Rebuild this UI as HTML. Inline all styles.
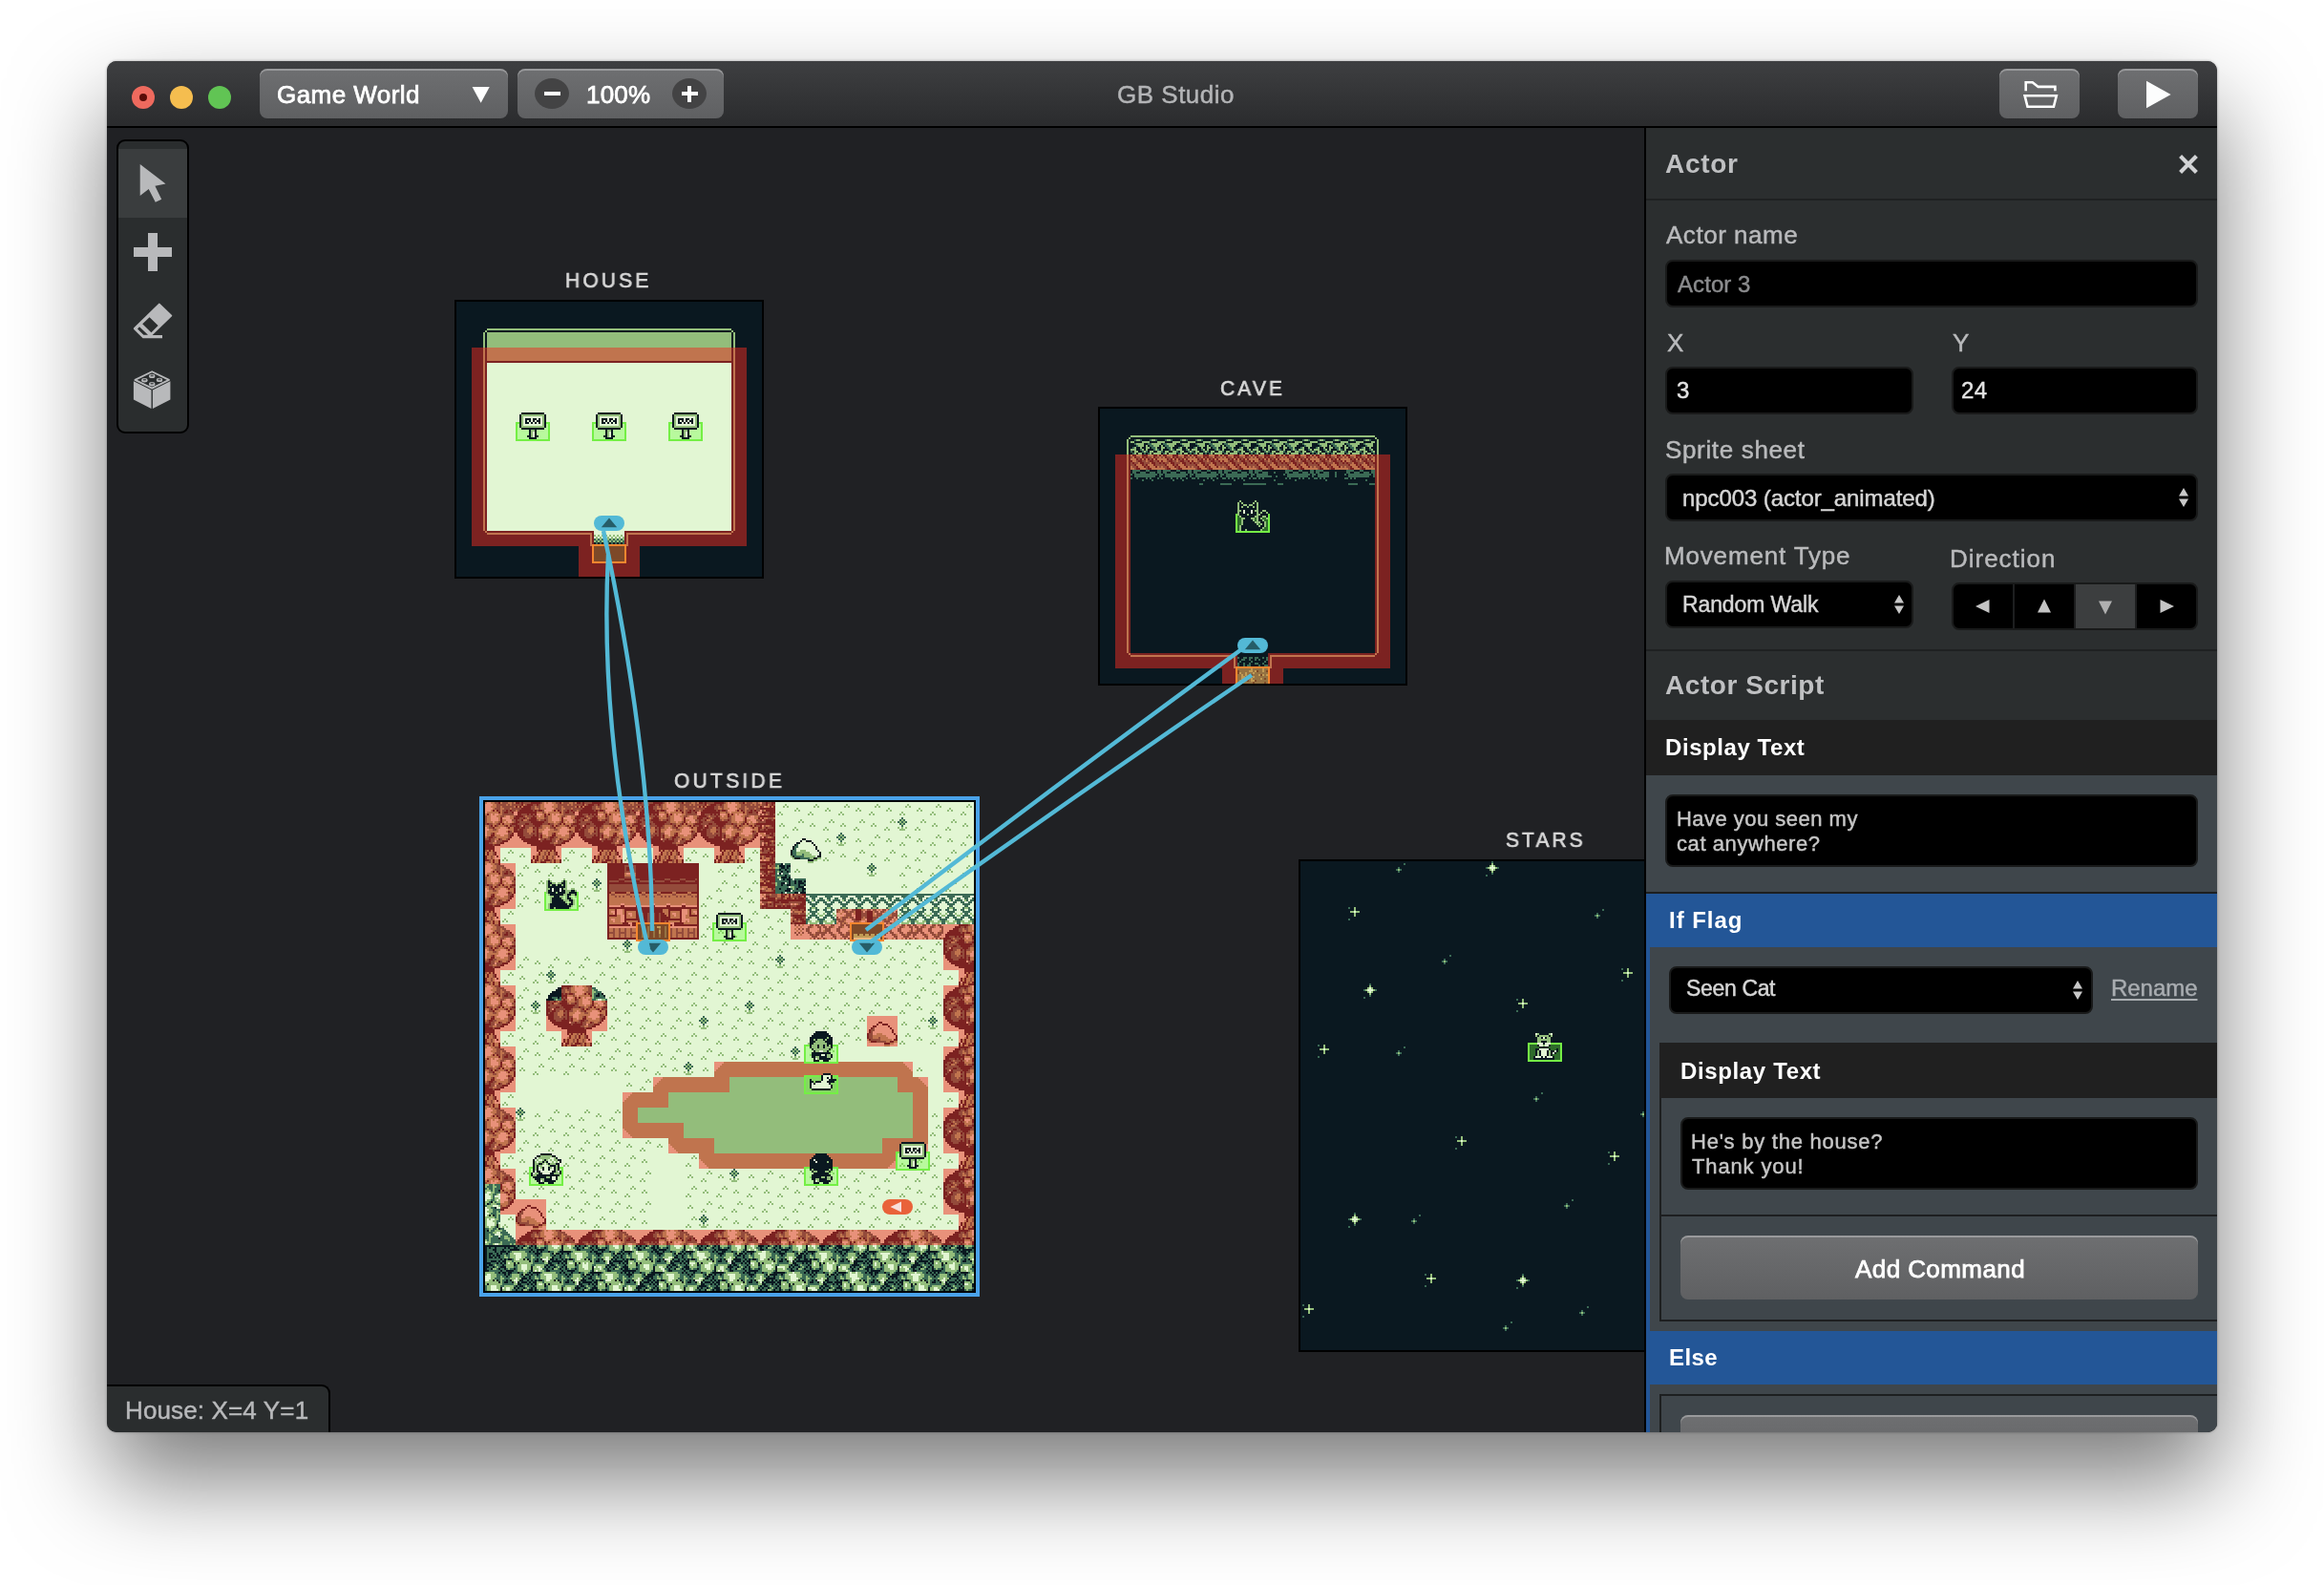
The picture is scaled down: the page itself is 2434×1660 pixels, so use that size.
<!DOCTYPE html>
<html lang="en"><head><meta charset="utf-8"><title>GB Studio</title>
<style>
html,body{margin:0;padding:0}
body{width:2434px;height:1660px;background:#fff;overflow:hidden;position:relative;font-family:"Liberation Sans",sans-serif}
.b{position:absolute;box-sizing:border-box}
.t{position:absolute;white-space:pre;display:block;will-change:transform}
#shadow{position:absolute;left:112px;top:64px;width:2210px;height:1436px;border-radius:10px;
 box-shadow:0 50px 100px rgba(0,0,0,.52),0 0 3px rgba(0,0,0,.35)}
#win{position:absolute;left:112px;top:64px;width:2210px;height:1436px;border-radius:10px;overflow:hidden;background:#202124}
#in{position:absolute;left:-112px;top:-64px;width:2434px;height:1660px}
.tb{background:linear-gradient(#6e6f71,#5f6062);border-radius:8px;box-shadow:inset 0 2px 0 rgba(255,255,255,.3)}
.inp{background:#000;border-radius:8px;border:2px solid #191a1a}
</style></head>
<body>
<div id="shadow"></div>
<div id="win"><div id="in">
<svg class="b" style="left:0;top:0" width="2434" height="1660" viewBox="0 0 2434 1660" shape-rendering="crispEdges" fill="none"><rect x="476" y="314" width="324" height="292" fill="#000"/><svg x="478" y="316" width="320" height="288" viewBox="0 0 160 144"><rect width="160" height="144" fill="#0a1820"/><path stroke="#e2f6d3" d="M16 32.5h128M16 33.5h128M16 34.5h128M16 35.5h128M16 36.5h128M16 37.5h128M16 38.5h128M16 39.5h128M16 40.5h128M16 41.5h128M16 42.5h128M16 43.5h128M16 44.5h128M16 45.5h128M16 46.5h128M16 47.5h128M16 48.5h128M16 49.5h128M16 50.5h128M16 51.5h128M16 52.5h128M16 53.5h128M16 54.5h128M16 55.5h128M16 56.5h128M16 57.5h128M16 58.5h18M46 58.5h28M86 58.5h28M126 58.5h18M16 59.5h17M47 59.5h26M87 59.5h26M127 59.5h17M16 60.5h17M35 60.5h10M47 60.5h26M75 60.5h10M87 60.5h26M115 60.5h10M127 60.5h17M16 61.5h17M35 61.5h1M39 61.5h1M42 61.5h1M44 61.5h1M47 61.5h26M75 61.5h1M79 61.5h1M82 61.5h1M84 61.5h1M87 61.5h26M115 61.5h1M119 61.5h1M122 61.5h1M124 61.5h1M127 61.5h17M16 62.5h17M35 62.5h1M37 62.5h1M39 62.5h1M41 62.5h1M44 62.5h1M47 62.5h26M75 62.5h1M77 62.5h1M79 62.5h1M81 62.5h1M84 62.5h1M87 62.5h26M115 62.5h1M117 62.5h1M119 62.5h1M121 62.5h1M124 62.5h1M127 62.5h17M16 63.5h17M35 63.5h1M38 63.5h1M40 63.5h1M42 63.5h1M44 63.5h1M47 63.5h26M75 63.5h1M78 63.5h1M80 63.5h1M82 63.5h1M84 63.5h1M87 63.5h26M115 63.5h1M118 63.5h1M120 63.5h1M122 63.5h1M124 63.5h1M127 63.5h17M16 64.5h17M35 64.5h10M47 64.5h26M75 64.5h10M87 64.5h26M115 64.5h10M127 64.5h17M16 65.5h17M47 65.5h26M87 65.5h26M127 65.5h17M16 66.5h18M46 66.5h28M86 66.5h28M126 66.5h18M16 67.5h22M42 67.5h36M82 67.5h36M122 67.5h22M16 68.5h22M40 68.5h1M42 68.5h36M80 68.5h1M82 68.5h36M120 68.5h1M122 68.5h22M16 69.5h22M40 69.5h1M42 69.5h36M80 69.5h1M82 69.5h36M120 69.5h1M122 69.5h22M16 70.5h21M40 70.5h1M43 70.5h34M80 70.5h1M83 70.5h34M120 70.5h1M123 70.5h21M16 71.5h22M42 71.5h36M82 71.5h36M122 71.5h22M16 72.5h128M16 73.5h128M16 74.5h128M16 75.5h128M16 76.5h128M16 77.5h128M16 78.5h128M16 79.5h128M16 80.5h128M16 81.5h128M16 82.5h128M16 83.5h128M16 84.5h128M16 85.5h128M16 86.5h128M16 87.5h128M16 88.5h128M16 89.5h128M16 90.5h128M16 91.5h128M16 92.5h128M16 93.5h128M16 94.5h128M16 95.5h128M16 96.5h128M16 97.5h128M16 98.5h128M16 99.5h128M16 100.5h128M16 101.5h128M16 102.5h128M16 103.5h128M16 104.5h128M16 105.5h128M16 106.5h128M16 107.5h128M16 108.5h128M16 109.5h128M16 110.5h128M16 111.5h128M16 112.5h128M16 113.5h128M16 114.5h128M16 115.5h128M16 116.5h128M16 117.5h128M16 118.5h128M16 119.5h128M72 120.5h16M72 121.5h16M73 122.5h1M75 122.5h1M77 122.5h1M79 122.5h1M81 122.5h1M83 122.5h1M85 122.5h1M87 122.5h1M72 123.5h1M74 123.5h1M76 123.5h1M78 123.5h1M80 123.5h1M82 123.5h1M84 123.5h1M86 123.5h1"/><path stroke="#93bd7b" d="M16 14.5h128M15 15.5h1M144 15.5h1M14 16.5h1M16 16.5h128M145 16.5h1M14 17.5h1M16 17.5h128M145 17.5h1M14 18.5h1M16 18.5h128M145 18.5h1M14 19.5h1M16 19.5h128M145 19.5h1M14 20.5h1M16 20.5h128M145 20.5h1M14 21.5h1M16 21.5h128M145 21.5h1M14 22.5h1M16 22.5h128M145 22.5h1M14 23.5h1M16 23.5h128M145 23.5h1M14 24.5h1M16 24.5h128M145 24.5h1M14 25.5h1M16 25.5h128M145 25.5h1M14 26.5h1M16 26.5h128M145 26.5h1M14 27.5h1M16 27.5h128M145 27.5h1M14 28.5h1M16 28.5h128M145 28.5h1M14 29.5h1M16 29.5h128M145 29.5h1M14 30.5h1M16 30.5h128M145 30.5h1M14 31.5h1M145 31.5h1M14 32.5h1M145 32.5h1M14 33.5h1M145 33.5h1M14 34.5h1M145 34.5h1M14 35.5h1M145 35.5h1M14 36.5h1M145 36.5h1M14 37.5h1M145 37.5h1M14 38.5h1M145 38.5h1M14 39.5h1M145 39.5h1M14 40.5h1M145 40.5h1M14 41.5h1M145 41.5h1M14 42.5h1M145 42.5h1M14 43.5h1M145 43.5h1M14 44.5h1M145 44.5h1M14 45.5h1M145 45.5h1M14 46.5h1M145 46.5h1M14 47.5h1M145 47.5h1M14 48.5h1M145 48.5h1M14 49.5h1M145 49.5h1M14 50.5h1M145 50.5h1M14 51.5h1M145 51.5h1M14 52.5h1M145 52.5h1M14 53.5h1M145 53.5h1M14 54.5h1M145 54.5h1M14 55.5h1M145 55.5h1M14 56.5h1M145 56.5h1M14 57.5h1M145 57.5h1M14 58.5h1M145 58.5h1M14 59.5h1M34 59.5h12M74 59.5h12M114 59.5h12M145 59.5h1M14 60.5h1M34 60.5h1M45 60.5h1M74 60.5h1M85 60.5h1M114 60.5h1M125 60.5h1M145 60.5h1M14 61.5h1M34 61.5h1M45 61.5h1M74 61.5h1M85 61.5h1M114 61.5h1M125 61.5h1M145 61.5h1M14 62.5h1M34 62.5h1M45 62.5h1M74 62.5h1M85 62.5h1M114 62.5h1M125 62.5h1M145 62.5h1M14 63.5h1M34 63.5h1M45 63.5h1M74 63.5h1M85 63.5h1M114 63.5h1M125 63.5h1M145 63.5h1M14 64.5h1M34 64.5h1M45 64.5h1M74 64.5h1M85 64.5h1M114 64.5h1M125 64.5h1M145 64.5h1M14 65.5h1M34 65.5h12M74 65.5h12M114 65.5h12M145 65.5h1M14 66.5h1M145 66.5h1M14 67.5h1M39 67.5h2M79 67.5h2M119 67.5h2M145 67.5h1M14 68.5h1M39 68.5h1M79 68.5h1M119 68.5h1M145 68.5h1M14 69.5h1M39 69.5h1M79 69.5h1M119 69.5h1M145 69.5h1M14 70.5h1M39 70.5h1M79 70.5h1M119 70.5h1M145 70.5h1M14 71.5h1M145 71.5h1M14 72.5h1M145 72.5h1M14 73.5h1M145 73.5h1M14 74.5h1M145 74.5h1M14 75.5h1M145 75.5h1M14 76.5h1M145 76.5h1M14 77.5h1M145 77.5h1M14 78.5h1M145 78.5h1M14 79.5h1M145 79.5h1M14 80.5h1M145 80.5h1M14 81.5h1M145 81.5h1M14 82.5h1M145 82.5h1M14 83.5h1M145 83.5h1M14 84.5h1M145 84.5h1M14 85.5h1M145 85.5h1M14 86.5h1M145 86.5h1M14 87.5h1M145 87.5h1M14 88.5h1M145 88.5h1M14 89.5h1M145 89.5h1M14 90.5h1M145 90.5h1M14 91.5h1M145 91.5h1M14 92.5h1M145 92.5h1M14 93.5h1M145 93.5h1M14 94.5h1M145 94.5h1M14 95.5h1M145 95.5h1M14 96.5h1M145 96.5h1M14 97.5h1M145 97.5h1M14 98.5h1M145 98.5h1M14 99.5h1M145 99.5h1M14 100.5h1M145 100.5h1M14 101.5h1M145 101.5h1M14 102.5h1M145 102.5h1M14 103.5h1M145 103.5h1M14 104.5h1M145 104.5h1M14 105.5h1M145 105.5h1M14 106.5h1M145 106.5h1M14 107.5h1M145 107.5h1M14 108.5h1M145 108.5h1M14 109.5h1M145 109.5h1M14 110.5h1M145 110.5h1M14 111.5h1M145 111.5h1M14 112.5h1M145 112.5h1M14 113.5h1M145 113.5h1M14 114.5h1M145 114.5h1M14 115.5h1M145 115.5h1M14 116.5h1M145 116.5h1M14 117.5h1M145 117.5h1M14 118.5h1M145 118.5h1M14 119.5h1M145 119.5h1M15 120.5h1M144 120.5h1M16 121.5h55M89 121.5h55M70 122.5h1M72 122.5h1M74 122.5h1M76 122.5h1M78 122.5h1M80 122.5h1M82 122.5h1M84 122.5h1M86 122.5h1M89 122.5h1M70 123.5h1M73 123.5h1M75 123.5h1M77 123.5h1M79 123.5h1M81 123.5h1M83 123.5h1M85 123.5h1M87 123.5h1M89 123.5h1M70 124.5h1M73 124.5h1M75 124.5h1M77 124.5h1M79 124.5h1M81 124.5h1M83 124.5h1M85 124.5h1M87 124.5h1M89 124.5h1M70 125.5h1M72 125.5h1M74 125.5h1M76 125.5h1M78 125.5h1M80 125.5h1M82 125.5h1M84 125.5h1M86 125.5h1M89 125.5h1M70 126.5h1M89 126.5h1M70 127.5h1M89 127.5h1"/><path stroke="#3b6a55" d="M72 124.5h1M74 124.5h1M76 124.5h1M78 124.5h1M80 124.5h1M82 124.5h1M84 124.5h1M86 124.5h1M73 125.5h1M75 125.5h1M77 125.5h1M79 125.5h1M81 125.5h1M83 125.5h1M85 125.5h1M87 125.5h1M73 126.5h1M75 126.5h1M77 126.5h1M79 126.5h1M81 126.5h1M83 126.5h1M85 126.5h1M87 126.5h1M72 127.5h1M74 127.5h1M76 127.5h1M78 127.5h1M80 127.5h1M82 127.5h1M84 127.5h1M86 127.5h1"/><path d="M8 24h144v8h-144zM8 32h8v8h-8zM144 32h8v8h-8zM8 40h8v8h-8zM144 40h8v8h-8zM8 48h8v8h-8zM144 48h8v8h-8zM8 56h8v8h-8zM144 56h8v8h-8zM8 64h8v8h-8zM144 64h8v8h-8zM8 72h8v8h-8zM144 72h8v8h-8zM8 80h8v8h-8zM144 80h8v8h-8zM8 88h8v8h-8zM144 88h8v8h-8zM8 96h8v8h-8zM144 96h8v8h-8zM8 104h8v8h-8zM144 104h8v8h-8zM8 112h8v8h-8zM144 112h8v8h-8zM8 120h64v8h-64zM88 120h64v8h-64zM64 128h8v8h-8zM88 128h8v8h-8zM64 136h32v8h-32z" fill="rgba(238,44,34,.5)"/><rect x="71.5" y="127.5" width="17" height="9" fill="rgba(240,122,48,.5)" stroke="#f5862f" stroke-width="1"/><rect x="31.5" y="63.5" width="17" height="9" fill="rgba(110,255,60,.36)" stroke="#74ef45" stroke-width="1"/><rect x="71.5" y="63.5" width="17" height="9" fill="rgba(110,255,60,.36)" stroke="#74ef45" stroke-width="1"/><rect x="111.5" y="63.5" width="17" height="9" fill="rgba(110,255,60,.36)" stroke="#74ef45" stroke-width="1"/><path stroke="#e2f6d3" d="M35 60.5h10M75 60.5h10M115 60.5h10M35 61.5h1M39 61.5h1M42 61.5h1M44 61.5h1M75 61.5h1M79 61.5h1M82 61.5h1M84 61.5h1M115 61.5h1M119 61.5h1M122 61.5h1M124 61.5h1M35 62.5h1M37 62.5h1M39 62.5h1M41 62.5h1M44 62.5h1M75 62.5h1M77 62.5h1M79 62.5h1M81 62.5h1M84 62.5h1M115 62.5h1M117 62.5h1M119 62.5h1M121 62.5h1M124 62.5h1M35 63.5h1M38 63.5h1M40 63.5h1M42 63.5h1M44 63.5h1M75 63.5h1M78 63.5h1M80 63.5h1M82 63.5h1M84 63.5h1M115 63.5h1M118 63.5h1M120 63.5h1M122 63.5h1M124 63.5h1M35 64.5h10M75 64.5h10M115 64.5h10M40 68.5h1M80 68.5h1M120 68.5h1M40 69.5h1M80 69.5h1M120 69.5h1M40 70.5h1M80 70.5h1M120 70.5h1"/><path stroke="#93bd7b" d="M34 59.5h12M74 59.5h12M114 59.5h12M34 60.5h1M45 60.5h1M74 60.5h1M85 60.5h1M114 60.5h1M125 60.5h1M34 61.5h1M45 61.5h1M74 61.5h1M85 61.5h1M114 61.5h1M125 61.5h1M34 62.5h1M45 62.5h1M74 62.5h1M85 62.5h1M114 62.5h1M125 62.5h1M34 63.5h1M45 63.5h1M74 63.5h1M85 63.5h1M114 63.5h1M125 63.5h1M34 64.5h1M45 64.5h1M74 64.5h1M85 64.5h1M114 64.5h1M125 64.5h1M34 65.5h12M74 65.5h12M114 65.5h12M39 67.5h2M79 67.5h2M119 67.5h2M39 68.5h1M79 68.5h1M119 68.5h1M39 69.5h1M79 69.5h1M119 69.5h1M39 70.5h1M79 70.5h1M119 70.5h1"/><path stroke="#0a1820" d="M34 58.5h12M74 58.5h12M114 58.5h12M33 59.5h1M46 59.5h1M73 59.5h1M86 59.5h1M113 59.5h1M126 59.5h1M33 60.5h1M46 60.5h1M73 60.5h1M86 60.5h1M113 60.5h1M126 60.5h1M33 61.5h1M36 61.5h3M40 61.5h2M43 61.5h1M46 61.5h1M73 61.5h1M76 61.5h3M80 61.5h2M83 61.5h1M86 61.5h1M113 61.5h1M116 61.5h3M120 61.5h2M123 61.5h1M126 61.5h1M33 62.5h1M36 62.5h1M38 62.5h1M40 62.5h1M42 62.5h2M46 62.5h1M73 62.5h1M76 62.5h1M78 62.5h1M80 62.5h1M82 62.5h2M86 62.5h1M113 62.5h1M116 62.5h1M118 62.5h1M120 62.5h1M122 62.5h2M126 62.5h1M33 63.5h1M36 63.5h2M39 63.5h1M41 63.5h1M43 63.5h1M46 63.5h1M73 63.5h1M76 63.5h2M79 63.5h1M81 63.5h1M83 63.5h1M86 63.5h1M113 63.5h1M116 63.5h2M119 63.5h1M121 63.5h1M123 63.5h1M126 63.5h1M33 64.5h1M46 64.5h1M73 64.5h1M86 64.5h1M113 64.5h1M126 64.5h1M33 65.5h1M46 65.5h1M73 65.5h1M86 65.5h1M113 65.5h1M126 65.5h1M34 66.5h12M74 66.5h12M114 66.5h12M38 67.5h1M41 67.5h1M78 67.5h1M81 67.5h1M118 67.5h1M121 67.5h1M38 68.5h1M41 68.5h1M78 68.5h1M81 68.5h1M118 68.5h1M121 68.5h1M38 69.5h1M41 69.5h1M78 69.5h1M81 69.5h1M118 69.5h1M121 69.5h1M37 70.5h2M41 70.5h2M77 70.5h2M81 70.5h2M117 70.5h2M121 70.5h2M38 71.5h4M78 71.5h4M118 71.5h4"/></svg><rect x="1150" y="426" width="324" height="292" fill="#000"/><svg x="1152" y="428" width="320" height="288" viewBox="0 0 160 144"><rect width="160" height="144" fill="#0a1820"/><path stroke="#e2f6d3" d="M75 53.5h1M79 53.5h1M75 54.5h1M79 54.5h1"/><path stroke="#93bd7b" d="M16 14.5h128M15 15.5h1M144 15.5h1M14 16.5h1M19 16.5h2M27 16.5h2M35 16.5h2M43 16.5h2M51 16.5h2M59 16.5h2M67 16.5h2M75 16.5h2M83 16.5h2M91 16.5h2M99 16.5h2M107 16.5h2M115 16.5h2M123 16.5h2M131 16.5h2M139 16.5h2M145 16.5h1M14 17.5h1M16 17.5h2M22 17.5h4M30 17.5h4M38 17.5h4M46 17.5h4M54 17.5h4M62 17.5h4M70 17.5h4M78 17.5h4M86 17.5h4M94 17.5h4M102 17.5h4M110 17.5h4M118 17.5h4M126 17.5h4M134 17.5h4M142 17.5h2M145 17.5h1M14 18.5h1M19 18.5h4M27 18.5h5M35 18.5h5M43 18.5h4M51 18.5h4M59 18.5h5M67 18.5h5M75 18.5h4M83 18.5h4M91 18.5h5M99 18.5h5M107 18.5h4M115 18.5h4M123 18.5h5M131 18.5h5M139 18.5h4M145 18.5h1M14 19.5h1M20 19.5h3M24 19.5h1M28 19.5h3M32 19.5h1M36 19.5h3M44 19.5h3M52 19.5h3M56 19.5h1M60 19.5h3M64 19.5h1M68 19.5h3M76 19.5h3M84 19.5h3M88 19.5h1M92 19.5h3M96 19.5h1M100 19.5h3M108 19.5h3M116 19.5h3M120 19.5h1M124 19.5h3M128 19.5h1M132 19.5h3M140 19.5h3M145 19.5h1M14 20.5h1M18 20.5h1M21 20.5h1M24 20.5h2M29 20.5h1M32 20.5h2M37 20.5h1M42 20.5h1M45 20.5h1M50 20.5h1M53 20.5h1M56 20.5h2M61 20.5h1M64 20.5h2M69 20.5h1M74 20.5h1M77 20.5h1M82 20.5h1M85 20.5h1M88 20.5h2M93 20.5h1M96 20.5h2M101 20.5h1M106 20.5h1M109 20.5h1M114 20.5h1M117 20.5h1M120 20.5h2M125 20.5h1M128 20.5h2M133 20.5h1M138 20.5h1M141 20.5h1M145 20.5h1M14 21.5h1M16 21.5h3M22 21.5h1M24 21.5h1M29 21.5h1M32 21.5h1M37 21.5h1M40 21.5h3M46 21.5h1M48 21.5h3M54 21.5h1M56 21.5h1M61 21.5h1M64 21.5h1M69 21.5h1M72 21.5h3M78 21.5h1M80 21.5h3M86 21.5h1M88 21.5h1M93 21.5h1M96 21.5h1M101 21.5h1M104 21.5h3M110 21.5h1M112 21.5h3M118 21.5h1M120 21.5h1M125 21.5h1M128 21.5h1M133 21.5h1M136 21.5h3M142 21.5h1M145 21.5h1M14 22.5h1M18 22.5h2M23 22.5h1M26 22.5h2M30 22.5h2M34 22.5h2M38 22.5h2M42 22.5h2M47 22.5h1M50 22.5h2M55 22.5h1M58 22.5h2M62 22.5h2M66 22.5h2M70 22.5h2M74 22.5h2M79 22.5h1M82 22.5h2M87 22.5h1M90 22.5h2M94 22.5h2M98 22.5h2M102 22.5h2M106 22.5h2M111 22.5h1M114 22.5h2M119 22.5h1M122 22.5h2M126 22.5h2M130 22.5h2M134 22.5h2M138 22.5h2M143 22.5h1M145 22.5h1M14 23.5h1M18 23.5h1M20 23.5h2M26 23.5h1M28 23.5h4M34 23.5h1M36 23.5h4M42 23.5h1M44 23.5h2M50 23.5h1M52 23.5h2M58 23.5h1M60 23.5h4M66 23.5h1M68 23.5h4M74 23.5h1M76 23.5h2M82 23.5h1M84 23.5h2M90 23.5h1M92 23.5h4M98 23.5h1M100 23.5h4M106 23.5h1M108 23.5h2M114 23.5h1M116 23.5h2M122 23.5h1M124 23.5h4M130 23.5h1M132 23.5h4M138 23.5h1M140 23.5h2M145 23.5h1M14 24.5h1M16 24.5h1M19 24.5h3M25 24.5h3M30 24.5h1M32 24.5h1M35 24.5h3M41 24.5h3M46 24.5h1M48 24.5h1M51 24.5h3M57 24.5h3M62 24.5h1M64 24.5h1M67 24.5h3M73 24.5h3M78 24.5h1M80 24.5h1M83 24.5h3M89 24.5h3M94 24.5h1M96 24.5h1M99 24.5h3M105 24.5h3M110 24.5h1M112 24.5h1M115 24.5h3M121 24.5h3M126 24.5h1M128 24.5h1M131 24.5h3M137 24.5h3M142 24.5h1M145 24.5h1M14 25.5h1M17 25.5h1M21 25.5h1M27 25.5h1M31 25.5h1M33 25.5h1M37 25.5h1M43 25.5h1M47 25.5h1M49 25.5h1M53 25.5h1M59 25.5h1M63 25.5h1M65 25.5h1M69 25.5h1M75 25.5h1M79 25.5h1M81 25.5h1M85 25.5h1M91 25.5h1M95 25.5h1M97 25.5h1M101 25.5h1M107 25.5h1M111 25.5h1M113 25.5h1M117 25.5h1M123 25.5h1M127 25.5h1M129 25.5h1M133 25.5h1M139 25.5h1M143 25.5h1M145 25.5h1M14 26.5h1M16 26.5h3M22 26.5h1M24 26.5h1M28 26.5h1M30 26.5h5M38 26.5h1M40 26.5h1M44 26.5h1M46 26.5h5M54 26.5h1M56 26.5h1M60 26.5h1M62 26.5h5M70 26.5h1M72 26.5h1M76 26.5h1M78 26.5h5M86 26.5h1M88 26.5h1M92 26.5h1M94 26.5h5M102 26.5h1M104 26.5h1M108 26.5h1M110 26.5h5M118 26.5h1M120 26.5h1M124 26.5h1M126 26.5h5M134 26.5h1M136 26.5h1M140 26.5h1M142 26.5h2M145 26.5h1M14 27.5h1M17 27.5h2M24 27.5h1M31 27.5h1M33 27.5h2M40 27.5h1M47 27.5h1M49 27.5h2M56 27.5h1M63 27.5h1M65 27.5h2M72 27.5h1M79 27.5h1M81 27.5h2M88 27.5h1M95 27.5h1M97 27.5h2M104 27.5h1M111 27.5h1M113 27.5h2M120 27.5h1M127 27.5h1M129 27.5h2M136 27.5h1M143 27.5h1M145 27.5h1M14 28.5h1M20 28.5h1M26 28.5h1M36 28.5h1M42 28.5h1M52 28.5h1M58 28.5h1M68 28.5h1M74 28.5h1M84 28.5h1M90 28.5h1M100 28.5h1M106 28.5h1M116 28.5h1M122 28.5h1M132 28.5h1M138 28.5h1M145 28.5h1M14 29.5h1M19 29.5h3M25 29.5h3M35 29.5h3M41 29.5h3M51 29.5h3M57 29.5h3M67 29.5h3M73 29.5h3M83 29.5h3M89 29.5h3M99 29.5h3M105 29.5h3M115 29.5h3M121 29.5h3M131 29.5h3M137 29.5h3M145 29.5h1M14 30.5h1M16 30.5h1M20 30.5h3M26 30.5h3M30 30.5h1M32 30.5h1M36 30.5h3M42 30.5h3M46 30.5h1M48 30.5h1M52 30.5h3M58 30.5h3M62 30.5h1M64 30.5h1M68 30.5h3M74 30.5h3M78 30.5h1M80 30.5h1M84 30.5h3M90 30.5h3M94 30.5h1M96 30.5h1M100 30.5h3M106 30.5h3M110 30.5h1M112 30.5h1M116 30.5h3M122 30.5h3M126 30.5h1M128 30.5h1M132 30.5h3M138 30.5h3M142 30.5h1M145 30.5h1M14 31.5h1M16 31.5h2M21 31.5h3M27 31.5h7M37 31.5h3M43 31.5h7M53 31.5h3M59 31.5h7M69 31.5h3M75 31.5h7M85 31.5h3M91 31.5h7M101 31.5h3M107 31.5h7M117 31.5h3M123 31.5h7M133 31.5h3M139 31.5h5M145 31.5h1M14 32.5h1M145 32.5h1M14 33.5h1M145 33.5h1M14 34.5h1M145 34.5h1M14 35.5h1M145 35.5h1M14 36.5h1M145 36.5h1M14 37.5h1M145 37.5h1M14 38.5h1M145 38.5h1M14 39.5h1M145 39.5h1M14 40.5h1M145 40.5h1M14 41.5h1M145 41.5h1M14 42.5h1M145 42.5h1M14 43.5h1M145 43.5h1M14 44.5h1M145 44.5h1M14 45.5h1M145 45.5h1M14 46.5h1M145 46.5h1M14 47.5h1M145 47.5h1M14 48.5h1M73 48.5h1M81 48.5h1M145 48.5h1M14 49.5h1M72 49.5h1M74 49.5h1M80 49.5h1M82 49.5h1M145 49.5h1M14 50.5h1M72 50.5h1M75 50.5h2M78 50.5h2M82 50.5h1M145 50.5h1M14 51.5h1M72 51.5h1M74 51.5h1M77 51.5h1M80 51.5h1M82 51.5h1M145 51.5h1M14 52.5h1M72 52.5h1M82 52.5h1M145 52.5h1M14 53.5h1M72 53.5h2M81 53.5h2M85 53.5h2M145 53.5h1M14 54.5h1M72 54.5h1M82 54.5h1M84 54.5h1M87 54.5h1M145 54.5h1M14 55.5h1M72 55.5h1M77 55.5h1M82 55.5h2M145 55.5h1M14 56.5h1M73 56.5h1M81 56.5h2M85 56.5h2M145 56.5h1M14 57.5h1M74 57.5h2M79 57.5h2M82 57.5h1M84 57.5h1M87 57.5h1M145 57.5h1M14 58.5h1M74 58.5h1M80 58.5h1M82 58.5h1M85 58.5h1M145 58.5h1M14 59.5h1M74 59.5h1M81 59.5h3M86 59.5h1M145 59.5h1M14 60.5h1M74 60.5h1M82 60.5h1M84 60.5h1M86 60.5h1M145 60.5h1M14 61.5h1M73 61.5h1M83 61.5h1M86 61.5h1M145 61.5h1M14 62.5h1M73 62.5h1M85 62.5h1M145 62.5h1M14 63.5h1M73 63.5h1M76 63.5h1M84 63.5h1M145 63.5h1M14 64.5h1M145 64.5h1M14 65.5h1M145 65.5h1M14 66.5h1M145 66.5h1M14 67.5h1M145 67.5h1M14 68.5h1M145 68.5h1M14 69.5h1M145 69.5h1M14 70.5h1M145 70.5h1M14 71.5h1M145 71.5h1M14 72.5h1M145 72.5h1M14 73.5h1M145 73.5h1M14 74.5h1M145 74.5h1M14 75.5h1M145 75.5h1M14 76.5h1M145 76.5h1M14 77.5h1M145 77.5h1M14 78.5h1M145 78.5h1M14 79.5h1M145 79.5h1M14 80.5h1M145 80.5h1M14 81.5h1M145 81.5h1M14 82.5h1M145 82.5h1M14 83.5h1M145 83.5h1M14 84.5h1M145 84.5h1M14 85.5h1M145 85.5h1M14 86.5h1M145 86.5h1M14 87.5h1M145 87.5h1M14 88.5h1M145 88.5h1M14 89.5h1M145 89.5h1M14 90.5h1M145 90.5h1M14 91.5h1M145 91.5h1M14 92.5h1M145 92.5h1M14 93.5h1M145 93.5h1M14 94.5h1M145 94.5h1M14 95.5h1M145 95.5h1M14 96.5h1M145 96.5h1M14 97.5h1M145 97.5h1M14 98.5h1M145 98.5h1M14 99.5h1M145 99.5h1M14 100.5h1M145 100.5h1M14 101.5h1M145 101.5h1M14 102.5h1M145 102.5h1M14 103.5h1M145 103.5h1M14 104.5h1M145 104.5h1M14 105.5h1M145 105.5h1M14 106.5h1M145 106.5h1M14 107.5h1M145 107.5h1M14 108.5h1M145 108.5h1M14 109.5h1M145 109.5h1M14 110.5h1M145 110.5h1M14 111.5h1M145 111.5h1M14 112.5h1M145 112.5h1M14 113.5h1M145 113.5h1M14 114.5h1M145 114.5h1M14 115.5h1M145 115.5h1M14 116.5h1M145 116.5h1M14 117.5h1M145 117.5h1M14 118.5h1M145 118.5h1M14 119.5h1M145 119.5h1M14 120.5h1M145 120.5h1M14 121.5h1M145 121.5h1M14 122.5h1M145 122.5h1M14 123.5h1M145 123.5h1M14 124.5h1M145 124.5h1M14 125.5h1M145 125.5h1M14 126.5h1M145 126.5h1M14 127.5h1M145 127.5h1M15 128.5h1M144 128.5h1M16 129.5h55M89 129.5h55M70 130.5h1M89 130.5h1M70 131.5h1M89 131.5h1M70 132.5h1M89 132.5h1M70 133.5h1M89 133.5h1M70 134.5h1M89 134.5h1M70 135.5h1M89 135.5h1M79 136.5h1M85 136.5h1M78 137.5h2M81 137.5h1M85 137.5h1M73 138.5h1M76 138.5h1M80 138.5h1M74 139.5h1M76 139.5h1M78 139.5h1M83 139.5h1M85 139.5h1M87 139.5h1M74 140.5h2M80 140.5h1M74 141.5h2M79 141.5h1M84 141.5h1M73 142.5h1M79 142.5h2M73 143.5h1"/><path stroke="#3b6a55" d="M18 16.5h1M21 16.5h1M26 16.5h1M29 16.5h1M34 16.5h1M37 16.5h1M42 16.5h1M45 16.5h1M50 16.5h1M53 16.5h1M58 16.5h1M61 16.5h1M66 16.5h1M69 16.5h1M74 16.5h1M77 16.5h1M82 16.5h1M85 16.5h1M90 16.5h1M93 16.5h1M98 16.5h1M101 16.5h1M106 16.5h1M109 16.5h1M114 16.5h1M117 16.5h1M122 16.5h1M125 16.5h1M130 16.5h1M133 16.5h1M138 16.5h1M141 16.5h1M18 18.5h1M25 18.5h2M33 18.5h2M42 18.5h1M50 18.5h1M57 18.5h2M65 18.5h2M74 18.5h1M82 18.5h1M89 18.5h2M97 18.5h2M106 18.5h1M114 18.5h1M121 18.5h2M129 18.5h2M138 18.5h1M19 19.5h1M26 19.5h2M34 19.5h2M43 19.5h1M51 19.5h1M58 19.5h2M66 19.5h2M75 19.5h1M83 19.5h1M90 19.5h2M98 19.5h2M107 19.5h1M115 19.5h1M122 19.5h2M130 19.5h2M139 19.5h1M17 20.5h1M27 20.5h2M35 20.5h2M41 20.5h1M49 20.5h1M59 20.5h2M67 20.5h2M73 20.5h1M81 20.5h1M91 20.5h2M99 20.5h2M105 20.5h1M113 20.5h1M123 20.5h2M131 20.5h2M137 20.5h1M21 21.5h1M28 21.5h1M30 21.5h1M36 21.5h1M38 21.5h1M45 21.5h1M53 21.5h1M60 21.5h1M62 21.5h1M68 21.5h1M70 21.5h1M77 21.5h1M85 21.5h1M92 21.5h1M94 21.5h1M100 21.5h1M102 21.5h1M109 21.5h1M117 21.5h1M124 21.5h1M126 21.5h1M132 21.5h1M134 21.5h1M141 21.5h1M16 22.5h1M22 22.5h1M24 22.5h1M32 22.5h1M40 22.5h1M46 22.5h1M48 22.5h1M54 22.5h1M56 22.5h1M64 22.5h1M72 22.5h1M78 22.5h1M80 22.5h1M86 22.5h1M88 22.5h1M96 22.5h1M104 22.5h1M110 22.5h1M112 22.5h1M118 22.5h1M120 22.5h1M128 22.5h1M136 22.5h1M142 22.5h1M17 23.5h1M23 23.5h1M25 23.5h1M33 23.5h1M41 23.5h1M47 23.5h1M49 23.5h1M55 23.5h1M57 23.5h1M65 23.5h1M73 23.5h1M79 23.5h1M81 23.5h1M87 23.5h1M89 23.5h1M97 23.5h1M105 23.5h1M111 23.5h1M113 23.5h1M119 23.5h1M121 23.5h1M129 23.5h1M137 23.5h1M143 23.5h1M16 25.5h1M19 25.5h2M23 25.5h1M25 25.5h2M29 25.5h2M32 25.5h1M35 25.5h2M39 25.5h1M41 25.5h2M45 25.5h2M48 25.5h1M51 25.5h2M55 25.5h1M57 25.5h2M61 25.5h2M64 25.5h1M67 25.5h2M71 25.5h1M73 25.5h2M77 25.5h2M80 25.5h1M83 25.5h2M87 25.5h1M89 25.5h2M93 25.5h2M96 25.5h1M99 25.5h2M103 25.5h1M105 25.5h2M109 25.5h2M112 25.5h1M115 25.5h2M119 25.5h1M121 25.5h2M125 25.5h2M128 25.5h1M131 25.5h2M135 25.5h1M137 25.5h2M141 25.5h2M20 26.5h1M26 26.5h1M36 26.5h1M42 26.5h1M52 26.5h1M58 26.5h1M68 26.5h1M74 26.5h1M84 26.5h1M90 26.5h1M100 26.5h1M106 26.5h1M116 26.5h1M122 26.5h1M132 26.5h1M138 26.5h1M19 27.5h1M22 27.5h2M25 27.5h1M28 27.5h2M35 27.5h1M38 27.5h2M41 27.5h1M44 27.5h2M51 27.5h1M54 27.5h2M57 27.5h1M60 27.5h2M67 27.5h1M70 27.5h2M73 27.5h1M76 27.5h2M83 27.5h1M86 27.5h2M89 27.5h1M92 27.5h2M99 27.5h1M102 27.5h2M105 27.5h1M108 27.5h2M115 27.5h1M118 27.5h2M121 27.5h1M124 27.5h2M131 27.5h1M134 27.5h2M137 27.5h1M140 27.5h2M16 28.5h1M18 28.5h2M23 28.5h3M29 28.5h2M32 28.5h1M34 28.5h2M39 28.5h3M45 28.5h2M48 28.5h1M50 28.5h2M55 28.5h3M61 28.5h2M64 28.5h1M66 28.5h2M71 28.5h3M77 28.5h2M80 28.5h1M82 28.5h2M87 28.5h3M93 28.5h2M96 28.5h1M98 28.5h2M103 28.5h3M109 28.5h2M112 28.5h1M114 28.5h2M119 28.5h3M125 28.5h2M128 28.5h1M130 28.5h2M135 28.5h3M141 28.5h2M16 29.5h2M23 29.5h1M29 29.5h5M39 29.5h1M45 29.5h5M55 29.5h1M61 29.5h5M71 29.5h1M77 29.5h5M87 29.5h1M93 29.5h5M103 29.5h1M109 29.5h5M119 29.5h1M125 29.5h5M135 29.5h1M141 29.5h3M17 30.5h2M24 30.5h1M31 30.5h1M33 30.5h2M40 30.5h1M47 30.5h1M49 30.5h2M56 30.5h1M63 30.5h1M65 30.5h2M72 30.5h1M79 30.5h1M81 30.5h2M88 30.5h1M95 30.5h1M97 30.5h2M104 30.5h1M111 30.5h1M113 30.5h2M120 30.5h1M127 30.5h1M129 30.5h2M136 30.5h1M143 30.5h1M18 31.5h1M24 31.5h1M34 31.5h1M40 31.5h1M50 31.5h1M56 31.5h1M66 31.5h1M72 31.5h1M82 31.5h1M88 31.5h1M98 31.5h1M104 31.5h1M114 31.5h1M120 31.5h1M130 31.5h1M136 31.5h1M17 32.5h4M24 32.5h2M30 32.5h2M33 32.5h4M40 32.5h2M46 32.5h2M49 32.5h4M56 32.5h2M62 32.5h2M65 32.5h4M72 32.5h2M78 32.5h2M81 32.5h4M97 32.5h4M104 32.5h2M110 32.5h2M113 32.5h4M129 32.5h4M136 32.5h2M142 32.5h2M17 33.5h2M21 33.5h3M26 33.5h3M30 33.5h2M33 33.5h2M37 33.5h3M42 33.5h3M46 33.5h2M49 33.5h2M53 33.5h3M58 33.5h3M62 33.5h2M65 33.5h2M69 33.5h3M74 33.5h3M78 33.5h2M81 33.5h2M85 33.5h3M91 33.5h1M97 33.5h2M101 33.5h3M106 33.5h3M110 33.5h2M113 33.5h2M117 33.5h3M123 33.5h1M129 33.5h2M133 33.5h3M138 33.5h3M142 33.5h2M16 34.5h1M18 34.5h12M31 34.5h2M34 34.5h12M47 34.5h2M50 34.5h12M63 34.5h2M66 34.5h12M79 34.5h2M82 34.5h6M96 34.5h1M98 34.5h12M111 34.5h2M114 34.5h6M123 34.5h1M128 34.5h1M130 34.5h12M143 34.5h1M18 35.5h11M31 35.5h1M34 35.5h11M47 35.5h1M50 35.5h11M63 35.5h1M66 35.5h11M79 35.5h1M82 35.5h8M92 35.5h1M98 35.5h11M111 35.5h1M114 35.5h6M123 35.5h1M130 35.5h11M143 35.5h1M16 36.5h1M19 36.5h1M24 36.5h1M26 36.5h1M30 36.5h1M32 36.5h1M37 36.5h1M40 36.5h1M42 36.5h1M45 36.5h1M48 36.5h2M51 36.5h1M56 36.5h1M58 36.5h1M61 36.5h1M64 36.5h2M67 36.5h1M69 36.5h1M72 36.5h1M74 36.5h1M78 36.5h1M80 36.5h2M83 36.5h1M85 36.5h1M97 36.5h1M99 36.5h1M104 36.5h1M106 36.5h1M109 36.5h1M112 36.5h2M115 36.5h1M117 36.5h1M128 36.5h2M131 36.5h1M133 36.5h1M22 37.5h1M27 37.5h1M38 37.5h1M43 37.5h1M54 37.5h1M59 37.5h1M70 37.5h1M75 37.5h1M91 37.5h1M102 37.5h1M118 37.5h1M139 37.5h1M52 39.5h2M63 39.5h6M75 39.5h12M93 39.5h3M130 39.5h5M141 39.5h3M72 130.5h1M75 130.5h2M78 130.5h2M81 130.5h2M85 130.5h1M87 130.5h1M74 131.5h2M78 131.5h1M81 131.5h1M83 131.5h1M87 131.5h1M73 132.5h1M79 132.5h1M86 132.5h1M72 133.5h1M75 133.5h1M78 133.5h1M81 133.5h2M85 133.5h1M72 134.5h1M75 134.5h1M77 134.5h2M83 134.5h1M86 134.5h2M73 135.5h2M76 135.5h2M82 135.5h1M85 135.5h2M72 136.5h7M80 136.5h5M86 136.5h2M73 137.5h5M80 137.5h1M83 137.5h2M86 137.5h1M74 138.5h2M77 138.5h3M81 138.5h7M72 139.5h2M75 139.5h1M77 139.5h1M80 139.5h3M86 139.5h1M72 140.5h2M76 140.5h4M81 140.5h7M72 141.5h2M76 141.5h3M80 141.5h4M85 141.5h1M87 141.5h1M72 142.5h1M74 142.5h1M76 142.5h1M78 142.5h1M82 142.5h6M72 143.5h1M74 143.5h6M81 143.5h5M87 143.5h1"/><path d="M8 24h144v8h-144zM8 32h8v8h-8zM144 32h8v8h-8zM8 40h8v8h-8zM144 40h8v8h-8zM8 48h8v8h-8zM144 48h8v8h-8zM8 56h8v8h-8zM144 56h8v8h-8zM8 64h8v8h-8zM144 64h8v8h-8zM8 72h8v8h-8zM144 72h8v8h-8zM8 80h8v8h-8zM144 80h8v8h-8zM8 88h8v8h-8zM144 88h8v8h-8zM8 96h8v8h-8zM144 96h8v8h-8zM8 104h8v8h-8zM144 104h8v8h-8zM8 112h8v8h-8zM144 112h8v8h-8zM8 120h8v8h-8zM144 120h8v8h-8zM8 128h64v8h-64zM88 128h64v8h-64zM64 136h8v8h-8zM88 136h8v8h-8z" fill="rgba(238,44,34,.5)"/><rect x="71.5" y="135.5" width="17" height="9" fill="rgba(240,122,48,.5)" stroke="#f5862f" stroke-width="1"/><rect x="71.5" y="55.5" width="17" height="9" fill="rgba(110,255,60,.36)" stroke="#74ef45" stroke-width="1"/><path stroke="#e2f6d3" d="M75 53.5h1M79 53.5h1M75 54.5h1M79 54.5h1"/><path stroke="#93bd7b" d="M73 48.5h1M81 48.5h1M72 49.5h1M74 49.5h1M80 49.5h1M82 49.5h1M72 50.5h1M75 50.5h2M78 50.5h2M82 50.5h1M72 51.5h1M74 51.5h1M77 51.5h1M80 51.5h1M82 51.5h1M72 52.5h1M82 52.5h1M72 53.5h2M81 53.5h2M85 53.5h2M72 54.5h1M82 54.5h1M84 54.5h1M87 54.5h1M72 55.5h1M77 55.5h1M82 55.5h2M73 56.5h1M81 56.5h2M85 56.5h2M74 57.5h2M79 57.5h2M82 57.5h1M84 57.5h1M87 57.5h1M74 58.5h1M80 58.5h1M82 58.5h1M85 58.5h1M74 59.5h1M81 59.5h3M86 59.5h1M74 60.5h1M82 60.5h1M84 60.5h1M86 60.5h1M73 61.5h1M83 61.5h1M86 61.5h1M73 62.5h1M85 62.5h1M73 63.5h1M76 63.5h1M84 63.5h1"/><path stroke="#0a1820" d="M73 49.5h1M81 49.5h1M73 50.5h2M80 50.5h2M73 51.5h1M75 51.5h2M78 51.5h2M81 51.5h1M73 52.5h9M74 53.5h1M76 53.5h3M80 53.5h1M73 54.5h2M76 54.5h3M80 54.5h2M85 54.5h2M73 55.5h4M78 55.5h4M84 55.5h4M74 56.5h7M83 56.5h2M87 56.5h1M76 57.5h3M83 57.5h1M75 58.5h5M83 58.5h2M75 59.5h6M84 59.5h2M75 60.5h7M85 60.5h1M74 61.5h9M84 61.5h2M74 62.5h11M74 63.5h2M77 63.5h7"/></svg><rect x="1360" y="900" width="516" height="516" fill="#000"/><svg x="1362" y="902" width="512" height="512" viewBox="0 0 256 256"><rect width="256" height="256" fill="#0a1820"/><rect x="119.5" y="95.5" width="17" height="9" fill="rgba(110,255,60,.36)" stroke="#74ef45" stroke-width="1"/><path stroke="#e2f6d3" d="M100 2.5h1M99 3.5h3M100 4.5h1M28 26.5h1M171 58.5h1M36 66.5h1M35 67.5h3M36 68.5h1M116 74.5h1M123 90.5h1M131 90.5h1M127 92.5h1M124 95.5h3M128 95.5h3M125 96.5h2M128 96.5h2M12 98.5h1M125 98.5h5M126 99.5h3M133 99.5h1M126 100.5h3M132 100.5h1M126 101.5h3M123 102.5h3M127 102.5h1M129 102.5h3M84 146.5h1M164 154.5h1M28 186.5h1M27 187.5h3M28 188.5h1M68 218.5h1M116 218.5h1M115 219.5h3M116 220.5h1M4 234.5h1"/><path stroke="#93bd7b" d="M100 1.5h1M99 2.5h1M101 2.5h1M98 3.5h1M102 3.5h1M51 4.5h1M99 4.5h1M101 4.5h1M100 5.5h1M28 24.5h1M28 25.5h1M26 26.5h2M29 26.5h2M28 27.5h1M28 28.5h1M155 28.5h1M75 52.5h1M171 56.5h1M171 57.5h1M169 58.5h2M172 58.5h2M171 59.5h1M171 60.5h1M36 65.5h1M35 66.5h1M37 66.5h1M34 67.5h1M38 67.5h1M35 68.5h1M37 68.5h1M36 69.5h1M116 72.5h1M116 73.5h1M114 74.5h2M117 74.5h2M116 75.5h1M116 76.5h1M124 90.5h1M130 90.5h1M123 91.5h1M125 91.5h5M131 91.5h1M124 92.5h2M129 92.5h2M124 93.5h7M124 94.5h2M129 94.5h2M12 96.5h1M127 96.5h1M12 97.5h1M10 98.5h2M13 98.5h2M12 99.5h1M124 99.5h1M130 99.5h1M12 100.5h1M51 100.5h1M124 100.5h1M130 100.5h1M124 101.5h1M130 101.5h1M123 124.5h1M179 132.5h1M84 144.5h1M84 145.5h1M82 146.5h2M85 146.5h2M84 147.5h1M84 148.5h1M164 152.5h1M164 153.5h1M162 154.5h2M165 154.5h2M164 155.5h1M164 156.5h1M139 180.5h1M28 185.5h1M27 186.5h1M29 186.5h1M26 187.5h1M30 187.5h1M27 188.5h1M29 188.5h1M59 188.5h1M28 189.5h1M68 216.5h1M68 217.5h1M116 217.5h1M66 218.5h2M69 218.5h2M115 218.5h1M117 218.5h1M68 219.5h1M114 219.5h1M118 219.5h1M68 220.5h1M115 220.5h1M117 220.5h1M116 221.5h1M4 232.5h1M4 233.5h1M2 234.5h2M5 234.5h2M4 235.5h1M4 236.5h1M147 236.5h1M107 244.5h1"/><path stroke="#3b6a55" d="M100 0.5h1M54 1.5h1M51 3.5h1M97 3.5h1M103 3.5h1M50 4.5h1M52 4.5h1M51 5.5h1M100 6.5h1M97 7.5h1M25 24.5h1M158 25.5h1M155 27.5h1M154 28.5h1M156 28.5h1M155 29.5h1M25 30.5h1M78 49.5h1M75 51.5h1M74 52.5h1M76 52.5h1M75 53.5h1M168 56.5h1M168 62.5h1M36 64.5h1M33 67.5h1M39 67.5h1M36 70.5h1M33 71.5h1M113 72.5h1M113 78.5h1M9 96.5h1M54 97.5h1M51 99.5h1M50 100.5h1M52 100.5h1M51 101.5h1M9 102.5h1M126 121.5h1M123 123.5h1M122 124.5h1M124 124.5h1M123 125.5h1M182 129.5h1M179 131.5h1M178 132.5h1M180 132.5h1M179 133.5h1M81 144.5h1M81 150.5h1M161 152.5h1M161 158.5h1M142 177.5h1M139 179.5h1M138 180.5h1M140 180.5h1M139 181.5h1M28 184.5h1M62 185.5h1M25 187.5h1M31 187.5h1M59 187.5h1M58 188.5h1M60 188.5h1M59 189.5h1M28 190.5h1M25 191.5h1M65 216.5h1M116 216.5h1M113 219.5h1M119 219.5h1M65 222.5h1M116 222.5h1M113 223.5h1M1 232.5h1M150 233.5h1M147 235.5h1M146 236.5h1M148 236.5h1M147 237.5h1M1 238.5h1M110 241.5h1M107 243.5h1M106 244.5h1M108 244.5h1M107 245.5h1"/><path stroke="#e2f6d3" d="M123 90.5h1M131 90.5h1M127 92.5h1M124 95.5h3M128 95.5h3M125 96.5h2M128 96.5h2M125 98.5h5M126 99.5h3M133 99.5h1M126 100.5h3M132 100.5h1M126 101.5h3M123 102.5h3M127 102.5h1M129 102.5h3"/><path stroke="#93bd7b" d="M124 90.5h1M130 90.5h1M123 91.5h1M125 91.5h5M131 91.5h1M124 92.5h2M129 92.5h2M124 93.5h7M124 94.5h2M129 94.5h2M127 96.5h1M124 99.5h1M130 99.5h1M124 100.5h1M130 100.5h1M124 101.5h1M130 101.5h1"/><path stroke="#0a1820" d="M124 91.5h1M130 91.5h1M126 92.5h1M128 92.5h1M126 94.5h3M127 95.5h1M124 96.5h1M130 96.5h1M125 97.5h5M123 98.5h2M130 98.5h1M134 98.5h1M123 99.5h1M125 99.5h1M129 99.5h1M131 99.5h2M134 99.5h1M123 100.5h1M125 100.5h1M129 100.5h1M131 100.5h1M133 100.5h1M123 101.5h1M125 101.5h1M129 101.5h1M131 101.5h1M122 102.5h1M126 102.5h1M128 102.5h1M132 102.5h1M122 103.5h11"/></svg><rect x="502" y="834" width="524" height="524" fill="#4aa3ea"/><rect x="506" y="838" width="516" height="516" fill="#000"/><svg x="508" y="840" width="512" height="512" viewBox="0 0 256 256"><rect width="256" height="256" fill="#e2f6d3"/><path stroke="#93bd7b" d="M0 0.5h1M3 0.5h2M8 0.5h1M12 0.5h2M15 0.5h1M30 0.5h1M32 0.5h1M35 0.5h2M40 0.5h1M44 0.5h2M47 0.5h1M62 0.5h1M64 0.5h1M67 0.5h2M72 0.5h1M76 0.5h2M79 0.5h1M94 0.5h1M96 0.5h1M99 0.5h2M104 0.5h1M108 0.5h2M111 0.5h1M126 0.5h1M128 0.5h1M131 0.5h2M136 0.5h1M140 0.5h2M143 0.5h1M4 1.5h2M11 1.5h1M13 1.5h1M20 1.5h1M29 1.5h2M36 1.5h2M43 1.5h1M45 1.5h1M52 1.5h1M61 1.5h2M68 1.5h2M75 1.5h1M77 1.5h1M84 1.5h1M93 1.5h2M100 1.5h2M107 1.5h1M109 1.5h1M116 1.5h1M125 1.5h2M132 1.5h2M139 1.5h1M141 1.5h1M144 1.5h1M148 1.5h1M157 1.5h1M173 1.5h1M189 1.5h1M205 1.5h1M221 1.5h1M237 1.5h1M253 1.5h1M3 2.5h3M8 2.5h1M15 2.5h1M17 2.5h1M19 2.5h1M26 2.5h1M29 2.5h2M35 2.5h3M40 2.5h1M47 2.5h1M49 2.5h1M51 2.5h1M58 2.5h1M61 2.5h2M67 2.5h3M72 2.5h1M79 2.5h1M81 2.5h1M83 2.5h1M90 2.5h1M93 2.5h2M99 2.5h3M104 2.5h1M111 2.5h1M113 2.5h1M115 2.5h1M122 2.5h1M125 2.5h2M131 2.5h3M136 2.5h1M143 2.5h1M147 2.5h2M150 2.5h1M156 2.5h1M158 2.5h1M172 2.5h1M174 2.5h1M188 2.5h1M190 2.5h1M204 2.5h1M206 2.5h1M220 2.5h1M222 2.5h1M236 2.5h1M238 2.5h1M252 2.5h1M254 2.5h1M4 3.5h1M8 3.5h2M13 3.5h1M26 3.5h2M29 3.5h3M36 3.5h1M40 3.5h2M45 3.5h1M58 3.5h2M61 3.5h3M68 3.5h1M72 3.5h2M77 3.5h1M90 3.5h2M93 3.5h3M100 3.5h1M104 3.5h2M109 3.5h1M122 3.5h2M125 3.5h3M132 3.5h1M136 3.5h2M141 3.5h1M163 3.5h1M179 3.5h1M195 3.5h1M211 3.5h1M227 3.5h1M243 3.5h1M3 4.5h1M5 4.5h1M8 4.5h1M16 4.5h1M35 4.5h1M37 4.5h1M40 4.5h1M48 4.5h1M67 4.5h1M69 4.5h1M72 4.5h1M80 4.5h1M99 4.5h1M101 4.5h1M104 4.5h1M112 4.5h1M131 4.5h1M133 4.5h1M136 4.5h1M146 4.5h1M162 4.5h1M164 4.5h1M178 4.5h1M180 4.5h1M194 4.5h1M196 4.5h1M210 4.5h1M212 4.5h1M226 4.5h1M228 4.5h1M242 4.5h1M244 4.5h1M1 5.5h6M8 5.5h1M27 5.5h3M31 5.5h1M33 5.5h6M40 5.5h1M59 5.5h3M63 5.5h1M65 5.5h6M72 5.5h1M91 5.5h3M95 5.5h1M97 5.5h6M104 5.5h1M123 5.5h3M127 5.5h1M129 5.5h6M136 5.5h1M154 5.5h1M170 5.5h1M186 5.5h1M202 5.5h1M218 5.5h1M234 5.5h1M250 5.5h1M0 6.5h1M2 6.5h1M4 6.5h1M7 6.5h2M30 6.5h1M32 6.5h1M34 6.5h1M36 6.5h1M39 6.5h2M62 6.5h1M64 6.5h1M66 6.5h1M68 6.5h1M71 6.5h2M94 6.5h1M96 6.5h1M98 6.5h1M100 6.5h1M103 6.5h2M126 6.5h1M128 6.5h1M130 6.5h1M132 6.5h1M135 6.5h2M147 6.5h1M153 6.5h1M155 6.5h1M169 6.5h1M171 6.5h1M185 6.5h1M187 6.5h1M201 6.5h1M203 6.5h1M217 6.5h1M219 6.5h1M233 6.5h1M235 6.5h1M249 6.5h1M251 6.5h1M1 7.5h2M6 7.5h2M10 7.5h1M13 7.5h2M21 7.5h1M27 7.5h1M29 7.5h2M33 7.5h2M38 7.5h2M42 7.5h1M45 7.5h2M53 7.5h1M59 7.5h1M61 7.5h2M65 7.5h2M70 7.5h2M74 7.5h1M77 7.5h2M85 7.5h1M91 7.5h1M93 7.5h2M97 7.5h2M102 7.5h2M106 7.5h1M109 7.5h2M117 7.5h1M123 7.5h1M125 7.5h2M129 7.5h2M134 7.5h2M138 7.5h1M141 7.5h2M1 8.5h2M7 8.5h1M13 8.5h2M22 8.5h1M27 8.5h4M33 8.5h2M39 8.5h1M45 8.5h2M54 8.5h1M59 8.5h4M65 8.5h2M71 8.5h1M77 8.5h2M86 8.5h1M91 8.5h4M97 8.5h2M103 8.5h1M109 8.5h2M118 8.5h1M123 8.5h4M129 8.5h2M135 8.5h1M141 8.5h2M144 8.5h1M146 8.5h2M151 8.5h1M1 9.5h2M7 9.5h1M9 9.5h2M20 9.5h2M28 9.5h1M33 9.5h2M39 9.5h1M41 9.5h2M52 9.5h2M60 9.5h1M65 9.5h2M71 9.5h1M73 9.5h2M84 9.5h2M92 9.5h1M97 9.5h2M103 9.5h1M105 9.5h2M116 9.5h2M124 9.5h1M129 9.5h2M135 9.5h1M137 9.5h2M165 9.5h1M181 9.5h1M197 9.5h1M213 9.5h1M218 9.5h1M229 9.5h1M245 9.5h1M1 10.5h3M5 10.5h2M9 10.5h1M11 10.5h1M14 10.5h1M33 10.5h3M37 10.5h2M41 10.5h1M43 10.5h1M46 10.5h1M65 10.5h3M69 10.5h2M73 10.5h1M75 10.5h1M78 10.5h1M97 10.5h3M101 10.5h2M105 10.5h1M107 10.5h1M110 10.5h1M129 10.5h3M133 10.5h2M137 10.5h1M139 10.5h1M142 10.5h1M164 10.5h1M166 10.5h1M180 10.5h1M182 10.5h1M196 10.5h1M198 10.5h1M212 10.5h1M214 10.5h1M217 10.5h1M219 10.5h1M228 10.5h1M230 10.5h1M244 10.5h1M246 10.5h1M4 11.5h2M8 11.5h1M10 11.5h3M36 11.5h2M40 11.5h1M42 11.5h3M68 11.5h2M72 11.5h1M74 11.5h3M100 11.5h2M104 11.5h1M106 11.5h3M132 11.5h2M136 11.5h1M138 11.5h3M155 11.5h1M171 11.5h1M187 11.5h1M203 11.5h1M218 11.5h1M235 11.5h1M251 11.5h1M0 12.5h2M4 12.5h1M7 12.5h3M12 12.5h1M30 12.5h4M36 12.5h1M39 12.5h3M44 12.5h1M62 12.5h4M68 12.5h1M71 12.5h3M76 12.5h1M94 12.5h4M100 12.5h1M103 12.5h3M108 12.5h1M126 12.5h4M132 12.5h1M135 12.5h3M140 12.5h1M147 12.5h2M154 12.5h1M156 12.5h1M170 12.5h1M172 12.5h1M186 12.5h1M188 12.5h1M202 12.5h1M204 12.5h1M234 12.5h1M236 12.5h1M250 12.5h1M252 12.5h1M1 13.5h1M5 13.5h3M11 13.5h1M13 13.5h2M23 13.5h2M30 13.5h2M33 13.5h1M37 13.5h3M43 13.5h1M45 13.5h2M55 13.5h2M62 13.5h2M65 13.5h1M69 13.5h3M75 13.5h1M77 13.5h2M87 13.5h2M94 13.5h2M97 13.5h1M101 13.5h3M107 13.5h1M109 13.5h2M119 13.5h2M126 13.5h2M129 13.5h1M133 13.5h3M139 13.5h1M141 13.5h2M145 13.5h1M162 13.5h1M178 13.5h1M194 13.5h1M210 13.5h1M216 13.5h1M218 13.5h1M220 13.5h1M226 13.5h1M242 13.5h1M2 14.5h2M6 14.5h1M12 14.5h3M22 14.5h3M28 14.5h3M34 14.5h2M38 14.5h1M44 14.5h3M54 14.5h3M60 14.5h3M66 14.5h2M70 14.5h1M76 14.5h3M86 14.5h3M92 14.5h3M98 14.5h2M102 14.5h1M108 14.5h3M118 14.5h3M124 14.5h3M130 14.5h2M134 14.5h1M140 14.5h3M161 14.5h1M163 14.5h1M177 14.5h1M179 14.5h1M193 14.5h1M195 14.5h1M209 14.5h1M211 14.5h1M217 14.5h3M225 14.5h1M227 14.5h1M241 14.5h1M243 14.5h1M1 15.5h6M11 15.5h1M14 15.5h1M22 15.5h3M28 15.5h2M33 15.5h6M43 15.5h1M46 15.5h1M54 15.5h3M60 15.5h2M65 15.5h6M75 15.5h1M78 15.5h1M86 15.5h3M92 15.5h2M97 15.5h6M107 15.5h1M110 15.5h1M118 15.5h3M124 15.5h2M129 15.5h6M139 15.5h1M142 15.5h1M1 16.5h2M5 16.5h1M23 16.5h1M33 16.5h2M37 16.5h1M55 16.5h1M65 16.5h2M69 16.5h1M87 16.5h1M97 16.5h2M101 16.5h1M119 16.5h1M129 16.5h2M133 16.5h1M144 16.5h2M1 17.5h2M5 17.5h3M10 17.5h2M30 17.5h2M33 17.5h2M37 17.5h3M42 17.5h2M62 17.5h2M65 17.5h2M69 17.5h3M74 17.5h2M94 17.5h2M97 17.5h2M101 17.5h3M106 17.5h2M126 17.5h2M129 17.5h2M133 17.5h3M138 17.5h2M145 17.5h2M157 17.5h1M186 17.5h1M205 17.5h1M221 17.5h1M237 17.5h1M253 17.5h1M0 18.5h1M6 18.5h6M30 18.5h3M38 18.5h6M62 18.5h3M70 18.5h6M94 18.5h3M102 18.5h6M126 18.5h3M134 18.5h6M148 18.5h2M156 18.5h1M158 18.5h1M185 18.5h1M187 18.5h1M204 18.5h1M206 18.5h1M220 18.5h1M222 18.5h1M236 18.5h1M238 18.5h1M252 18.5h1M254 18.5h1M5 19.5h2M9 19.5h2M37 19.5h2M41 19.5h2M69 19.5h2M73 19.5h2M101 19.5h2M105 19.5h2M133 19.5h2M137 19.5h2M179 19.5h1M186 19.5h1M195 19.5h1M211 19.5h1M227 19.5h1M243 19.5h1M150 20.5h1M178 20.5h1M180 20.5h1M194 20.5h1M196 20.5h1M210 20.5h1M212 20.5h1M226 20.5h1M228 20.5h1M242 20.5h1M244 20.5h1M4 21.5h2M36 21.5h2M68 21.5h2M100 21.5h2M132 21.5h2M147 21.5h1M154 21.5h1M184 21.5h1M186 21.5h1M188 21.5h1M202 21.5h1M218 21.5h1M234 21.5h1M250 21.5h1M153 22.5h1M155 22.5h1M185 22.5h3M201 22.5h1M203 22.5h1M217 22.5h1M219 22.5h1M233 22.5h1M235 22.5h1M249 22.5h1M251 22.5h1M148 24.5h1M1 25.5h1M3 25.5h1M13 25.5h1M28 25.5h1M30 25.5h2M33 25.5h1M35 25.5h1M45 25.5h1M60 25.5h1M62 25.5h2M65 25.5h1M67 25.5h1M77 25.5h1M92 25.5h1M94 25.5h2M97 25.5h1M99 25.5h1M109 25.5h1M124 25.5h1M126 25.5h2M129 25.5h1M131 25.5h1M141 25.5h1M165 25.5h3M181 25.5h1M197 25.5h1M213 25.5h1M229 25.5h1M245 25.5h1M0 26.5h1M2 26.5h2M12 26.5h1M14 26.5h1M29 26.5h2M32 26.5h1M34 26.5h2M44 26.5h1M46 26.5h1M61 26.5h2M64 26.5h1M66 26.5h2M76 26.5h1M78 26.5h1M93 26.5h2M96 26.5h1M98 26.5h2M108 26.5h1M110 26.5h1M125 26.5h2M128 26.5h1M130 26.5h2M140 26.5h1M142 26.5h1M144 26.5h1M150 26.5h1M163 26.5h7M180 26.5h1M182 26.5h1M196 26.5h1M198 26.5h1M212 26.5h1M214 26.5h1M228 26.5h1M230 26.5h1M244 26.5h1M246 26.5h1M0 27.5h1M2 27.5h2M19 27.5h1M27 27.5h1M29 27.5h2M32 27.5h1M34 27.5h2M51 27.5h1M59 27.5h1M61 27.5h2M64 27.5h1M66 27.5h2M83 27.5h1M91 27.5h1M93 27.5h2M96 27.5h1M98 27.5h2M115 27.5h1M123 27.5h1M125 27.5h2M128 27.5h1M130 27.5h2M163 27.5h3M167 27.5h4M187 27.5h1M203 27.5h1M219 27.5h1M235 27.5h1M251 27.5h1M1 28.5h2M4 28.5h1M18 28.5h1M20 28.5h1M26 28.5h1M28 28.5h2M31 28.5h1M33 28.5h2M36 28.5h1M50 28.5h1M52 28.5h1M58 28.5h1M60 28.5h2M63 28.5h1M65 28.5h2M68 28.5h1M82 28.5h1M84 28.5h1M90 28.5h1M92 28.5h2M95 28.5h1M97 28.5h2M100 28.5h1M114 28.5h1M116 28.5h1M122 28.5h1M124 28.5h2M127 28.5h1M129 28.5h2M132 28.5h1M145 28.5h1M160 28.5h1M167 28.5h6M186 28.5h1M188 28.5h1M202 28.5h1M204 28.5h1M218 28.5h1M220 28.5h1M234 28.5h1M236 28.5h1M250 28.5h1M252 28.5h1M1 29.5h2M4 29.5h1M10 29.5h1M26 29.5h1M28 29.5h2M31 29.5h1M33 29.5h2M36 29.5h1M42 29.5h1M58 29.5h1M60 29.5h2M63 29.5h1M65 29.5h2M68 29.5h1M74 29.5h1M90 29.5h1M92 29.5h2M95 29.5h1M97 29.5h2M100 29.5h1M106 29.5h1M122 29.5h1M124 29.5h2M127 29.5h1M129 29.5h2M132 29.5h1M138 29.5h1M145 29.5h1M147 29.5h2M161 29.5h1M170 29.5h2M174 29.5h2M178 29.5h1M194 29.5h1M210 29.5h1M226 29.5h1M242 29.5h1M3 30.5h1M5 30.5h2M9 30.5h1M11 30.5h1M28 30.5h1M30 30.5h1M35 30.5h1M37 30.5h2M41 30.5h1M43 30.5h1M60 30.5h1M62 30.5h1M67 30.5h1M69 30.5h2M73 30.5h1M75 30.5h1M92 30.5h1M94 30.5h1M99 30.5h1M101 30.5h2M105 30.5h1M107 30.5h1M124 30.5h1M126 30.5h1M131 30.5h1M133 30.5h2M137 30.5h1M139 30.5h1M145 30.5h1M147 30.5h2M172 30.5h2M177 30.5h1M179 30.5h1M193 30.5h1M195 30.5h1M209 30.5h1M211 30.5h1M225 30.5h1M227 30.5h1M241 30.5h1M243 30.5h1M0 31.5h2M3 31.5h1M5 31.5h2M25 31.5h1M27 31.5h2M32 31.5h2M35 31.5h1M37 31.5h2M57 31.5h1M59 31.5h2M64 31.5h2M67 31.5h1M69 31.5h2M89 31.5h1M91 31.5h2M96 31.5h2M99 31.5h1M101 31.5h2M121 31.5h1M123 31.5h2M128 31.5h2M131 31.5h1M133 31.5h2M169 31.5h3M0 32.5h1M3 32.5h2M4 33.5h2M21 33.5h1M37 33.5h1M53 33.5h1M133 33.5h1M148 33.5h1M153 33.5h1M202 33.5h1M221 33.5h1M237 33.5h1M253 33.5h1M3 34.5h3M8 34.5h1M20 34.5h1M22 34.5h1M36 34.5h1M38 34.5h1M52 34.5h1M54 34.5h1M132 34.5h1M134 34.5h1M144 34.5h1M148 34.5h2M151 34.5h3M201 34.5h1M203 34.5h1M220 34.5h1M222 34.5h1M236 34.5h1M238 34.5h1M252 34.5h1M254 34.5h1M4 35.5h1M8 35.5h2M27 35.5h1M43 35.5h1M59 35.5h1M123 35.5h1M139 35.5h1M163 35.5h1M202 35.5h1M227 35.5h1M243 35.5h1M3 36.5h1M5 36.5h1M8 36.5h1M26 36.5h1M28 36.5h1M42 36.5h1M44 36.5h1M58 36.5h1M60 36.5h1M122 36.5h1M124 36.5h1M138 36.5h1M140 36.5h1M148 36.5h1M153 36.5h1M162 36.5h1M164 36.5h1M226 36.5h1M228 36.5h1M242 36.5h1M244 36.5h1M1 37.5h6M8 37.5h1M18 37.5h1M34 37.5h1M50 37.5h1M73 37.5h1M78 37.5h1M130 37.5h1M200 37.5h1M202 37.5h1M204 37.5h1M218 37.5h1M234 37.5h1M250 37.5h1M0 38.5h1M2 38.5h1M4 38.5h1M7 38.5h2M17 38.5h1M19 38.5h1M33 38.5h1M35 38.5h1M49 38.5h1M51 38.5h1M73 38.5h6M129 38.5h1M131 38.5h1M201 38.5h3M217 38.5h1M219 38.5h1M233 38.5h1M235 38.5h1M249 38.5h1M251 38.5h1M1 39.5h2M6 39.5h2M10 39.5h1M13 39.5h2M153 39.5h2M1 40.5h2M7 40.5h1M13 40.5h2M144 40.5h1M1 41.5h2M7 41.5h1M9 41.5h2M29 41.5h1M45 41.5h1M58 41.5h1M125 41.5h1M141 41.5h1M144 41.5h2M148 41.5h1M229 41.5h1M245 41.5h1M1 42.5h3M5 42.5h2M9 42.5h1M11 42.5h1M14 42.5h1M28 42.5h1M30 42.5h1M44 42.5h1M46 42.5h1M57 42.5h1M59 42.5h1M124 42.5h1M126 42.5h1M140 42.5h1M142 42.5h1M146 42.5h1M152 42.5h1M228 42.5h1M230 42.5h1M244 42.5h1M246 42.5h1M4 43.5h2M8 43.5h1M10 43.5h3M19 43.5h1M35 43.5h1M51 43.5h1M58 43.5h1M131 43.5h1M152 43.5h1M219 43.5h1M235 43.5h1M251 43.5h1M0 44.5h2M4 44.5h1M7 44.5h3M12 44.5h1M18 44.5h1M20 44.5h1M34 44.5h1M36 44.5h1M50 44.5h1M52 44.5h1M130 44.5h1M132 44.5h1M145 44.5h3M160 44.5h2M218 44.5h1M220 44.5h1M234 44.5h1M236 44.5h1M250 44.5h1M252 44.5h1M1 45.5h1M5 45.5h3M11 45.5h1M13 45.5h2M26 45.5h1M42 45.5h1M56 45.5h1M58 45.5h1M60 45.5h1M122 45.5h1M138 45.5h1M144 45.5h1M146 45.5h1M148 45.5h2M161 45.5h1M226 45.5h1M242 45.5h1M2 46.5h2M6 46.5h1M12 46.5h3M25 46.5h1M27 46.5h1M41 46.5h1M43 46.5h1M57 46.5h3M121 46.5h1M123 46.5h1M137 46.5h1M139 46.5h1M147 46.5h3M225 46.5h1M227 46.5h1M241 46.5h1M243 46.5h1M1 47.5h6M11 47.5h1M14 47.5h1M66 47.5h2M74 47.5h2M82 47.5h2M90 47.5h2M98 47.5h2M106 47.5h2M1 48.5h2M5 48.5h1M65 48.5h1M68 48.5h6M76 48.5h6M84 48.5h6M92 48.5h6M100 48.5h6M108 48.5h3M145 48.5h1M149 48.5h1M153 48.5h2M158 48.5h1M162 48.5h1M1 49.5h2M5 49.5h3M10 49.5h2M21 49.5h1M37 49.5h1M53 49.5h1M65 49.5h3M69 49.5h1M71 49.5h1M73 49.5h3M77 49.5h1M79 49.5h1M81 49.5h3M85 49.5h1M87 49.5h1M89 49.5h3M93 49.5h1M95 49.5h1M97 49.5h3M101 49.5h1M103 49.5h1M105 49.5h3M109 49.5h1M117 49.5h1M133 49.5h1M146 49.5h1M153 49.5h2M157 49.5h2M160 49.5h1M166 49.5h1M0 50.5h1M6 50.5h6M20 50.5h1M22 50.5h1M36 50.5h1M38 50.5h1M52 50.5h1M54 50.5h1M65 50.5h46M116 50.5h1M118 50.5h1M132 50.5h1M134 50.5h1M152 50.5h1M157 50.5h1M161 50.5h1M5 51.5h2M9 51.5h2M27 51.5h1M43 51.5h1M59 51.5h1M65 51.5h46M123 51.5h1M139 51.5h1M171 51.5h1M179 51.5h1M187 51.5h1M195 51.5h1M203 51.5h1M211 51.5h1M219 51.5h1M227 51.5h1M235 51.5h1M243 51.5h1M251 51.5h1M26 52.5h1M28 52.5h1M42 52.5h1M44 52.5h1M58 52.5h1M60 52.5h1M65 52.5h46M122 52.5h1M124 52.5h1M138 52.5h1M140 52.5h1M148 52.5h2M4 53.5h2M18 53.5h1M34 53.5h1M50 53.5h1M65 53.5h6M73 53.5h6M81 53.5h6M89 53.5h6M97 53.5h6M105 53.5h6M114 53.5h1M130 53.5h1M144 53.5h1M156 53.5h1M161 53.5h1M163 53.5h1M17 54.5h1M19 54.5h1M33 54.5h1M35 54.5h1M49 54.5h1M51 54.5h1M113 54.5h1M115 54.5h1M129 54.5h1M131 54.5h1M152 54.5h1M171 55.5h2M179 55.5h2M187 55.5h2M195 55.5h2M203 55.5h2M211 55.5h2M219 55.5h2M227 55.5h2M235 55.5h2M243 55.5h2M251 55.5h2M65 56.5h3M72 56.5h1M93 56.5h3M106 56.5h1M108 56.5h3M161 56.5h1M197 56.5h2M206 56.5h1M213 56.5h1M1 57.5h1M3 57.5h1M13 57.5h1M65 57.5h1M72 57.5h1M74 57.5h5M93 57.5h3M97 57.5h5M106 57.5h1M108 57.5h1M125 57.5h1M141 57.5h1M157 57.5h1M162 57.5h4M167 57.5h1M185 57.5h1M187 57.5h1M190 57.5h1M193 57.5h1M203 57.5h1M209 57.5h1M211 57.5h1M0 58.5h1M2 58.5h2M12 58.5h1M14 58.5h1M65 58.5h2M72 58.5h1M74 58.5h1M77 58.5h2M94 58.5h2M97 58.5h1M100 58.5h2M106 58.5h1M108 58.5h2M124 58.5h1M126 58.5h1M140 58.5h1M142 58.5h1M156 58.5h1M158 58.5h1M164 58.5h1M169 58.5h1M174 58.5h1M177 58.5h1M182 58.5h1M186 58.5h1M193 58.5h1M203 58.5h1M212 58.5h1M217 58.5h1M222 58.5h1M225 58.5h1M230 58.5h1M233 58.5h1M238 58.5h1M241 58.5h1M246 58.5h1M249 58.5h1M254 58.5h1M0 59.5h1M2 59.5h2M69 59.5h2M74 59.5h2M77 59.5h2M95 59.5h1M97 59.5h2M100 59.5h2M105 59.5h2M115 59.5h1M131 59.5h1M147 59.5h1M168 59.5h1M175 59.5h2M183 59.5h1M188 59.5h1M203 59.5h2M210 59.5h3M216 59.5h1M223 59.5h2M231 59.5h2M239 59.5h2M247 59.5h2M255 59.5h1M1 60.5h2M4 60.5h1M65 60.5h6M74 60.5h5M97 60.5h5M105 60.5h6M114 60.5h1M116 60.5h1M130 60.5h1M132 60.5h1M146 60.5h1M148 60.5h1M186 60.5h1M190 60.5h1M198 60.5h1M1 61.5h2M4 61.5h1M10 61.5h1M65 61.5h1M68 61.5h3M107 61.5h4M122 61.5h1M138 61.5h1M154 61.5h1M160 61.5h1M162 61.5h1M186 61.5h1M197 61.5h2M210 61.5h1M214 61.5h1M3 62.5h1M5 62.5h2M9 62.5h1M11 62.5h1M65 62.5h2M68 62.5h3M74 62.5h6M96 62.5h6M105 62.5h1M107 62.5h4M121 62.5h1M123 62.5h1M137 62.5h1M139 62.5h1M153 62.5h1M155 62.5h1M160 62.5h1M164 62.5h1M169 62.5h2M173 62.5h2M177 62.5h2M181 62.5h2M188 62.5h1M196 62.5h1M199 62.5h1M204 62.5h1M208 62.5h1M214 62.5h1M217 62.5h2M221 62.5h2M225 62.5h2M229 62.5h2M233 62.5h2M237 62.5h2M241 62.5h2M245 62.5h2M249 62.5h2M253 62.5h2M0 63.5h2M3 63.5h1M5 63.5h2M65 63.5h7M104 63.5h7M170 63.5h4M178 63.5h4M184 63.5h1M187 63.5h1M189 63.5h1M192 63.5h1M195 63.5h1M197 63.5h5M205 63.5h4M211 63.5h1M213 63.5h3M218 63.5h4M226 63.5h4M234 63.5h4M242 63.5h4M250 63.5h4M0 64.5h1M3 64.5h2M166 64.5h1M254 64.5h1M4 65.5h2M90 65.5h2M117 65.5h1M133 65.5h1M149 65.5h1M163 65.5h1M165 65.5h1M171 65.5h1M182 65.5h1M187 65.5h1M214 65.5h1M219 65.5h1M230 65.5h1M235 65.5h1M253 65.5h2M3 66.5h3M8 66.5h1M65 66.5h2M68 66.5h2M71 66.5h2M74 66.5h2M77 66.5h2M96 66.5h1M98 66.5h2M101 66.5h2M104 66.5h2M107 66.5h2M110 66.5h1M116 66.5h1M118 66.5h1M132 66.5h1M134 66.5h1M148 66.5h1M150 66.5h1M162 66.5h1M250 66.5h1M253 66.5h2M4 67.5h1M8 67.5h2M65 67.5h2M68 67.5h2M71 67.5h2M74 67.5h2M77 67.5h2M91 67.5h1M96 67.5h1M98 67.5h2M101 67.5h2M104 67.5h2M107 67.5h2M110 67.5h1M123 67.5h1M139 67.5h1M155 67.5h1M163 67.5h1M165 67.5h1M174 67.5h1M177 67.5h1M190 67.5h1M209 67.5h1M222 67.5h1M225 67.5h1M238 67.5h1M250 67.5h2M253 67.5h3M3 68.5h1M5 68.5h1M8 68.5h1M68 68.5h2M74 68.5h2M91 68.5h1M98 68.5h2M104 68.5h2M110 68.5h1M122 68.5h1M124 68.5h1M138 68.5h1M140 68.5h1M154 68.5h1M156 68.5h1M1 69.5h6M8 69.5h1M65 69.5h2M68 69.5h2M71 69.5h2M74 69.5h2M77 69.5h2M96 69.5h1M98 69.5h2M101 69.5h2M104 69.5h2M107 69.5h2M110 69.5h1M114 69.5h1M130 69.5h1M146 69.5h1M165 69.5h1M172 69.5h1M183 69.5h1M188 69.5h1M193 69.5h2M196 69.5h2M199 69.5h2M202 69.5h2M205 69.5h2M215 69.5h1M220 69.5h1M231 69.5h1M236 69.5h1M251 69.5h3M255 69.5h1M0 70.5h1M2 70.5h1M4 70.5h1M7 70.5h2M65 70.5h2M68 70.5h2M71 70.5h2M74 70.5h2M77 70.5h2M96 70.5h1M98 70.5h2M101 70.5h2M104 70.5h2M107 70.5h2M110 70.5h1M113 70.5h1M115 70.5h1M129 70.5h1M131 70.5h1M145 70.5h1M147 70.5h1M193 70.5h14M254 70.5h1M1 71.5h2M6 71.5h2M10 71.5h1M13 71.5h2M170 71.5h1M175 71.5h1M178 71.5h1M181 71.5h1M186 71.5h1M191 71.5h1M210 71.5h1M213 71.5h1M218 71.5h1M223 71.5h1M226 71.5h1M229 71.5h1M234 71.5h1M239 71.5h1M245 71.5h1M251 71.5h1M253 71.5h2M1 72.5h2M7 72.5h1M13 72.5h2M246 72.5h1M251 72.5h4M1 73.5h2M7 73.5h1M9 73.5h2M74 73.5h1M93 73.5h1M109 73.5h1M125 73.5h1M141 73.5h1M157 73.5h1M173 73.5h1M189 73.5h1M205 73.5h1M221 73.5h1M237 73.5h1M244 73.5h2M252 73.5h1M1 74.5h3M5 74.5h2M9 74.5h1M11 74.5h1M14 74.5h1M73 74.5h1M75 74.5h1M92 74.5h1M94 74.5h1M108 74.5h1M110 74.5h1M124 74.5h1M126 74.5h1M140 74.5h1M142 74.5h1M156 74.5h1M158 74.5h1M172 74.5h1M174 74.5h1M188 74.5h1M190 74.5h1M204 74.5h1M206 74.5h1M220 74.5h1M222 74.5h1M236 74.5h1M238 74.5h1M4 75.5h2M8 75.5h1M10 75.5h3M67 75.5h1M74 75.5h1M83 75.5h1M99 75.5h1M115 75.5h1M131 75.5h1M147 75.5h1M163 75.5h1M179 75.5h1M195 75.5h1M211 75.5h1M227 75.5h1M0 76.5h2M4 76.5h1M7 76.5h3M12 76.5h1M66 76.5h1M68 76.5h1M82 76.5h1M84 76.5h1M98 76.5h1M100 76.5h1M114 76.5h1M116 76.5h1M130 76.5h1M132 76.5h1M146 76.5h1M148 76.5h1M162 76.5h1M164 76.5h1M178 76.5h1M180 76.5h1M194 76.5h1M196 76.5h1M210 76.5h1M212 76.5h1M226 76.5h1M228 76.5h1M254 76.5h2M1 77.5h1M5 77.5h3M11 77.5h1M13 77.5h2M72 77.5h1M74 77.5h1M76 77.5h1M90 77.5h1M106 77.5h1M122 77.5h1M138 77.5h1M154 77.5h1M170 77.5h1M186 77.5h1M202 77.5h1M218 77.5h1M234 77.5h1M247 77.5h2M254 77.5h2M2 78.5h2M6 78.5h1M12 78.5h3M73 78.5h3M89 78.5h1M91 78.5h1M105 78.5h1M107 78.5h1M121 78.5h1M123 78.5h1M137 78.5h1M139 78.5h1M153 78.5h1M155 78.5h1M169 78.5h1M171 78.5h1M185 78.5h1M187 78.5h1M201 78.5h1M203 78.5h1M217 78.5h1M219 78.5h1M233 78.5h1M235 78.5h1M246 78.5h3M252 78.5h3M1 79.5h6M11 79.5h1M14 79.5h1M246 79.5h3M252 79.5h2M1 80.5h2M5 80.5h1M247 80.5h1M1 81.5h2M5 81.5h3M10 81.5h2M21 81.5h1M37 81.5h1M53 81.5h1M69 81.5h1M85 81.5h1M101 81.5h1M117 81.5h1M133 81.5h1M149 81.5h1M154 81.5h1M165 81.5h1M181 81.5h1M197 81.5h1M213 81.5h1M229 81.5h1M254 81.5h2M0 82.5h1M6 82.5h6M20 82.5h1M22 82.5h1M36 82.5h1M38 82.5h1M52 82.5h1M54 82.5h1M68 82.5h1M70 82.5h1M84 82.5h1M86 82.5h1M100 82.5h1M102 82.5h1M116 82.5h1M118 82.5h1M132 82.5h1M134 82.5h1M148 82.5h1M150 82.5h1M153 82.5h1M155 82.5h1M164 82.5h1M166 82.5h1M180 82.5h1M182 82.5h1M196 82.5h1M198 82.5h1M212 82.5h1M214 82.5h1M228 82.5h1M230 82.5h1M254 82.5h2M5 83.5h2M9 83.5h2M27 83.5h1M43 83.5h1M59 83.5h1M75 83.5h1M91 83.5h1M107 83.5h1M123 83.5h1M139 83.5h1M154 83.5h1M171 83.5h1M187 83.5h1M203 83.5h1M219 83.5h1M235 83.5h1M26 84.5h1M28 84.5h1M42 84.5h1M44 84.5h1M58 84.5h1M60 84.5h1M74 84.5h1M76 84.5h1M90 84.5h1M92 84.5h1M106 84.5h1M108 84.5h1M122 84.5h1M124 84.5h1M138 84.5h1M140 84.5h1M170 84.5h1M172 84.5h1M186 84.5h1M188 84.5h1M202 84.5h1M204 84.5h1M218 84.5h1M220 84.5h1M234 84.5h1M236 84.5h1M4 85.5h2M18 85.5h1M34 85.5h1M50 85.5h1M66 85.5h1M82 85.5h1M98 85.5h1M114 85.5h1M130 85.5h1M146 85.5h1M152 85.5h1M154 85.5h1M156 85.5h1M162 85.5h1M178 85.5h1M194 85.5h1M210 85.5h1M226 85.5h1M17 86.5h1M19 86.5h1M33 86.5h1M35 86.5h1M49 86.5h1M51 86.5h1M65 86.5h1M67 86.5h1M81 86.5h1M83 86.5h1M97 86.5h1M99 86.5h1M113 86.5h1M115 86.5h1M129 86.5h1M131 86.5h1M145 86.5h1M147 86.5h1M153 86.5h3M161 86.5h1M163 86.5h1M177 86.5h1M179 86.5h1M193 86.5h1M195 86.5h1M209 86.5h1M211 86.5h1M225 86.5h1M227 86.5h1M1 89.5h1M3 89.5h1M13 89.5h1M29 89.5h1M34 89.5h1M45 89.5h1M61 89.5h1M77 89.5h1M93 89.5h1M109 89.5h1M125 89.5h1M141 89.5h1M157 89.5h1M173 89.5h1M189 89.5h1M205 89.5h1M221 89.5h1M237 89.5h1M252 89.5h1M254 89.5h2M0 90.5h1M2 90.5h2M12 90.5h1M14 90.5h1M28 90.5h1M30 90.5h1M33 90.5h1M35 90.5h1M44 90.5h1M46 90.5h1M60 90.5h1M62 90.5h1M76 90.5h1M78 90.5h1M92 90.5h1M94 90.5h1M108 90.5h1M110 90.5h1M124 90.5h1M126 90.5h1M140 90.5h1M142 90.5h1M156 90.5h1M158 90.5h1M172 90.5h1M174 90.5h1M188 90.5h1M190 90.5h1M204 90.5h1M206 90.5h1M220 90.5h1M222 90.5h1M236 90.5h1M238 90.5h1M253 90.5h2M0 91.5h1M2 91.5h2M19 91.5h1M34 91.5h1M51 91.5h1M67 91.5h1M83 91.5h1M99 91.5h1M115 91.5h1M131 91.5h1M147 91.5h1M163 91.5h1M179 91.5h1M195 91.5h1M211 91.5h1M227 91.5h1M243 91.5h1M251 91.5h1M253 91.5h2M1 92.5h2M4 92.5h1M18 92.5h1M20 92.5h1M50 92.5h1M52 92.5h1M66 92.5h1M68 92.5h1M82 92.5h1M84 92.5h1M98 92.5h1M100 92.5h1M114 92.5h1M116 92.5h1M130 92.5h1M132 92.5h1M146 92.5h1M148 92.5h1M162 92.5h1M164 92.5h1M178 92.5h1M180 92.5h1M194 92.5h1M196 92.5h1M210 92.5h1M212 92.5h1M226 92.5h1M228 92.5h1M242 92.5h1M244 92.5h1M250 92.5h1M252 92.5h2M255 92.5h1M1 93.5h2M4 93.5h1M10 93.5h1M26 93.5h1M32 93.5h1M34 93.5h1M36 93.5h1M42 93.5h1M58 93.5h1M74 93.5h1M90 93.5h1M106 93.5h1M122 93.5h1M138 93.5h1M154 93.5h1M170 93.5h1M186 93.5h1M202 93.5h1M218 93.5h1M234 93.5h1M250 93.5h1M252 93.5h2M255 93.5h1M3 94.5h1M5 94.5h2M9 94.5h1M11 94.5h1M25 94.5h1M27 94.5h1M33 94.5h3M41 94.5h1M43 94.5h1M57 94.5h1M59 94.5h1M73 94.5h1M75 94.5h1M89 94.5h1M91 94.5h1M105 94.5h1M107 94.5h1M121 94.5h1M123 94.5h1M137 94.5h1M139 94.5h1M153 94.5h1M155 94.5h1M169 94.5h1M171 94.5h1M185 94.5h1M187 94.5h1M201 94.5h1M203 94.5h1M217 94.5h1M219 94.5h1M233 94.5h1M235 94.5h1M252 94.5h1M254 94.5h1M0 95.5h2M3 95.5h1M5 95.5h2M249 95.5h1M251 95.5h2M0 96.5h1M3 96.5h2M46 96.5h1M48 96.5h1M51 96.5h2M254 96.5h1M4 97.5h2M21 97.5h1M45 97.5h2M52 97.5h2M69 97.5h1M85 97.5h1M101 97.5h1M117 97.5h1M133 97.5h1M149 97.5h1M165 97.5h1M181 97.5h1M197 97.5h1M213 97.5h1M229 97.5h1M253 97.5h2M3 98.5h3M8 98.5h1M20 98.5h1M22 98.5h1M42 98.5h1M45 98.5h2M51 98.5h3M56 98.5h1M68 98.5h1M70 98.5h1M84 98.5h1M86 98.5h1M100 98.5h1M102 98.5h1M116 98.5h1M118 98.5h1M132 98.5h1M134 98.5h1M148 98.5h1M150 98.5h1M164 98.5h1M166 98.5h1M180 98.5h1M182 98.5h1M196 98.5h1M198 98.5h1M212 98.5h1M214 98.5h1M228 98.5h1M230 98.5h1M250 98.5h1M253 98.5h2M4 99.5h1M8 99.5h2M27 99.5h1M42 99.5h2M45 99.5h3M52 99.5h1M56 99.5h2M75 99.5h1M91 99.5h1M107 99.5h1M123 99.5h1M139 99.5h1M155 99.5h1M171 99.5h1M187 99.5h1M203 99.5h1M219 99.5h1M235 99.5h1M250 99.5h2M253 99.5h3M3 100.5h1M5 100.5h1M8 100.5h1M26 100.5h1M28 100.5h1M51 100.5h1M53 100.5h1M56 100.5h1M74 100.5h1M76 100.5h1M90 100.5h1M92 100.5h1M106 100.5h1M108 100.5h1M122 100.5h1M124 100.5h1M138 100.5h1M140 100.5h1M154 100.5h1M156 100.5h1M170 100.5h1M172 100.5h1M186 100.5h1M188 100.5h1M202 100.5h1M204 100.5h1M218 100.5h1M220 100.5h1M234 100.5h1M236 100.5h1M1 101.5h6M8 101.5h1M18 101.5h1M43 101.5h3M47 101.5h1M49 101.5h6M56 101.5h1M66 101.5h1M82 101.5h1M98 101.5h1M114 101.5h1M130 101.5h1M146 101.5h1M162 101.5h1M178 101.5h1M194 101.5h1M210 101.5h1M226 101.5h1M251 101.5h3M255 101.5h1M0 102.5h1M2 102.5h1M4 102.5h1M7 102.5h2M17 102.5h1M19 102.5h1M46 102.5h1M48 102.5h1M50 102.5h1M52 102.5h1M55 102.5h2M65 102.5h1M67 102.5h1M81 102.5h1M83 102.5h1M97 102.5h1M99 102.5h1M113 102.5h1M115 102.5h1M129 102.5h1M131 102.5h1M145 102.5h1M147 102.5h1M161 102.5h1M163 102.5h1M177 102.5h1M179 102.5h1M193 102.5h1M195 102.5h1M209 102.5h1M211 102.5h1M225 102.5h1M227 102.5h1M254 102.5h1M1 103.5h2M6 103.5h2M10 103.5h1M13 103.5h2M37 103.5h1M43 103.5h1M45 103.5h2M49 103.5h2M54 103.5h2M58 103.5h1M61 103.5h2M245 103.5h1M251 103.5h1M253 103.5h2M1 104.5h2M7 104.5h1M13 104.5h2M38 104.5h1M43 104.5h4M49 104.5h2M55 104.5h1M61 104.5h2M246 104.5h1M251 104.5h4M1 105.5h2M7 105.5h1M9 105.5h2M26 105.5h1M36 105.5h2M44 105.5h1M49 105.5h2M55 105.5h1M57 105.5h2M77 105.5h1M93 105.5h1M109 105.5h1M125 105.5h1M138 105.5h1M157 105.5h1M173 105.5h1M189 105.5h1M205 105.5h1M221 105.5h1M237 105.5h1M244 105.5h2M252 105.5h1M1 106.5h3M5 106.5h2M9 106.5h1M11 106.5h1M14 106.5h1M25 106.5h1M27 106.5h1M49 106.5h3M53 106.5h2M57 106.5h1M59 106.5h1M62 106.5h1M76 106.5h1M78 106.5h1M92 106.5h1M94 106.5h1M108 106.5h1M110 106.5h1M124 106.5h1M126 106.5h1M137 106.5h1M139 106.5h1M156 106.5h1M158 106.5h1M172 106.5h1M174 106.5h1M188 106.5h1M190 106.5h1M204 106.5h1M206 106.5h1M220 106.5h1M222 106.5h1M236 106.5h1M238 106.5h1M4 107.5h2M8 107.5h1M10 107.5h3M19 107.5h1M26 107.5h1M52 107.5h2M56 107.5h1M58 107.5h3M67 107.5h1M83 107.5h1M99 107.5h1M115 107.5h1M131 107.5h1M138 107.5h1M147 107.5h1M163 107.5h1M179 107.5h1M195 107.5h1M211 107.5h1M227 107.5h1M0 108.5h2M4 108.5h1M7 108.5h3M12 108.5h1M18 108.5h1M20 108.5h1M46 108.5h4M52 108.5h1M55 108.5h3M60 108.5h1M66 108.5h1M68 108.5h1M82 108.5h1M84 108.5h1M98 108.5h1M100 108.5h1M114 108.5h1M116 108.5h1M130 108.5h1M132 108.5h1M146 108.5h1M148 108.5h1M162 108.5h1M164 108.5h1M178 108.5h1M180 108.5h1M194 108.5h1M196 108.5h1M210 108.5h1M212 108.5h1M226 108.5h1M228 108.5h1M254 108.5h2M1 109.5h1M5 109.5h3M11 109.5h1M13 109.5h2M24 109.5h1M26 109.5h1M28 109.5h1M39 109.5h2M46 109.5h2M49 109.5h1M53 109.5h3M59 109.5h1M61 109.5h2M74 109.5h1M90 109.5h1M106 109.5h1M122 109.5h1M136 109.5h1M138 109.5h1M140 109.5h1M154 109.5h1M170 109.5h1M186 109.5h1M202 109.5h1M218 109.5h1M234 109.5h1M247 109.5h2M254 109.5h2M2 110.5h2M6 110.5h1M12 110.5h3M25 110.5h3M38 110.5h3M44 110.5h3M50 110.5h2M54 110.5h1M60 110.5h3M73 110.5h1M75 110.5h1M89 110.5h1M91 110.5h1M105 110.5h1M107 110.5h1M121 110.5h1M123 110.5h1M137 110.5h3M153 110.5h1M155 110.5h1M169 110.5h1M171 110.5h1M185 110.5h1M187 110.5h1M201 110.5h1M203 110.5h1M217 110.5h1M219 110.5h1M233 110.5h1M235 110.5h1M246 110.5h3M252 110.5h3M1 111.5h6M11 111.5h1M14 111.5h1M38 111.5h3M44 111.5h2M49 111.5h6M59 111.5h1M62 111.5h1M246 111.5h3M252 111.5h2M1 112.5h2M5 112.5h1M39 112.5h1M49 112.5h2M53 112.5h1M247 112.5h1M1 113.5h2M5 113.5h3M10 113.5h2M21 113.5h1M46 113.5h2M49 113.5h2M53 113.5h3M58 113.5h2M69 113.5h1M85 113.5h1M101 113.5h1M114 113.5h1M133 113.5h1M149 113.5h1M165 113.5h1M181 113.5h1M197 113.5h1M229 113.5h1M234 113.5h1M254 113.5h2M0 114.5h1M6 114.5h6M20 114.5h1M22 114.5h1M46 114.5h3M54 114.5h6M68 114.5h1M70 114.5h1M84 114.5h1M86 114.5h1M100 114.5h1M102 114.5h1M113 114.5h1M115 114.5h1M132 114.5h1M134 114.5h1M148 114.5h1M150 114.5h1M164 114.5h1M166 114.5h1M180 114.5h1M182 114.5h1M196 114.5h1M198 114.5h1M228 114.5h1M230 114.5h1M233 114.5h1M235 114.5h1M254 114.5h2M5 115.5h2M9 115.5h2M27 115.5h1M53 115.5h2M57 115.5h2M75 115.5h1M91 115.5h1M107 115.5h1M114 115.5h1M123 115.5h1M139 115.5h1M155 115.5h1M171 115.5h1M187 115.5h1M219 115.5h1M234 115.5h1M26 116.5h1M28 116.5h1M74 116.5h1M76 116.5h1M90 116.5h1M92 116.5h1M106 116.5h1M108 116.5h1M122 116.5h1M124 116.5h1M138 116.5h1M140 116.5h1M154 116.5h1M156 116.5h1M170 116.5h1M172 116.5h1M186 116.5h1M188 116.5h1M218 116.5h1M220 116.5h1M4 117.5h2M18 117.5h1M52 117.5h2M66 117.5h1M82 117.5h1M98 117.5h1M112 117.5h1M114 117.5h1M116 117.5h1M130 117.5h1M146 117.5h1M162 117.5h1M178 117.5h1M194 117.5h1M226 117.5h1M232 117.5h1M234 117.5h1M236 117.5h1M17 118.5h1M19 118.5h1M65 118.5h1M67 118.5h1M81 118.5h1M83 118.5h1M97 118.5h1M99 118.5h1M113 118.5h3M129 118.5h1M131 118.5h1M145 118.5h1M147 118.5h1M161 118.5h1M163 118.5h1M177 118.5h1M179 118.5h1M193 118.5h1M195 118.5h1M225 118.5h1M227 118.5h1M233 118.5h3M1 121.5h1M3 121.5h1M13 121.5h1M29 121.5h1M44 121.5h1M46 121.5h2M49 121.5h1M51 121.5h1M61 121.5h1M77 121.5h1M93 121.5h1M109 121.5h1M125 121.5h1M141 121.5h1M157 121.5h1M173 121.5h1M189 121.5h1M205 121.5h3M221 121.5h1M237 121.5h1M252 121.5h1M254 121.5h2M0 122.5h1M2 122.5h2M12 122.5h1M14 122.5h1M28 122.5h1M30 122.5h1M45 122.5h2M48 122.5h1M50 122.5h2M60 122.5h1M62 122.5h1M76 122.5h1M78 122.5h1M92 122.5h1M94 122.5h1M108 122.5h1M110 122.5h1M124 122.5h1M126 122.5h1M140 122.5h1M142 122.5h1M156 122.5h1M158 122.5h1M172 122.5h1M174 122.5h1M188 122.5h1M190 122.5h1M203 122.5h7M220 122.5h1M222 122.5h1M236 122.5h1M238 122.5h1M253 122.5h2M0 123.5h1M2 123.5h2M19 123.5h1M35 123.5h1M43 123.5h1M45 123.5h2M48 123.5h1M50 123.5h2M67 123.5h1M83 123.5h1M99 123.5h1M115 123.5h1M131 123.5h1M147 123.5h1M163 123.5h1M179 123.5h1M195 123.5h1M203 123.5h3M207 123.5h4M227 123.5h1M243 123.5h1M251 123.5h1M253 123.5h2M1 124.5h2M4 124.5h1M18 124.5h1M20 124.5h1M34 124.5h1M36 124.5h1M42 124.5h1M44 124.5h2M47 124.5h1M49 124.5h2M52 124.5h1M66 124.5h1M68 124.5h1M82 124.5h1M84 124.5h1M98 124.5h1M100 124.5h1M114 124.5h1M116 124.5h1M130 124.5h1M132 124.5h1M146 124.5h1M148 124.5h1M162 124.5h1M164 124.5h1M178 124.5h1M180 124.5h1M194 124.5h1M196 124.5h1M200 124.5h1M207 124.5h6M226 124.5h1M228 124.5h1M242 124.5h1M244 124.5h1M250 124.5h1M252 124.5h2M255 124.5h1M1 125.5h2M4 125.5h1M10 125.5h1M26 125.5h1M42 125.5h1M44 125.5h2M47 125.5h1M49 125.5h2M52 125.5h1M58 125.5h1M74 125.5h1M90 125.5h1M106 125.5h1M122 125.5h1M138 125.5h1M154 125.5h1M170 125.5h1M186 125.5h1M201 125.5h1M210 125.5h2M214 125.5h2M218 125.5h1M234 125.5h1M250 125.5h1M252 125.5h2M255 125.5h1M3 126.5h1M5 126.5h2M9 126.5h1M11 126.5h1M25 126.5h1M27 126.5h1M44 126.5h1M46 126.5h1M51 126.5h1M53 126.5h2M57 126.5h1M59 126.5h1M73 126.5h1M75 126.5h1M89 126.5h1M91 126.5h1M105 126.5h1M107 126.5h1M121 126.5h1M123 126.5h1M137 126.5h1M139 126.5h1M153 126.5h1M155 126.5h1M169 126.5h1M171 126.5h1M185 126.5h1M187 126.5h1M212 126.5h2M217 126.5h1M219 126.5h1M233 126.5h1M235 126.5h1M252 126.5h1M254 126.5h1M0 127.5h2M3 127.5h1M5 127.5h2M41 127.5h1M43 127.5h2M48 127.5h2M51 127.5h1M53 127.5h2M209 127.5h3M249 127.5h1M251 127.5h2M0 128.5h1M3 128.5h2M254 128.5h1M4 129.5h2M21 129.5h1M37 129.5h1M53 129.5h1M69 129.5h1M85 129.5h1M101 129.5h1M117 129.5h1M133 129.5h1M149 129.5h1M162 129.5h1M181 129.5h1M253 129.5h2M3 130.5h3M8 130.5h1M20 130.5h1M22 130.5h1M36 130.5h1M38 130.5h1M52 130.5h1M54 130.5h1M68 130.5h1M70 130.5h1M84 130.5h1M86 130.5h1M100 130.5h1M102 130.5h1M116 130.5h1M118 130.5h1M132 130.5h1M134 130.5h1M148 130.5h1M150 130.5h1M161 130.5h1M163 130.5h1M180 130.5h1M182 130.5h1M250 130.5h1M253 130.5h2M4 131.5h1M8 131.5h2M27 131.5h1M43 131.5h1M59 131.5h1M75 131.5h1M91 131.5h1M107 131.5h1M123 131.5h1M139 131.5h1M155 131.5h1M162 131.5h1M171 131.5h1M250 131.5h2M253 131.5h3M3 132.5h1M5 132.5h1M8 132.5h1M26 132.5h1M28 132.5h1M42 132.5h1M44 132.5h1M58 132.5h1M60 132.5h1M74 132.5h1M76 132.5h1M90 132.5h1M92 132.5h1M106 132.5h1M108 132.5h1M122 132.5h1M124 132.5h1M138 132.5h1M140 132.5h1M154 132.5h1M156 132.5h1M170 132.5h1M172 132.5h1M1 133.5h6M8 133.5h1M18 133.5h1M34 133.5h1M50 133.5h1M66 133.5h1M82 133.5h1M98 133.5h1M114 133.5h1M130 133.5h1M146 133.5h1M160 133.5h1M162 133.5h1M164 133.5h1M178 133.5h1M251 133.5h3M255 133.5h1M0 134.5h1M2 134.5h1M4 134.5h1M7 134.5h2M17 134.5h1M19 134.5h1M33 134.5h1M35 134.5h1M49 134.5h1M51 134.5h1M65 134.5h1M67 134.5h1M81 134.5h1M83 134.5h1M97 134.5h1M99 134.5h1M113 134.5h1M115 134.5h1M129 134.5h1M131 134.5h1M145 134.5h1M147 134.5h1M161 134.5h3M177 134.5h1M179 134.5h1M254 134.5h1M1 135.5h2M6 135.5h2M10 135.5h1M13 135.5h2M245 135.5h1M251 135.5h1M253 135.5h2M1 136.5h2M7 136.5h1M13 136.5h2M125 136.5h94M246 136.5h1M251 136.5h4M1 137.5h2M7 137.5h1M9 137.5h2M29 137.5h1M45 137.5h1M61 137.5h1M77 137.5h1M93 137.5h1M106 137.5h1M124 137.5h96M244 137.5h2M252 137.5h1M1 138.5h3M5 138.5h2M9 138.5h1M11 138.5h1M14 138.5h1M28 138.5h1M30 138.5h1M44 138.5h1M46 138.5h1M60 138.5h1M62 138.5h1M76 138.5h1M78 138.5h1M92 138.5h1M94 138.5h1M105 138.5h1M107 138.5h1M123 138.5h98M4 139.5h2M8 139.5h1M10 139.5h3M19 139.5h1M35 139.5h1M51 139.5h1M67 139.5h1M83 139.5h1M99 139.5h1M106 139.5h1M115 139.5h1M122 139.5h100M227 139.5h1M0 140.5h2M4 140.5h1M7 140.5h3M12 140.5h1M18 140.5h1M20 140.5h1M34 140.5h1M36 140.5h1M50 140.5h1M52 140.5h1M66 140.5h1M68 140.5h1M82 140.5h1M84 140.5h1M98 140.5h1M100 140.5h1M114 140.5h1M116 140.5h1M121 140.5h102M226 140.5h1M228 140.5h1M254 140.5h2M1 141.5h1M5 141.5h3M11 141.5h1M13 141.5h2M26 141.5h1M42 141.5h1M58 141.5h1M74 141.5h1M90 141.5h1M104 141.5h1M106 141.5h1M108 141.5h1M120 141.5h104M247 141.5h2M254 141.5h2M2 142.5h2M6 142.5h1M12 142.5h3M25 142.5h1M27 142.5h1M41 142.5h1M43 142.5h1M57 142.5h1M59 142.5h1M73 142.5h1M75 142.5h1M89 142.5h1M91 142.5h1M105 142.5h3M120 142.5h104M246 142.5h3M252 142.5h3M1 143.5h6M11 143.5h1M14 143.5h1M120 143.5h104M246 143.5h3M252 143.5h2M1 144.5h2M5 144.5h1M93 144.5h134M247 144.5h1M1 145.5h2M5 145.5h3M10 145.5h2M85 145.5h1M92 145.5h136M254 145.5h2M0 146.5h1M6 146.5h6M84 146.5h1M86 146.5h1M91 146.5h138M254 146.5h2M5 147.5h2M9 147.5h2M75 147.5h1M90 147.5h140M74 148.5h1M76 148.5h1M89 148.5h142M4 149.5h2M82 149.5h1M88 149.5h144M81 150.5h1M83 150.5h1M88 150.5h144M88 151.5h144M77 152.5h155M1 153.5h1M3 153.5h1M13 153.5h1M76 153.5h156M252 153.5h1M254 153.5h2M0 154.5h1M2 154.5h2M12 154.5h1M14 154.5h1M75 154.5h157M253 154.5h2M0 155.5h1M2 155.5h2M74 155.5h158M243 155.5h1M251 155.5h1M253 155.5h2M1 156.5h2M4 156.5h1M73 156.5h159M242 156.5h1M244 156.5h1M250 156.5h1M252 156.5h2M255 156.5h1M1 157.5h2M4 157.5h1M10 157.5h1M72 157.5h160M250 157.5h1M252 157.5h2M255 157.5h1M3 158.5h1M5 158.5h2M9 158.5h1M11 158.5h1M72 158.5h160M252 158.5h1M254 158.5h1M0 159.5h2M3 159.5h1M5 159.5h2M72 159.5h160M249 159.5h1M251 159.5h2M0 160.5h1M3 160.5h2M72 160.5h160M254 160.5h1M4 161.5h2M18 161.5h1M37 161.5h1M53 161.5h1M69 161.5h1M72 161.5h160M253 161.5h2M3 162.5h3M8 162.5h1M17 162.5h1M19 162.5h1M36 162.5h1M38 162.5h1M52 162.5h1M54 162.5h1M68 162.5h1M70 162.5h1M72 162.5h160M250 162.5h1M253 162.5h2M4 163.5h1M8 163.5h2M18 163.5h1M27 163.5h1M43 163.5h1M59 163.5h1M72 163.5h160M235 163.5h1M250 163.5h2M253 163.5h3M3 164.5h1M5 164.5h1M8 164.5h1M26 164.5h1M28 164.5h1M42 164.5h1M44 164.5h1M58 164.5h1M60 164.5h1M72 164.5h160M234 164.5h1M236 164.5h1M1 165.5h6M8 165.5h1M16 165.5h1M18 165.5h1M20 165.5h1M34 165.5h1M50 165.5h1M66 165.5h1M72 165.5h160M251 165.5h3M255 165.5h1M0 166.5h1M2 166.5h1M4 166.5h1M7 166.5h2M17 166.5h3M33 166.5h1M35 166.5h1M49 166.5h1M51 166.5h1M65 166.5h1M67 166.5h1M72 166.5h160M254 166.5h1M1 167.5h2M6 167.5h2M10 167.5h1M13 167.5h2M72 167.5h160M245 167.5h1M251 167.5h1M253 167.5h2M1 168.5h2M7 168.5h1M13 168.5h2M72 168.5h160M246 168.5h1M251 168.5h4M1 169.5h2M7 169.5h1M9 169.5h2M29 169.5h1M45 169.5h1M61 169.5h1M72 169.5h160M237 169.5h1M244 169.5h2M252 169.5h1M1 170.5h3M5 170.5h2M9 170.5h1M11 170.5h1M14 170.5h1M28 170.5h1M30 170.5h1M44 170.5h1M46 170.5h1M60 170.5h1M62 170.5h1M72 170.5h160M236 170.5h1M238 170.5h1M4 171.5h2M8 171.5h1M10 171.5h3M19 171.5h1M35 171.5h1M51 171.5h1M67 171.5h1M73 171.5h159M0 172.5h2M4 172.5h1M7 172.5h3M12 172.5h1M18 172.5h1M20 172.5h1M34 172.5h1M36 172.5h1M50 172.5h1M52 172.5h1M66 172.5h1M68 172.5h1M74 172.5h158M254 172.5h2M1 173.5h1M5 173.5h3M11 173.5h1M13 173.5h2M26 173.5h1M42 173.5h1M58 173.5h1M75 173.5h157M234 173.5h1M247 173.5h2M254 173.5h2M2 174.5h2M6 174.5h1M12 174.5h3M25 174.5h1M27 174.5h1M41 174.5h1M43 174.5h1M57 174.5h1M59 174.5h1M76 174.5h156M233 174.5h1M235 174.5h1M246 174.5h3M252 174.5h3M1 175.5h6M11 175.5h1M14 175.5h1M77 175.5h155M246 175.5h3M252 175.5h2M1 176.5h2M5 176.5h1M96 176.5h136M247 176.5h1M1 177.5h2M5 177.5h3M10 177.5h2M21 177.5h1M37 177.5h1M53 177.5h1M69 177.5h1M85 177.5h1M96 177.5h136M254 177.5h2M0 178.5h1M6 178.5h6M20 178.5h1M22 178.5h1M36 178.5h1M38 178.5h1M52 178.5h1M54 178.5h1M68 178.5h1M70 178.5h1M84 178.5h1M86 178.5h1M96 178.5h136M254 178.5h2M5 179.5h2M9 179.5h2M27 179.5h1M43 179.5h1M59 179.5h1M75 179.5h1M91 179.5h1M97 179.5h134M235 179.5h1M26 180.5h1M28 180.5h1M42 180.5h1M44 180.5h1M58 180.5h1M60 180.5h1M74 180.5h1M76 180.5h1M90 180.5h1M92 180.5h1M98 180.5h132M234 180.5h1M236 180.5h1M4 181.5h2M18 181.5h1M34 181.5h1M50 181.5h1M66 181.5h1M82 181.5h1M99 181.5h130M17 182.5h1M19 182.5h1M33 182.5h1M35 182.5h1M49 182.5h1M51 182.5h1M65 182.5h1M67 182.5h1M81 182.5h1M83 182.5h1M100 182.5h128M101 183.5h126M112 184.5h104M1 185.5h1M3 185.5h1M13 185.5h1M29 185.5h1M45 185.5h1M61 185.5h1M77 185.5h1M109 185.5h1M112 185.5h104M221 185.5h1M237 185.5h1M252 185.5h1M254 185.5h2M0 186.5h1M2 186.5h2M12 186.5h1M14 186.5h1M28 186.5h1M30 186.5h1M44 186.5h1M46 186.5h1M60 186.5h1M62 186.5h1M76 186.5h1M78 186.5h1M108 186.5h1M110 186.5h1M112 186.5h104M220 186.5h1M222 186.5h1M236 186.5h1M238 186.5h1M253 186.5h2M0 187.5h1M2 187.5h2M19 187.5h1M35 187.5h1M51 187.5h1M67 187.5h1M83 187.5h1M113 187.5h102M227 187.5h1M243 187.5h1M251 187.5h1M253 187.5h2M1 188.5h2M4 188.5h1M18 188.5h1M20 188.5h1M34 188.5h1M36 188.5h1M50 188.5h1M52 188.5h1M66 188.5h1M68 188.5h1M82 188.5h1M84 188.5h1M114 188.5h100M226 188.5h1M228 188.5h1M242 188.5h1M244 188.5h1M250 188.5h1M252 188.5h2M255 188.5h1M1 189.5h2M4 189.5h1M10 189.5h1M26 189.5h1M42 189.5h1M58 189.5h1M74 189.5h1M106 189.5h1M115 189.5h98M218 189.5h1M234 189.5h1M250 189.5h1M252 189.5h2M255 189.5h1M3 190.5h1M5 190.5h2M9 190.5h1M11 190.5h1M25 190.5h1M27 190.5h1M41 190.5h1M43 190.5h1M57 190.5h1M59 190.5h1M73 190.5h1M75 190.5h1M105 190.5h1M107 190.5h1M116 190.5h96M217 190.5h1M219 190.5h1M233 190.5h1M235 190.5h1M252 190.5h1M254 190.5h1M0 191.5h2M3 191.5h1M5 191.5h2M117 191.5h94M249 191.5h1M251 191.5h2M0 192.5h1M3 192.5h2M254 192.5h1M4 193.5h2M21 193.5h1M37 193.5h1M53 193.5h1M69 193.5h1M85 193.5h1M117 193.5h1M130 193.5h1M149 193.5h1M165 193.5h1M181 193.5h1M197 193.5h1M213 193.5h1M229 193.5h1M253 193.5h2M3 194.5h3M8 194.5h1M20 194.5h1M22 194.5h1M36 194.5h1M38 194.5h1M52 194.5h1M54 194.5h1M68 194.5h1M70 194.5h1M84 194.5h1M86 194.5h1M116 194.5h1M118 194.5h1M129 194.5h1M131 194.5h1M148 194.5h1M150 194.5h1M164 194.5h1M166 194.5h1M180 194.5h1M182 194.5h1M196 194.5h1M198 194.5h1M212 194.5h1M214 194.5h1M228 194.5h1M230 194.5h1M250 194.5h1M253 194.5h2M4 195.5h1M8 195.5h2M27 195.5h1M43 195.5h1M59 195.5h1M75 195.5h1M107 195.5h1M123 195.5h1M130 195.5h1M139 195.5h1M155 195.5h1M171 195.5h1M187 195.5h1M203 195.5h1M219 195.5h1M235 195.5h1M250 195.5h2M253 195.5h3M3 196.5h1M5 196.5h1M8 196.5h1M26 196.5h1M28 196.5h1M42 196.5h1M44 196.5h1M58 196.5h1M60 196.5h1M74 196.5h1M76 196.5h1M106 196.5h1M108 196.5h1M122 196.5h1M124 196.5h1M138 196.5h1M140 196.5h1M154 196.5h1M156 196.5h1M170 196.5h1M172 196.5h1M186 196.5h1M188 196.5h1M202 196.5h1M204 196.5h1M218 196.5h1M220 196.5h1M234 196.5h1M236 196.5h1M1 197.5h6M8 197.5h1M18 197.5h1M34 197.5h1M50 197.5h1M66 197.5h1M82 197.5h1M114 197.5h1M128 197.5h1M130 197.5h1M132 197.5h1M146 197.5h1M162 197.5h1M178 197.5h1M194 197.5h1M210 197.5h1M226 197.5h1M251 197.5h3M255 197.5h1M0 198.5h1M2 198.5h1M4 198.5h1M7 198.5h2M17 198.5h1M19 198.5h1M33 198.5h1M35 198.5h1M49 198.5h1M51 198.5h1M65 198.5h1M67 198.5h1M81 198.5h1M83 198.5h1M113 198.5h1M115 198.5h1M129 198.5h3M145 198.5h1M147 198.5h1M161 198.5h1M163 198.5h1M177 198.5h1M179 198.5h1M193 198.5h1M195 198.5h1M209 198.5h1M211 198.5h1M225 198.5h1M227 198.5h1M254 198.5h1M1 199.5h2M6 199.5h2M10 199.5h1M13 199.5h2M245 199.5h1M251 199.5h1M253 199.5h2M0 200.5h2M4 200.5h1M13 200.5h2M246 200.5h1M251 200.5h4M0 201.5h1M4 201.5h2M9 201.5h2M29 201.5h1M45 201.5h1M61 201.5h1M77 201.5h1M109 201.5h1M125 201.5h1M141 201.5h1M157 201.5h1M173 201.5h1M189 201.5h1M205 201.5h1M221 201.5h1M237 201.5h1M244 201.5h2M252 201.5h1M1 202.5h1M4 202.5h1M9 202.5h1M11 202.5h1M14 202.5h1M28 202.5h1M30 202.5h1M44 202.5h1M46 202.5h1M60 202.5h1M62 202.5h1M76 202.5h1M78 202.5h1M108 202.5h1M110 202.5h1M124 202.5h1M126 202.5h1M140 202.5h1M142 202.5h1M156 202.5h1M158 202.5h1M172 202.5h1M174 202.5h1M188 202.5h1M190 202.5h1M204 202.5h1M206 202.5h1M220 202.5h1M222 202.5h1M236 202.5h1M238 202.5h1M0 203.5h3M4 203.5h1M8 203.5h1M10 203.5h3M19 203.5h1M35 203.5h1M51 203.5h1M67 203.5h1M83 203.5h1M115 203.5h1M131 203.5h1M147 203.5h1M163 203.5h1M179 203.5h1M195 203.5h1M211 203.5h1M227 203.5h1M0 204.5h1M3 204.5h2M8 204.5h2M12 204.5h1M18 204.5h1M20 204.5h1M34 204.5h1M36 204.5h1M50 204.5h1M52 204.5h1M66 204.5h1M68 204.5h1M82 204.5h1M84 204.5h1M114 204.5h1M116 204.5h1M130 204.5h1M132 204.5h1M146 204.5h1M148 204.5h1M162 204.5h1M164 204.5h1M178 204.5h1M180 204.5h1M194 204.5h1M196 204.5h1M210 204.5h1M212 204.5h1M226 204.5h1M228 204.5h1M254 204.5h2M2 205.5h2M6 205.5h1M11 205.5h1M13 205.5h2M26 205.5h1M42 205.5h1M58 205.5h1M74 205.5h1M106 205.5h1M122 205.5h1M138 205.5h1M154 205.5h1M170 205.5h1M186 205.5h1M202 205.5h1M218 205.5h1M234 205.5h1M247 205.5h2M254 205.5h2M3 206.5h1M12 206.5h3M25 206.5h1M27 206.5h1M41 206.5h1M43 206.5h1M57 206.5h1M59 206.5h1M73 206.5h1M75 206.5h1M105 206.5h1M107 206.5h1M121 206.5h1M123 206.5h1M137 206.5h1M139 206.5h1M153 206.5h1M155 206.5h1M169 206.5h1M171 206.5h1M185 206.5h1M187 206.5h1M201 206.5h1M203 206.5h1M217 206.5h1M219 206.5h1M233 206.5h1M235 206.5h1M246 206.5h3M252 206.5h3M3 207.5h1M5 207.5h2M11 207.5h1M14 207.5h1M246 207.5h3M252 207.5h2M1 208.5h2M5 208.5h1M7 208.5h1M247 208.5h1M0 209.5h2M4 209.5h1M6 209.5h2M10 209.5h2M37 209.5h1M53 209.5h1M69 209.5h1M85 209.5h1M117 209.5h1M133 209.5h1M149 209.5h1M165 209.5h1M181 209.5h1M197 209.5h1M213 209.5h1M229 209.5h1M254 209.5h2M0 210.5h1M3 210.5h3M8 210.5h4M36 210.5h1M38 210.5h1M52 210.5h1M54 210.5h1M68 210.5h1M70 210.5h1M84 210.5h1M86 210.5h1M116 210.5h1M118 210.5h1M132 210.5h1M134 210.5h1M148 210.5h1M150 210.5h1M164 210.5h1M166 210.5h1M180 210.5h1M182 210.5h1M196 210.5h1M198 210.5h1M212 210.5h1M214 210.5h1M228 210.5h1M230 210.5h1M254 210.5h2M1 211.5h3M7 211.5h1M9 211.5h2M43 211.5h1M59 211.5h1M75 211.5h1M107 211.5h1M123 211.5h1M139 211.5h1M155 211.5h1M171 211.5h1M187 211.5h1M203 211.5h1M219 211.5h1M235 211.5h1M1 212.5h2M42 212.5h1M44 212.5h1M58 212.5h1M60 212.5h1M74 212.5h1M76 212.5h1M106 212.5h1M108 212.5h1M122 212.5h1M124 212.5h1M138 212.5h1M140 212.5h1M154 212.5h1M156 212.5h1M170 212.5h1M172 212.5h1M186 212.5h1M188 212.5h1M202 212.5h1M204 212.5h1M218 212.5h1M220 212.5h1M234 212.5h1M236 212.5h1M2 213.5h2M34 213.5h1M50 213.5h1M66 213.5h1M82 213.5h1M114 213.5h1M130 213.5h1M146 213.5h1M162 213.5h1M178 213.5h1M194 213.5h1M210 213.5h1M226 213.5h1M1 214.5h3M6 214.5h1M33 214.5h1M35 214.5h1M49 214.5h1M51 214.5h1M65 214.5h1M67 214.5h1M81 214.5h1M83 214.5h1M113 214.5h1M115 214.5h1M129 214.5h1M131 214.5h1M145 214.5h1M147 214.5h1M161 214.5h1M163 214.5h1M177 214.5h1M179 214.5h1M193 214.5h1M195 214.5h1M209 214.5h1M211 214.5h1M225 214.5h1M227 214.5h1M2 215.5h1M6 215.5h2M1 216.5h1M3 216.5h1M6 216.5h1M0 217.5h5M6 217.5h1M13 217.5h1M21 217.5h3M45 217.5h1M61 217.5h1M77 217.5h1M109 217.5h1M114 217.5h1M125 217.5h1M141 217.5h1M157 217.5h1M173 217.5h1M189 217.5h1M205 217.5h1M221 217.5h1M237 217.5h1M252 217.5h1M254 217.5h2M0 218.5h1M2 218.5h1M5 218.5h2M12 218.5h1M14 218.5h1M19 218.5h7M44 218.5h1M46 218.5h1M60 218.5h1M62 218.5h1M76 218.5h1M78 218.5h1M108 218.5h1M110 218.5h1M113 218.5h1M115 218.5h1M124 218.5h1M126 218.5h1M140 218.5h1M142 218.5h1M156 218.5h1M158 218.5h1M172 218.5h1M174 218.5h1M188 218.5h1M190 218.5h1M204 218.5h1M206 218.5h1M220 218.5h1M222 218.5h1M236 218.5h1M238 218.5h1M253 218.5h2M0 219.5h1M4 219.5h2M19 219.5h3M23 219.5h4M35 219.5h1M51 219.5h1M67 219.5h1M83 219.5h1M114 219.5h1M131 219.5h1M147 219.5h1M163 219.5h1M179 219.5h1M195 219.5h1M211 219.5h1M227 219.5h1M243 219.5h1M251 219.5h1M253 219.5h2M0 220.5h1M5 220.5h1M16 220.5h1M23 220.5h6M34 220.5h1M36 220.5h1M50 220.5h1M52 220.5h1M66 220.5h1M68 220.5h1M82 220.5h1M84 220.5h1M130 220.5h1M132 220.5h1M146 220.5h1M148 220.5h1M162 220.5h1M164 220.5h1M178 220.5h1M180 220.5h1M194 220.5h1M196 220.5h1M210 220.5h1M212 220.5h1M226 220.5h1M228 220.5h1M242 220.5h1M244 220.5h1M250 220.5h1M252 220.5h2M255 220.5h1M0 221.5h1M5 221.5h1M7 221.5h1M10 221.5h1M17 221.5h1M26 221.5h2M30 221.5h2M42 221.5h1M58 221.5h1M74 221.5h1M106 221.5h1M112 221.5h1M114 221.5h1M116 221.5h1M122 221.5h1M138 221.5h1M154 221.5h1M170 221.5h1M186 221.5h1M202 221.5h1M218 221.5h1M234 221.5h1M250 221.5h1M252 221.5h2M255 221.5h1M0 222.5h2M3 222.5h2M7 222.5h1M9 222.5h1M11 222.5h1M28 222.5h2M41 222.5h1M43 222.5h1M57 222.5h1M59 222.5h1M73 222.5h1M75 222.5h1M105 222.5h1M107 222.5h1M113 222.5h3M121 222.5h1M123 222.5h1M137 222.5h1M139 222.5h1M153 222.5h1M155 222.5h1M169 222.5h1M171 222.5h1M185 222.5h1M187 222.5h1M201 222.5h1M203 222.5h1M217 222.5h1M219 222.5h1M233 222.5h1M235 222.5h1M252 222.5h1M254 222.5h1M2 223.5h2M6 223.5h1M25 223.5h3M249 223.5h1M251 223.5h2M2 224.5h1M5 224.5h4M30 224.5h1M32 224.5h1M35 224.5h2M62 224.5h1M64 224.5h1M67 224.5h2M94 224.5h1M96 224.5h1M99 224.5h2M126 224.5h1M128 224.5h1M131 224.5h2M158 224.5h1M160 224.5h1M163 224.5h2M190 224.5h1M192 224.5h1M195 224.5h2M222 224.5h1M224 224.5h1M227 224.5h2M254 224.5h1M4 225.5h2M29 225.5h2M36 225.5h2M61 225.5h2M68 225.5h2M93 225.5h2M100 225.5h2M125 225.5h2M132 225.5h2M157 225.5h2M164 225.5h2M189 225.5h2M196 225.5h2M221 225.5h2M228 225.5h2M253 225.5h2M2 226.5h1M8 226.5h1M26 226.5h1M29 226.5h2M35 226.5h3M40 226.5h1M58 226.5h1M61 226.5h2M67 226.5h3M72 226.5h1M90 226.5h1M93 226.5h2M99 226.5h3M104 226.5h1M122 226.5h1M125 226.5h2M131 226.5h3M136 226.5h1M154 226.5h1M157 226.5h2M163 226.5h3M168 226.5h1M186 226.5h1M189 226.5h2M195 226.5h3M200 226.5h1M218 226.5h1M221 226.5h2M227 226.5h3M232 226.5h1M250 226.5h1M253 226.5h2M2 227.5h2M10 227.5h2M26 227.5h2M29 227.5h3M36 227.5h1M40 227.5h2M58 227.5h2M61 227.5h3M68 227.5h1M72 227.5h2M90 227.5h2M93 227.5h3M100 227.5h1M104 227.5h2M122 227.5h2M125 227.5h3M132 227.5h1M136 227.5h2M154 227.5h2M157 227.5h3M164 227.5h1M168 227.5h2M186 227.5h2M189 227.5h3M196 227.5h1M200 227.5h2M218 227.5h2M221 227.5h3M228 227.5h1M232 227.5h2M250 227.5h2M253 227.5h3M2 228.5h1M10 228.5h3M35 228.5h1M37 228.5h1M40 228.5h1M67 228.5h1M69 228.5h1M72 228.5h1M99 228.5h1M101 228.5h1M104 228.5h1M131 228.5h1M133 228.5h1M136 228.5h1M163 228.5h1M165 228.5h1M168 228.5h1M195 228.5h1M197 228.5h1M200 228.5h1M227 228.5h1M229 228.5h1M232 228.5h1M0 229.5h1M2 229.5h1M12 229.5h1M27 229.5h3M31 229.5h1M33 229.5h6M40 229.5h1M59 229.5h3M63 229.5h1M65 229.5h6M72 229.5h1M91 229.5h3M95 229.5h1M97 229.5h6M104 229.5h1M123 229.5h3M127 229.5h1M129 229.5h6M136 229.5h1M155 229.5h3M159 229.5h1M161 229.5h6M168 229.5h1M187 229.5h3M191 229.5h1M193 229.5h6M200 229.5h1M219 229.5h3M223 229.5h1M225 229.5h6M232 229.5h1M251 229.5h3M255 229.5h1M1 230.5h2M8 230.5h1M30 230.5h1M32 230.5h1M34 230.5h1M36 230.5h1M39 230.5h2M62 230.5h1M64 230.5h1M66 230.5h1M68 230.5h1M71 230.5h2M94 230.5h1M96 230.5h1M98 230.5h1M100 230.5h1M103 230.5h2M126 230.5h1M128 230.5h1M130 230.5h1M132 230.5h1M135 230.5h2M158 230.5h1M160 230.5h1M162 230.5h1M164 230.5h1M167 230.5h2M190 230.5h1M192 230.5h1M194 230.5h1M196 230.5h1M199 230.5h2M222 230.5h1M224 230.5h1M226 230.5h1M228 230.5h1M231 230.5h2M254 230.5h1M0 231.5h2M4 231.5h1M7 231.5h2M13 231.5h1M15 231.5h1M21 231.5h1M27 231.5h1M29 231.5h2M33 231.5h2M38 231.5h2M42 231.5h1M45 231.5h2M53 231.5h1M59 231.5h1M61 231.5h2M65 231.5h2M70 231.5h2M74 231.5h1M77 231.5h2M85 231.5h1M91 231.5h1M93 231.5h2M97 231.5h2M102 231.5h2M106 231.5h1M109 231.5h2M117 231.5h1M123 231.5h1M125 231.5h2M129 231.5h2M134 231.5h2M138 231.5h1M141 231.5h2M149 231.5h1M155 231.5h1M157 231.5h2M161 231.5h2M166 231.5h2M170 231.5h1M173 231.5h2M181 231.5h1M187 231.5h1M189 231.5h2M193 231.5h2M198 231.5h2M202 231.5h1M205 231.5h2M213 231.5h1M219 231.5h1M221 231.5h2M225 231.5h2M230 231.5h2M234 231.5h1M237 231.5h2M245 231.5h1M251 231.5h1M253 231.5h2M22 232.5h1M27 232.5h4M33 232.5h2M39 232.5h1M41 232.5h2M45 232.5h2M54 232.5h1M59 232.5h4M65 232.5h2M70 232.5h2M73 232.5h2M77 232.5h2M86 232.5h1M91 232.5h4M97 232.5h2M103 232.5h1M105 232.5h2M109 232.5h2M118 232.5h1M123 232.5h4M129 232.5h2M134 232.5h2M137 232.5h2M141 232.5h2M150 232.5h1M155 232.5h4M161 232.5h2M166 232.5h2M170 232.5h1M173 232.5h2M182 232.5h1M187 232.5h4M193 232.5h2M198 232.5h2M201 232.5h2M205 232.5h2M214 232.5h1M219 232.5h4M225 232.5h2M231 232.5h1M233 232.5h2M237 232.5h2M246 232.5h1M251 232.5h4M20 233.5h2M28 233.5h1M33 233.5h3M38 233.5h2M41 233.5h3M45 233.5h1M52 233.5h2M60 233.5h1M65 233.5h3M70 233.5h2M73 233.5h3M77 233.5h1M84 233.5h2M92 233.5h1M97 233.5h3M102 233.5h2M105 233.5h3M109 233.5h1M116 233.5h2M124 233.5h1M129 233.5h3M134 233.5h2M137 233.5h3M141 233.5h1M148 233.5h2M156 233.5h1M161 233.5h3M166 233.5h2M169 233.5h3M173 233.5h1M180 233.5h2M188 233.5h1M193 233.5h3M199 233.5h1M201 233.5h3M205 233.5h1M212 233.5h2M220 233.5h1M225 233.5h3M231 233.5h1M233 233.5h3M237 233.5h1M244 233.5h2M252 233.5h1M33 234.5h6M41 234.5h6M65 234.5h6M73 234.5h3M77 234.5h2M97 234.5h6M105 234.5h1M107 234.5h2M110 234.5h1M129 234.5h3M133 234.5h2M137 234.5h1M139 234.5h2M142 234.5h1M161 234.5h3M165 234.5h2M169 234.5h6M193 234.5h3M197 234.5h2M201 234.5h6M225 234.5h3M229 234.5h2M233 234.5h6M14 235.5h7M36 235.5h2M46 235.5h7M68 235.5h2M78 235.5h1M80 235.5h5M100 235.5h2M110 235.5h1M112 235.5h5M132 235.5h2M142 235.5h3M147 235.5h2M164 235.5h2M174 235.5h7M196 235.5h2M206 235.5h7M228 235.5h2M238 235.5h1M240 235.5h5M13 236.5h2M19 236.5h3M30 236.5h4M36 236.5h1M45 236.5h2M51 236.5h3M62 236.5h4M68 236.5h1M77 236.5h2M83 236.5h3M94 236.5h4M100 236.5h1M109 236.5h2M115 236.5h3M126 236.5h4M132 236.5h1M141 236.5h2M147 236.5h3M158 236.5h4M164 236.5h1M173 236.5h2M179 236.5h3M190 236.5h4M196 236.5h1M205 236.5h2M212 236.5h2M222 236.5h4M228 236.5h1M237 236.5h2M243 236.5h3M254 236.5h2M10 237.5h1M13 237.5h3M19 237.5h3M24 237.5h1M30 237.5h4M42 237.5h1M45 237.5h3M51 237.5h3M56 237.5h1M62 237.5h4M74 237.5h1M77 237.5h3M83 237.5h3M88 237.5h1M94 237.5h4M106 237.5h1M109 237.5h2M115 237.5h3M120 237.5h1M126 237.5h4M138 237.5h1M141 237.5h3M147 237.5h3M152 237.5h1M158 237.5h4M170 237.5h1M173 237.5h3M179 237.5h3M184 237.5h1M190 237.5h4M202 237.5h1M205 237.5h3M211 237.5h3M216 237.5h1M222 237.5h4M234 237.5h1M237 237.5h3M243 237.5h3M248 237.5h1M254 237.5h2M10 238.5h2M13 238.5h3M19 238.5h2M24 238.5h2M29 238.5h3M33 238.5h2M42 238.5h2M45 238.5h3M51 238.5h2M56 238.5h2M61 238.5h2M65 238.5h2M74 238.5h2M77 238.5h3M83 238.5h2M88 238.5h2M93 238.5h3M98 238.5h1M106 238.5h2M109 238.5h3M116 238.5h1M120 238.5h2M125 238.5h3M129 238.5h2M138 238.5h2M141 238.5h3M147 238.5h2M152 238.5h2M157 238.5h2M161 238.5h2M170 238.5h2M173 238.5h3M179 238.5h2M184 238.5h2M189 238.5h3M193 238.5h2M202 238.5h2M205 238.5h3M211 238.5h2M216 238.5h2M221 238.5h2M225 238.5h2M234 238.5h2M237 238.5h3M243 238.5h2M248 238.5h2M253 238.5h3M15 239.5h1M18 239.5h2M21 239.5h1M24 239.5h1M33 239.5h1M47 239.5h1M50 239.5h2M53 239.5h1M56 239.5h1M62 239.5h1M65 239.5h1M79 239.5h1M82 239.5h2M85 239.5h1M88 239.5h1M97 239.5h1M111 239.5h1M114 239.5h2M117 239.5h1M120 239.5h1M126 239.5h1M129 239.5h1M143 239.5h1M146 239.5h2M149 239.5h1M152 239.5h1M158 239.5h1M161 239.5h1M175 239.5h1M178 239.5h2M181 239.5h1M184 239.5h1M190 239.5h1M193 239.5h1M207 239.5h1M210 239.5h2M213 239.5h1M216 239.5h1M225 239.5h1M243 239.5h1M245 239.5h1M248 239.5h1M254 239.5h1M11 240.5h3M15 240.5h8M24 240.5h1M31 240.5h1M43 240.5h3M47 240.5h8M56 240.5h1M63 240.5h1M75 240.5h3M79 240.5h8M88 240.5h1M95 240.5h1M107 240.5h3M111 240.5h8M120 240.5h1M139 240.5h3M143 240.5h8M152 240.5h1M159 240.5h1M171 240.5h3M175 240.5h1M177 240.5h6M184 240.5h1M191 240.5h1M203 240.5h3M207 240.5h8M216 240.5h1M235 240.5h3M239 240.5h8M248 240.5h1M255 240.5h1M11 241.5h1M13 241.5h2M16 241.5h1M18 241.5h7M31 241.5h2M43 241.5h1M46 241.5h1M48 241.5h1M50 241.5h1M52 241.5h1M54 241.5h3M63 241.5h1M75 241.5h1M77 241.5h2M80 241.5h1M82 241.5h7M95 241.5h2M110 241.5h1M112 241.5h1M114 241.5h3M119 241.5h2M127 241.5h1M141 241.5h2M144 241.5h1M146 241.5h4M151 241.5h2M159 241.5h2M171 241.5h1M173 241.5h2M176 241.5h1M178 241.5h1M180 241.5h2M183 241.5h2M191 241.5h2M203 241.5h1M205 241.5h2M208 241.5h1M210 241.5h7M223 241.5h2M235 241.5h1M237 241.5h2M240 241.5h1M242 241.5h3M246 241.5h3M255 241.5h1M5 242.5h1M11 242.5h4M17 242.5h2M22 242.5h2M26 242.5h5M37 242.5h1M43 242.5h4M49 242.5h2M54 242.5h2M58 242.5h5M69 242.5h1M75 242.5h4M81 242.5h2M86 242.5h2M90 242.5h5M101 242.5h1M107 242.5h1M109 242.5h2M113 242.5h2M118 242.5h2M122 242.5h5M133 242.5h1M139 242.5h1M141 242.5h2M145 242.5h2M150 242.5h2M154 242.5h5M165 242.5h1M171 242.5h1M173 242.5h2M177 242.5h2M182 242.5h2M186 242.5h5M197 242.5h1M203 242.5h1M205 242.5h2M209 242.5h2M214 242.5h2M218 242.5h5M229 242.5h1M235 242.5h4M241 242.5h2M246 242.5h2M250 242.5h5M6 243.5h1M11 243.5h4M17 243.5h2M22 243.5h2M25 243.5h2M29 243.5h2M38 243.5h1M43 243.5h4M49 243.5h2M54 243.5h2M58 243.5h1M61 243.5h2M70 243.5h1M75 243.5h4M81 243.5h2M86 243.5h2M89 243.5h2M93 243.5h2M102 243.5h1M107 243.5h4M113 243.5h2M118 243.5h2M121 243.5h2M125 243.5h2M134 243.5h1M139 243.5h4M145 243.5h2M151 243.5h1M157 243.5h2M166 243.5h1M171 243.5h4M177 243.5h2M182 243.5h2M186 243.5h1M189 243.5h2M198 243.5h1M203 243.5h4M209 243.5h2M214 243.5h2M218 243.5h1M221 243.5h2M230 243.5h1M235 243.5h4M241 243.5h2M246 243.5h2M250 243.5h1M253 243.5h2M4 244.5h2M12 244.5h1M17 244.5h2M22 244.5h2M25 244.5h3M36 244.5h2M44 244.5h1M49 244.5h3M54 244.5h2M57 244.5h3M61 244.5h1M68 244.5h2M76 244.5h1M81 244.5h3M86 244.5h2M89 244.5h3M100 244.5h2M108 244.5h1M113 244.5h3M118 244.5h2M121 244.5h2M125 244.5h1M132 244.5h2M140 244.5h1M145 244.5h3M150 244.5h2M153 244.5h3M157 244.5h1M164 244.5h2M172 244.5h1M177 244.5h2M182 244.5h2M185 244.5h2M189 244.5h1M196 244.5h2M204 244.5h1M209 244.5h3M214 244.5h2M217 244.5h3M228 244.5h2M236 244.5h1M241 244.5h3M246 244.5h2M249 244.5h2M253 244.5h1M17 245.5h3M21 245.5h2M25 245.5h1M27 245.5h1M29 245.5h2M49 245.5h6M57 245.5h1M59 245.5h4M81 245.5h6M89 245.5h4M94 245.5h1M113 245.5h6M121 245.5h1M123 245.5h1M125 245.5h2M145 245.5h6M153 245.5h6M177 245.5h3M181 245.5h2M185 245.5h4M190 245.5h1M209 245.5h6M217 245.5h3M221 245.5h2M241 245.5h6M249 245.5h3M253 245.5h2M0 246.5h5M20 246.5h2M30 246.5h7M52 246.5h2M62 246.5h7M84 246.5h2M94 246.5h7M116 246.5h2M126 246.5h7M148 246.5h2M158 246.5h3M162 246.5h3M180 246.5h2M190 246.5h1M192 246.5h2M195 246.5h2M212 246.5h2M222 246.5h3M226 246.5h3M244 246.5h2M254 246.5h2M0 247.5h1M3 247.5h3M14 247.5h4M20 247.5h1M29 247.5h2M35 247.5h3M46 247.5h4M52 247.5h1M61 247.5h2M67 247.5h3M78 247.5h4M84 247.5h1M93 247.5h2M99 247.5h3M110 247.5h4M116 247.5h1M125 247.5h2M131 247.5h3M142 247.5h4M148 247.5h1M157 247.5h2M163 247.5h3M174 247.5h4M180 247.5h1M189 247.5h2M195 247.5h3M206 247.5h4M212 247.5h1M221 247.5h2M228 247.5h2M238 247.5h4M244 247.5h1M253 247.5h2M3 248.5h3M8 248.5h1M14 248.5h4M26 248.5h1M29 248.5h3M35 248.5h3M40 248.5h1M46 248.5h4M58 248.5h1M61 248.5h3M67 248.5h3M72 248.5h1M78 248.5h4M90 248.5h1M93 248.5h3M99 248.5h3M104 248.5h1M110 248.5h4M122 248.5h1M125 248.5h3M131 248.5h3M136 248.5h1M142 248.5h2M145 248.5h1M154 248.5h1M157 248.5h3M163 248.5h3M168 248.5h1M174 248.5h4M186 248.5h1M189 248.5h2M195 248.5h3M200 248.5h1M206 248.5h4M218 248.5h1M221 248.5h3M227 248.5h3M232 248.5h1M238 248.5h4M250 248.5h1M253 248.5h3M3 249.5h2M8 249.5h2M13 249.5h3M17 249.5h2M26 249.5h2M29 249.5h3M35 249.5h2M40 249.5h2M45 249.5h3M49 249.5h2M58 249.5h2M61 249.5h3M67 249.5h2M72 249.5h2M77 249.5h3M81 249.5h2M90 249.5h2M93 249.5h3M99 249.5h2M104 249.5h2M109 249.5h3M114 249.5h1M122 249.5h2M125 249.5h3M131 249.5h2M136 249.5h2M141 249.5h3M145 249.5h2M154 249.5h2M157 249.5h3M164 249.5h1M168 249.5h2M173 249.5h3M177 249.5h2M186 249.5h2M189 249.5h3M196 249.5h1M200 249.5h2M205 249.5h3M209 249.5h2M218 249.5h2M221 249.5h3M227 249.5h2M232 249.5h2M237 249.5h3M241 249.5h2M250 249.5h2M253 249.5h3M2 250.5h2M5 250.5h1M8 250.5h1M14 250.5h1M17 250.5h1M31 250.5h1M34 250.5h2M37 250.5h1M40 250.5h1M46 250.5h1M49 250.5h1M66 250.5h2M69 250.5h1M72 250.5h1M78 250.5h1M81 250.5h1M95 250.5h1M98 250.5h2M101 250.5h1M104 250.5h1M113 250.5h1M127 250.5h1M130 250.5h2M133 250.5h1M136 250.5h1M142 250.5h1M145 250.5h1M159 250.5h1M163 250.5h1M165 250.5h1M168 250.5h1M177 250.5h1M191 250.5h1M194 250.5h2M197 250.5h1M200 250.5h1M206 250.5h1M209 250.5h1M223 250.5h1M227 250.5h1M229 250.5h1M232 250.5h1M238 250.5h1M241 250.5h1M255 250.5h1M0 251.5h7M8 251.5h1M15 251.5h1M27 251.5h3M31 251.5h8M40 251.5h1M47 251.5h1M59 251.5h3M63 251.5h8M72 251.5h1M79 251.5h1M91 251.5h3M95 251.5h8M104 251.5h1M111 251.5h1M123 251.5h3M127 251.5h8M136 251.5h1M143 251.5h1M155 251.5h3M159 251.5h8M168 251.5h1M175 251.5h1M187 251.5h3M191 251.5h1M193 251.5h6M200 251.5h1M207 251.5h1M219 251.5h3M223 251.5h8M232 251.5h1M239 251.5h1M251 251.5h3M255 251.5h1M0 252.5h1M2 252.5h7M15 252.5h2M27 252.5h1M30 252.5h1M32 252.5h1M34 252.5h7M47 252.5h1M59 252.5h1M61 252.5h2M64 252.5h1M66 252.5h4M71 252.5h2M79 252.5h1M93 252.5h2M96 252.5h1M98 252.5h7M111 252.5h2M123 252.5h1M125 252.5h2M128 252.5h1M130 252.5h4M135 252.5h2M143 252.5h2M155 252.5h1M157 252.5h2M160 252.5h1M162 252.5h4M167 252.5h2M175 252.5h2M187 252.5h1M189 252.5h2M192 252.5h1M194 252.5h7M207 252.5h2M219 252.5h1M221 252.5h2M224 252.5h1M226 252.5h1M228 252.5h5M239 252.5h2M253 252.5h2M1 253.5h2M6 253.5h2M10 253.5h5M21 253.5h1M27 253.5h4M33 253.5h2M38 253.5h2M42 253.5h5M53 253.5h1M59 253.5h4M65 253.5h2M70 253.5h2M74 253.5h1M76 253.5h3M85 253.5h1M91 253.5h1M93 253.5h2M97 253.5h2M102 253.5h2M106 253.5h5M117 253.5h1M123 253.5h4M129 253.5h2M134 253.5h2M138 253.5h1M140 253.5h3M149 253.5h1M155 253.5h4M161 253.5h2M166 253.5h2M170 253.5h5M181 253.5h1M187 253.5h1M189 253.5h2M193 253.5h2M198 253.5h2M202 253.5h1M204 253.5h3M213 253.5h1M219 253.5h1M221 253.5h2M225 253.5h2M230 253.5h2M234 253.5h5M245 253.5h1M251 253.5h4M1 254.5h2M6 254.5h2M10 254.5h1M13 254.5h2M22 254.5h1M27 254.5h4M33 254.5h2M38 254.5h2M41 254.5h2M45 254.5h2M54 254.5h1M59 254.5h4M65 254.5h2M70 254.5h2M74 254.5h1M77 254.5h2M86 254.5h1M91 254.5h4M97 254.5h2M102 254.5h2M105 254.5h2M109 254.5h2M118 254.5h1M123 254.5h4M129 254.5h2M134 254.5h2M138 254.5h1M141 254.5h2M150 254.5h1M155 254.5h4M161 254.5h2M166 254.5h2M173 254.5h2M182 254.5h1M187 254.5h4M193 254.5h2M198 254.5h2M201 254.5h1M205 254.5h2M214 254.5h1M219 254.5h4M225 254.5h2M230 254.5h2M233 254.5h2M237 254.5h2M246 254.5h1M251 254.5h4M1 255.5h2M7 255.5h1M9 255.5h2M13 255.5h1M20 255.5h2M28 255.5h1M33 255.5h2M39 255.5h1M41 255.5h2M45 255.5h1M52 255.5h2M60 255.5h1M65 255.5h2M71 255.5h1M73 255.5h2M77 255.5h1M84 255.5h2M92 255.5h1M97 255.5h2M103 255.5h1M105 255.5h2M109 255.5h1M116 255.5h2M124 255.5h1M129 255.5h2M135 255.5h1M137 255.5h2M141 255.5h1M148 255.5h2M156 255.5h1M161 255.5h2M167 255.5h1M169 255.5h2M180 255.5h2M188 255.5h1M193 255.5h2M199 255.5h1M201 255.5h2M205 255.5h1M212 255.5h2M220 255.5h1M225 255.5h2M231 255.5h1M233 255.5h2M244 255.5h2M252 255.5h1"/><path stroke="#3b6a55" d="M5 0.5h2M9 0.5h3M14 0.5h1M18 0.5h1M20 0.5h4M29 0.5h1M37 0.5h2M41 0.5h3M46 0.5h1M50 0.5h1M52 0.5h4M61 0.5h1M69 0.5h2M73 0.5h3M78 0.5h1M82 0.5h1M84 0.5h4M93 0.5h1M101 0.5h2M105 0.5h3M110 0.5h1M114 0.5h1M116 0.5h4M125 0.5h1M133 0.5h2M137 0.5h3M142 0.5h1M145 0.5h2M148 0.5h2M6 1.5h5M12 1.5h1M14 1.5h5M21 1.5h1M25 1.5h2M28 1.5h1M38 1.5h5M44 1.5h1M46 1.5h5M53 1.5h1M57 1.5h2M60 1.5h1M70 1.5h5M76 1.5h1M78 1.5h5M85 1.5h1M89 1.5h2M92 1.5h1M102 1.5h5M108 1.5h1M110 1.5h5M117 1.5h1M121 1.5h2M124 1.5h1M134 1.5h5M140 1.5h1M142 1.5h2M145 1.5h2M149 1.5h1M151 1.5h1M6 2.5h2M9 2.5h6M24 2.5h2M27 2.5h2M38 2.5h2M41 2.5h6M56 2.5h2M59 2.5h2M70 2.5h2M73 2.5h6M88 2.5h2M91 2.5h2M102 2.5h2M105 2.5h6M120 2.5h2M123 2.5h2M134 2.5h2M137 2.5h6M145 2.5h1M5 3.5h3M10 3.5h3M14 3.5h5M24 3.5h2M28 3.5h1M37 3.5h3M42 3.5h3M46 3.5h5M56 3.5h2M60 3.5h1M69 3.5h3M74 3.5h3M78 3.5h5M88 3.5h2M92 3.5h1M101 3.5h3M106 3.5h3M110 3.5h5M120 3.5h2M124 3.5h1M133 3.5h3M138 3.5h3M142 3.5h2M7 4.5h1M9 4.5h2M12 4.5h1M14 4.5h2M17 4.5h1M25 4.5h1M27 4.5h1M30 4.5h1M39 4.5h1M41 4.5h2M44 4.5h1M46 4.5h2M49 4.5h1M57 4.5h1M59 4.5h1M62 4.5h1M71 4.5h1M73 4.5h2M76 4.5h1M78 4.5h2M81 4.5h1M89 4.5h1M91 4.5h1M94 4.5h1M103 4.5h1M105 4.5h2M108 4.5h1M110 4.5h2M113 4.5h1M121 4.5h1M123 4.5h1M126 4.5h1M135 4.5h1M137 4.5h2M140 4.5h1M142 4.5h2M145 4.5h1M9 5.5h1M12 5.5h2M30 5.5h1M41 5.5h1M44 5.5h2M62 5.5h1M73 5.5h1M76 5.5h2M94 5.5h1M105 5.5h1M108 5.5h2M126 5.5h1M137 5.5h1M140 5.5h2M147 5.5h2M9 6.5h6M19 6.5h3M23 6.5h1M25 6.5h1M41 6.5h6M51 6.5h3M55 6.5h1M57 6.5h1M73 6.5h6M83 6.5h3M87 6.5h1M89 6.5h1M105 6.5h6M115 6.5h3M119 6.5h1M121 6.5h1M137 6.5h6M144 6.5h1M146 6.5h1M148 6.5h1M151 6.5h1M0 7.5h1M8 7.5h2M15 7.5h1M20 7.5h1M22 7.5h3M26 7.5h1M32 7.5h1M40 7.5h2M47 7.5h1M52 7.5h1M54 7.5h3M58 7.5h1M64 7.5h1M72 7.5h2M79 7.5h1M84 7.5h1M86 7.5h3M90 7.5h1M96 7.5h1M104 7.5h2M111 7.5h1M116 7.5h1M118 7.5h3M122 7.5h1M128 7.5h1M136 7.5h2M143 7.5h1M0 8.5h1M18 8.5h2M21 8.5h1M23 8.5h1M31 8.5h2M50 8.5h2M53 8.5h1M55 8.5h1M63 8.5h2M82 8.5h2M85 8.5h1M87 8.5h1M95 8.5h2M114 8.5h2M117 8.5h1M119 8.5h1M127 8.5h2M148 8.5h3M218 8.5h1M0 9.5h1M14 9.5h2M17 9.5h2M22 9.5h1M27 9.5h1M29 9.5h2M32 9.5h1M46 9.5h2M49 9.5h2M54 9.5h1M59 9.5h1M61 9.5h2M64 9.5h1M78 9.5h2M81 9.5h2M86 9.5h1M91 9.5h1M93 9.5h2M96 9.5h1M110 9.5h2M113 9.5h2M118 9.5h1M123 9.5h1M125 9.5h2M128 9.5h1M142 9.5h2M146 9.5h1M150 9.5h1M217 9.5h1M219 9.5h1M0 10.5h1M7 10.5h1M15 10.5h1M18 10.5h6M31 10.5h2M39 10.5h1M47 10.5h1M50 10.5h6M63 10.5h2M71 10.5h1M79 10.5h1M82 10.5h6M95 10.5h2M103 10.5h1M111 10.5h1M114 10.5h6M127 10.5h2M135 10.5h1M143 10.5h4M216 10.5h1M218 10.5h1M220 10.5h1M0 11.5h1M2 11.5h2M6 11.5h1M13 11.5h1M17 11.5h4M23 11.5h2M30 11.5h3M34 11.5h2M38 11.5h1M45 11.5h1M49 11.5h4M55 11.5h2M62 11.5h3M66 11.5h2M70 11.5h1M77 11.5h1M81 11.5h4M87 11.5h2M94 11.5h3M98 11.5h2M102 11.5h1M109 11.5h1M113 11.5h4M119 11.5h2M126 11.5h3M130 11.5h2M134 11.5h1M141 11.5h1M217 11.5h1M219 11.5h1M2 12.5h1M6 12.5h1M10 12.5h1M14 12.5h2M18 12.5h1M21 12.5h5M29 12.5h1M34 12.5h1M38 12.5h1M42 12.5h1M46 12.5h2M50 12.5h1M53 12.5h5M61 12.5h1M66 12.5h1M70 12.5h1M74 12.5h1M78 12.5h2M82 12.5h1M85 12.5h5M93 12.5h1M98 12.5h1M102 12.5h1M106 12.5h1M110 12.5h2M114 12.5h1M117 12.5h5M125 12.5h1M130 12.5h1M134 12.5h1M138 12.5h1M142 12.5h2M146 12.5h1M149 12.5h1M218 12.5h1M2 13.5h2M18 13.5h1M21 13.5h2M26 13.5h1M28 13.5h2M34 13.5h2M50 13.5h1M53 13.5h2M58 13.5h1M60 13.5h2M66 13.5h2M82 13.5h1M85 13.5h2M90 13.5h1M92 13.5h2M98 13.5h2M114 13.5h1M117 13.5h2M122 13.5h1M124 13.5h2M130 13.5h2M146 13.5h1M148 13.5h3M4 14.5h2M17 14.5h1M20 14.5h2M25 14.5h2M36 14.5h2M49 14.5h1M52 14.5h2M57 14.5h2M68 14.5h2M81 14.5h1M84 14.5h2M89 14.5h2M100 14.5h2M113 14.5h1M116 14.5h2M121 14.5h2M132 14.5h2M144 14.5h2M147 14.5h1M13 15.5h1M20 15.5h2M26 15.5h1M45 15.5h1M52 15.5h2M58 15.5h1M77 15.5h1M84 15.5h2M90 15.5h1M109 15.5h1M116 15.5h2M122 15.5h1M141 15.5h1M3 16.5h1M12 16.5h2M20 16.5h3M24 16.5h3M28 16.5h2M35 16.5h1M44 16.5h2M52 16.5h3M56 16.5h3M60 16.5h2M67 16.5h1M76 16.5h2M84 16.5h3M88 16.5h3M92 16.5h2M99 16.5h1M108 16.5h2M116 16.5h3M120 16.5h3M124 16.5h2M131 16.5h1M140 16.5h2M149 16.5h1M151 16.5h1M186 16.5h1M12 17.5h1M20 17.5h5M26 17.5h1M28 17.5h1M44 17.5h1M52 17.5h5M58 17.5h1M60 17.5h1M76 17.5h1M84 17.5h5M90 17.5h1M92 17.5h1M108 17.5h1M116 17.5h5M122 17.5h1M124 17.5h1M140 17.5h1M147 17.5h2M151 17.5h1M185 17.5h1M187 17.5h1M1 18.5h1M4 18.5h2M12 18.5h1M21 18.5h3M28 18.5h1M33 18.5h1M36 18.5h2M44 18.5h1M53 18.5h3M60 18.5h1M65 18.5h1M68 18.5h2M76 18.5h1M85 18.5h3M92 18.5h1M97 18.5h1M100 18.5h2M108 18.5h1M117 18.5h3M124 18.5h1M129 18.5h1M132 18.5h2M140 18.5h1M144 18.5h1M147 18.5h1M150 18.5h1M184 18.5h1M186 18.5h1M188 18.5h1M0 19.5h2M3 19.5h2M8 19.5h1M11 19.5h1M29 19.5h2M32 19.5h2M35 19.5h2M40 19.5h1M43 19.5h1M61 19.5h2M64 19.5h2M67 19.5h2M72 19.5h1M75 19.5h1M93 19.5h2M96 19.5h2M99 19.5h2M104 19.5h1M107 19.5h1M125 19.5h2M128 19.5h2M131 19.5h2M136 19.5h1M139 19.5h1M185 19.5h1M187 19.5h1M3 20.5h2M6 20.5h3M29 20.5h1M35 20.5h2M38 20.5h3M61 20.5h1M67 20.5h2M70 20.5h3M93 20.5h1M99 20.5h2M102 20.5h3M125 20.5h1M131 20.5h2M134 20.5h3M144 20.5h2M149 20.5h1M151 20.5h1M186 20.5h1M2 21.5h2M6 21.5h2M34 21.5h2M38 21.5h2M66 21.5h2M70 21.5h2M98 21.5h2M102 21.5h2M130 21.5h2M134 21.5h2M144 21.5h1M146 21.5h1M150 21.5h1M4 22.5h1M36 22.5h1M68 22.5h1M100 22.5h1M132 22.5h1M144 22.5h1M147 22.5h1M149 22.5h3M163 22.5h1M162 23.5h2M146 24.5h1M150 24.5h1M162 24.5h1M0 25.5h1M32 25.5h1M64 25.5h1M96 25.5h1M128 25.5h1M144 25.5h1M146 25.5h3M151 25.5h1M161 25.5h2M4 26.5h1M31 26.5h1M36 26.5h1M63 26.5h1M68 26.5h1M95 26.5h1M100 26.5h1M127 26.5h1M132 26.5h1M145 26.5h3M149 26.5h1M161 26.5h2M4 27.5h1M31 27.5h1M36 27.5h1M63 27.5h1M68 27.5h1M95 27.5h1M100 27.5h1M127 27.5h1M132 27.5h1M161 27.5h2M166 27.5h1M3 28.5h1M30 28.5h1M35 28.5h1M62 28.5h1M67 28.5h1M94 28.5h1M99 28.5h1M126 28.5h1M131 28.5h1M144 28.5h1M146 28.5h1M149 28.5h1M162 28.5h5M3 29.5h1M30 29.5h1M35 29.5h1M62 29.5h1M67 29.5h1M94 29.5h1M99 29.5h1M126 29.5h1M131 29.5h1M146 29.5h1M149 29.5h1M151 29.5h1M165 29.5h5M2 30.5h1M29 30.5h1M34 30.5h1M61 30.5h1M66 30.5h1M93 30.5h1M98 30.5h1M125 30.5h1M130 30.5h1M151 30.5h1M2 31.5h1M34 31.5h1M66 31.5h1M98 31.5h1M130 31.5h1M5 32.5h2M144 32.5h3M149 32.5h1M151 32.5h4M157 32.5h3M202 32.5h1M6 33.5h4M73 33.5h6M144 33.5h1M150 33.5h3M157 33.5h1M201 33.5h1M203 33.5h1M6 34.5h2M9 34.5h2M73 34.5h1M78 34.5h1M145 34.5h2M150 34.5h1M154 34.5h1M157 34.5h1M159 34.5h1M200 34.5h1M202 34.5h1M204 34.5h1M5 35.5h3M10 35.5h3M73 35.5h1M78 35.5h1M152 35.5h2M155 35.5h2M158 35.5h2M201 35.5h1M203 35.5h1M7 36.5h1M9 36.5h2M12 36.5h1M73 36.5h6M144 36.5h2M149 36.5h2M152 36.5h1M154 36.5h1M156 36.5h2M159 36.5h1M202 36.5h1M9 37.5h1M12 37.5h2M145 37.5h2M148 37.5h1M152 37.5h1M156 37.5h3M9 38.5h6M144 38.5h1M147 38.5h1M150 38.5h7M158 38.5h2M0 39.5h1M8 39.5h2M15 39.5h1M73 39.5h6M152 39.5h1M158 39.5h1M0 40.5h1M58 40.5h1M70 40.5h3M78 40.5h3M86 40.5h3M94 40.5h3M102 40.5h3M110 40.5h1M145 40.5h2M152 40.5h2M155 40.5h1M157 40.5h1M160 40.5h1M162 40.5h6M0 41.5h1M14 41.5h2M57 41.5h1M59 41.5h1M65 41.5h5M73 41.5h5M81 41.5h5M89 41.5h5M97 41.5h5M105 41.5h5M147 41.5h1M152 41.5h7M160 41.5h2M163 41.5h1M166 41.5h1M0 42.5h1M7 42.5h1M15 42.5h1M56 42.5h1M58 42.5h1M60 42.5h1M150 42.5h2M153 42.5h2M158 42.5h1M160 42.5h2M163 42.5h1M167 42.5h1M0 43.5h1M2 43.5h2M6 43.5h1M13 43.5h1M57 43.5h1M59 43.5h1M65 43.5h46M153 43.5h2M156 43.5h2M160 43.5h4M165 43.5h2M2 44.5h1M6 44.5h1M10 44.5h1M14 44.5h2M58 44.5h1M65 44.5h46M144 44.5h1M152 44.5h7M162 44.5h2M2 45.5h2M65 45.5h46M147 45.5h1M151 45.5h3M155 45.5h3M160 45.5h1M162 45.5h1M164 45.5h2M4 46.5h2M65 46.5h46M145 46.5h2M150 46.5h1M152 46.5h5M161 46.5h5M167 46.5h1M13 47.5h1M152 47.5h3M156 47.5h1M158 47.5h4M3 48.5h1M12 48.5h2M66 48.5h2M74 48.5h2M82 48.5h2M90 48.5h2M98 48.5h2M106 48.5h2M147 48.5h2M150 48.5h3M156 48.5h1M163 48.5h3M168 48.5h88M12 49.5h1M68 49.5h1M70 49.5h1M72 49.5h1M76 49.5h1M78 49.5h1M80 49.5h1M84 49.5h1M86 49.5h1M88 49.5h1M92 49.5h1M94 49.5h1M96 49.5h1M100 49.5h1M102 49.5h1M104 49.5h1M108 49.5h1M110 49.5h1M149 49.5h4M161 49.5h3M165 49.5h1M170 49.5h4M178 49.5h4M186 49.5h4M194 49.5h4M202 49.5h4M210 49.5h4M218 49.5h4M226 49.5h4M234 49.5h4M242 49.5h4M250 49.5h4M1 50.5h1M4 50.5h2M12 50.5h1M145 50.5h1M147 50.5h1M153 50.5h2M156 50.5h1M160 50.5h1M163 50.5h1M167 50.5h2M171 50.5h2M175 50.5h2M179 50.5h2M183 50.5h2M187 50.5h2M191 50.5h2M195 50.5h2M199 50.5h2M203 50.5h2M207 50.5h2M211 50.5h2M215 50.5h2M219 50.5h2M223 50.5h2M227 50.5h2M231 50.5h2M235 50.5h2M239 50.5h2M243 50.5h2M247 50.5h2M251 50.5h2M255 50.5h1M0 51.5h2M3 51.5h2M8 51.5h1M11 51.5h1M144 51.5h1M152 51.5h1M168 51.5h2M172 51.5h1M174 51.5h4M180 51.5h1M182 51.5h4M188 51.5h1M190 51.5h4M196 51.5h1M198 51.5h4M204 51.5h1M206 51.5h4M212 51.5h1M214 51.5h4M220 51.5h1M222 51.5h4M228 51.5h1M230 51.5h4M236 51.5h1M238 51.5h4M244 51.5h1M246 51.5h4M252 51.5h1M254 51.5h2M3 52.5h2M6 52.5h3M145 52.5h3M150 52.5h1M154 52.5h1M159 52.5h7M169 52.5h2M173 52.5h2M177 52.5h2M181 52.5h2M185 52.5h2M189 52.5h2M193 52.5h2M197 52.5h2M201 52.5h2M205 52.5h2M209 52.5h2M213 52.5h2M217 52.5h2M221 52.5h2M225 52.5h2M229 52.5h2M233 52.5h2M237 52.5h2M241 52.5h2M245 52.5h2M249 52.5h2M253 52.5h2M2 53.5h2M6 53.5h2M146 53.5h1M148 53.5h1M150 53.5h1M152 53.5h4M157 53.5h3M164 53.5h1M170 53.5h4M178 53.5h4M186 53.5h4M194 53.5h4M202 53.5h4M210 53.5h4M218 53.5h4M226 53.5h4M234 53.5h4M242 53.5h4M250 53.5h4M4 54.5h1M144 54.5h1M148 54.5h3M155 54.5h1M157 54.5h1M160 54.5h3M167 54.5h1M171 54.5h2M179 54.5h2M187 54.5h2M195 54.5h2M203 54.5h2M211 54.5h2M219 54.5h2M227 54.5h2M235 54.5h2M243 54.5h2M251 54.5h2M144 55.5h1M146 55.5h1M160 55.5h1M170 55.5h1M173 55.5h1M178 55.5h1M181 55.5h1M186 55.5h1M189 55.5h1M194 55.5h1M197 55.5h1M202 55.5h1M205 55.5h1M210 55.5h1M213 55.5h1M218 55.5h1M221 55.5h1M226 55.5h1M229 55.5h1M234 55.5h1M237 55.5h1M242 55.5h1M245 55.5h1M250 55.5h1M253 55.5h1M160 56.5h1M162 56.5h2M165 56.5h2M169 56.5h2M173 56.5h2M177 56.5h2M181 56.5h2M184 56.5h2M187 56.5h2M192 56.5h2M200 56.5h2M203 56.5h2M208 56.5h2M211 56.5h2M217 56.5h2M221 56.5h2M225 56.5h2M229 56.5h2M233 56.5h2M237 56.5h2M241 56.5h2M245 56.5h2M249 56.5h2M253 56.5h2M0 57.5h1M161 57.5h1M170 57.5h4M178 57.5h4M184 57.5h1M188 57.5h2M191 57.5h2M197 57.5h1M199 57.5h1M204 57.5h2M207 57.5h2M212 57.5h2M215 57.5h1M218 57.5h4M226 57.5h4M234 57.5h4M242 57.5h4M250 57.5h4M4 58.5h1M82 58.5h1M85 58.5h1M88 58.5h1M91 58.5h1M160 58.5h4M165 58.5h3M171 58.5h2M179 58.5h2M189 58.5h3M197 58.5h3M205 58.5h3M213 58.5h3M219 58.5h2M227 58.5h2M235 58.5h2M243 58.5h2M251 58.5h2M4 59.5h1M82 59.5h1M85 59.5h1M88 59.5h1M91 59.5h1M160 59.5h1M170 59.5h4M178 59.5h4M189 59.5h3M197 59.5h3M205 59.5h3M213 59.5h3M218 59.5h4M226 59.5h4M234 59.5h4M242 59.5h4M250 59.5h4M3 60.5h1M82 60.5h1M85 60.5h1M88 60.5h1M91 60.5h1M161 60.5h1M166 60.5h2M169 60.5h2M173 60.5h2M177 60.5h2M181 60.5h2M184 60.5h1M187 60.5h3M191 60.5h2M197 60.5h1M199 60.5h1M203 60.5h3M207 60.5h2M211 60.5h3M215 60.5h1M217 60.5h2M221 60.5h2M225 60.5h2M229 60.5h2M233 60.5h2M237 60.5h2M241 60.5h2M245 60.5h2M249 60.5h2M253 60.5h2M3 61.5h1M82 61.5h1M85 61.5h1M88 61.5h1M91 61.5h1M161 61.5h1M164 61.5h1M167 61.5h3M174 61.5h4M182 61.5h4M187 61.5h2M192 61.5h2M203 61.5h2M208 61.5h2M211 61.5h2M216 61.5h2M222 61.5h4M230 61.5h4M238 61.5h4M246 61.5h4M254 61.5h2M2 62.5h1M82 62.5h1M85 62.5h1M88 62.5h1M91 62.5h1M94 62.5h1M162 62.5h2M165 62.5h1M168 62.5h1M175 62.5h2M183 62.5h1M185 62.5h3M193 62.5h3M203 62.5h1M209 62.5h3M216 62.5h1M223 62.5h2M231 62.5h2M239 62.5h2M247 62.5h2M255 62.5h1M2 63.5h1M82 63.5h1M85 63.5h1M88 63.5h1M91 63.5h1M94 63.5h1M161 63.5h1M168 63.5h1M175 63.5h2M183 63.5h1M186 63.5h1M188 63.5h1M194 63.5h1M196 63.5h1M202 63.5h1M204 63.5h1M210 63.5h1M212 63.5h1M216 63.5h1M223 63.5h2M231 63.5h2M239 63.5h2M247 63.5h2M255 63.5h1M5 64.5h2M162 64.5h1M164 64.5h1M170 64.5h2M173 64.5h2M176 64.5h2M181 64.5h2M186 64.5h2M189 64.5h2M208 64.5h2M213 64.5h2M218 64.5h2M221 64.5h2M224 64.5h2M229 64.5h2M234 64.5h2M237 64.5h2M253 64.5h1M6 65.5h4M82 65.5h1M85 65.5h1M88 65.5h1M94 65.5h1M169 65.5h2M174 65.5h2M177 65.5h2M180 65.5h2M185 65.5h2M190 65.5h2M209 65.5h2M212 65.5h2M217 65.5h2M222 65.5h2M225 65.5h2M228 65.5h2M233 65.5h2M238 65.5h2M249 65.5h2M252 65.5h1M6 66.5h2M9 66.5h2M67 66.5h1M70 66.5h1M73 66.5h1M76 66.5h1M79 66.5h1M82 66.5h1M85 66.5h1M88 66.5h1M91 66.5h1M94 66.5h1M97 66.5h1M100 66.5h1M103 66.5h1M106 66.5h1M109 66.5h1M164 66.5h1M166 66.5h1M168 66.5h2M175 66.5h1M178 66.5h3M184 66.5h2M191 66.5h1M210 66.5h3M216 66.5h2M223 66.5h1M226 66.5h3M232 66.5h2M239 66.5h1M248 66.5h2M251 66.5h2M5 67.5h3M10 67.5h3M67 67.5h1M70 67.5h1M73 67.5h1M76 67.5h1M79 67.5h1M82 67.5h1M85 67.5h1M88 67.5h1M94 67.5h1M97 67.5h1M100 67.5h1M103 67.5h1M106 67.5h1M109 67.5h1M168 67.5h2M175 67.5h1M178 67.5h3M184 67.5h2M191 67.5h1M210 67.5h3M216 67.5h2M223 67.5h1M226 67.5h3M232 67.5h2M239 67.5h1M248 67.5h2M252 67.5h1M7 68.5h1M9 68.5h2M12 68.5h1M65 68.5h3M70 68.5h4M76 68.5h4M82 68.5h1M85 68.5h1M88 68.5h1M94 68.5h1M96 68.5h2M100 68.5h4M106 68.5h4M162 68.5h1M164 68.5h1M166 68.5h1M169 68.5h2M173 68.5h6M180 68.5h2M185 68.5h2M189 68.5h3M208 68.5h3M212 68.5h2M217 68.5h2M221 68.5h6M228 68.5h2M233 68.5h2M237 68.5h3M249 68.5h1M251 68.5h1M254 68.5h1M9 69.5h1M12 69.5h2M67 69.5h1M70 69.5h1M73 69.5h1M76 69.5h1M79 69.5h1M82 69.5h1M85 69.5h1M88 69.5h1M91 69.5h1M94 69.5h1M97 69.5h1M100 69.5h1M103 69.5h1M106 69.5h1M109 69.5h1M163 69.5h1M170 69.5h2M173 69.5h2M176 69.5h2M181 69.5h2M186 69.5h2M189 69.5h2M208 69.5h2M213 69.5h2M218 69.5h2M221 69.5h2M224 69.5h2M229 69.5h2M234 69.5h2M237 69.5h2M254 69.5h1M9 70.5h6M67 70.5h1M70 70.5h1M73 70.5h1M76 70.5h1M79 70.5h1M82 70.5h1M85 70.5h1M88 70.5h1M91 70.5h1M94 70.5h1M97 70.5h1M100 70.5h1M103 70.5h1M106 70.5h1M109 70.5h1M171 70.5h3M176 70.5h1M182 70.5h2M187 70.5h3M208 70.5h1M214 70.5h2M219 70.5h3M224 70.5h1M230 70.5h2M235 70.5h3M243 70.5h3M247 70.5h1M249 70.5h1M0 71.5h1M8 71.5h2M15 71.5h1M172 71.5h1M174 71.5h1M177 71.5h1M183 71.5h1M188 71.5h1M190 71.5h1M209 71.5h1M215 71.5h1M220 71.5h1M222 71.5h1M225 71.5h1M231 71.5h1M236 71.5h1M238 71.5h1M244 71.5h1M246 71.5h3M250 71.5h1M0 72.5h1M74 72.5h1M242 72.5h2M245 72.5h1M247 72.5h1M255 72.5h1M0 73.5h1M14 73.5h2M73 73.5h1M75 73.5h1M241 73.5h2M246 73.5h1M251 73.5h1M253 73.5h2M0 74.5h1M7 74.5h1M15 74.5h1M72 74.5h1M74 74.5h1M76 74.5h1M242 74.5h6M255 74.5h1M0 75.5h1M2 75.5h2M6 75.5h1M13 75.5h1M73 75.5h1M75 75.5h1M241 75.5h4M247 75.5h2M254 75.5h2M2 76.5h1M6 76.5h1M10 76.5h1M14 76.5h2M74 76.5h1M242 76.5h1M245 76.5h5M253 76.5h1M2 77.5h2M242 77.5h1M245 77.5h2M250 77.5h1M252 77.5h2M4 78.5h2M241 78.5h1M244 78.5h2M249 78.5h2M13 79.5h1M244 79.5h2M250 79.5h1M3 80.5h1M12 80.5h2M154 80.5h1M244 80.5h3M248 80.5h3M252 80.5h2M12 81.5h1M153 81.5h1M155 81.5h1M244 81.5h5M250 81.5h1M252 81.5h1M1 82.5h1M4 82.5h2M12 82.5h1M152 82.5h1M154 82.5h1M156 82.5h1M245 82.5h3M252 82.5h1M0 83.5h2M3 83.5h2M8 83.5h1M11 83.5h1M153 83.5h1M155 83.5h1M253 83.5h2M3 84.5h2M6 84.5h3M154 84.5h1M253 84.5h1M2 85.5h2M6 85.5h2M4 86.5h1M34 88.5h1M0 89.5h1M33 89.5h1M35 89.5h1M4 90.5h1M32 90.5h1M34 90.5h1M36 90.5h1M255 90.5h1M4 91.5h1M33 91.5h1M35 91.5h1M255 91.5h1M3 92.5h1M34 92.5h1M254 92.5h1M3 93.5h1M254 93.5h1M2 94.5h1M253 94.5h1M2 95.5h1M5 96.5h2M45 96.5h1M53 96.5h2M253 96.5h1M6 97.5h4M41 97.5h2M44 97.5h1M54 97.5h4M249 97.5h2M252 97.5h1M6 98.5h2M9 98.5h2M40 98.5h2M43 98.5h2M54 98.5h2M57 98.5h2M248 98.5h2M251 98.5h2M5 99.5h3M10 99.5h3M40 99.5h2M44 99.5h1M53 99.5h3M58 99.5h3M248 99.5h2M252 99.5h1M7 100.5h1M9 100.5h2M12 100.5h1M41 100.5h1M43 100.5h1M46 100.5h1M55 100.5h1M57 100.5h2M60 100.5h1M249 100.5h1M251 100.5h1M254 100.5h1M9 101.5h1M12 101.5h2M46 101.5h1M57 101.5h1M60 101.5h2M254 101.5h1M9 102.5h6M35 102.5h3M39 102.5h1M41 102.5h1M57 102.5h6M243 102.5h3M247 102.5h1M249 102.5h1M0 103.5h1M8 103.5h2M15 103.5h1M36 103.5h1M38 103.5h3M42 103.5h1M48 103.5h1M56 103.5h2M63 103.5h1M244 103.5h1M246 103.5h3M250 103.5h1M0 104.5h1M26 104.5h1M34 104.5h2M37 104.5h1M39 104.5h1M47 104.5h2M138 104.5h1M242 104.5h2M245 104.5h1M247 104.5h1M255 104.5h1M0 105.5h1M14 105.5h2M25 105.5h1M27 105.5h1M33 105.5h2M38 105.5h1M43 105.5h1M45 105.5h2M48 105.5h1M62 105.5h2M137 105.5h1M139 105.5h1M241 105.5h2M246 105.5h1M251 105.5h1M253 105.5h2M0 106.5h1M7 106.5h1M15 106.5h1M24 106.5h1M26 106.5h1M28 106.5h1M34 106.5h6M47 106.5h2M55 106.5h1M63 106.5h1M136 106.5h1M138 106.5h1M140 106.5h1M242 106.5h6M255 106.5h1M0 107.5h1M2 107.5h2M6 107.5h1M13 107.5h1M25 107.5h1M27 107.5h1M33 107.5h4M39 107.5h2M46 107.5h3M50 107.5h2M54 107.5h1M61 107.5h1M137 107.5h1M139 107.5h1M241 107.5h4M247 107.5h2M254 107.5h2M2 108.5h1M6 108.5h1M10 108.5h1M14 108.5h2M26 108.5h1M34 108.5h1M37 108.5h5M45 108.5h1M50 108.5h1M54 108.5h1M58 108.5h1M62 108.5h2M138 108.5h1M242 108.5h1M245 108.5h5M253 108.5h1M2 109.5h2M34 109.5h1M37 109.5h2M42 109.5h1M44 109.5h2M50 109.5h2M242 109.5h1M245 109.5h2M250 109.5h1M252 109.5h2M4 110.5h2M33 110.5h1M36 110.5h2M41 110.5h2M52 110.5h2M241 110.5h1M244 110.5h2M249 110.5h2M13 111.5h1M36 111.5h2M42 111.5h1M61 111.5h1M244 111.5h2M250 111.5h1M3 112.5h1M12 112.5h2M36 112.5h3M40 112.5h3M44 112.5h2M51 112.5h1M60 112.5h2M114 112.5h1M234 112.5h1M244 112.5h3M248 112.5h3M252 112.5h2M12 113.5h1M36 113.5h5M42 113.5h1M44 113.5h1M60 113.5h1M113 113.5h1M115 113.5h1M233 113.5h1M235 113.5h1M244 113.5h5M250 113.5h1M252 113.5h1M1 114.5h1M4 114.5h2M12 114.5h1M37 114.5h3M44 114.5h1M49 114.5h1M52 114.5h2M60 114.5h1M112 114.5h1M114 114.5h1M116 114.5h1M232 114.5h1M234 114.5h1M236 114.5h1M245 114.5h3M252 114.5h1M0 115.5h2M3 115.5h2M8 115.5h1M11 115.5h1M45 115.5h2M48 115.5h2M51 115.5h2M56 115.5h1M59 115.5h1M113 115.5h1M115 115.5h1M233 115.5h1M235 115.5h1M253 115.5h2M3 116.5h2M6 116.5h3M45 116.5h1M51 116.5h2M54 116.5h3M114 116.5h1M234 116.5h1M253 116.5h1M2 117.5h2M6 117.5h2M50 117.5h2M54 117.5h2M4 118.5h1M52 118.5h1M203 118.5h1M202 119.5h2M202 120.5h1M0 121.5h1M48 121.5h1M201 121.5h2M4 122.5h1M47 122.5h1M52 122.5h1M201 122.5h2M255 122.5h1M4 123.5h1M47 123.5h1M52 123.5h1M201 123.5h2M206 123.5h1M255 123.5h1M3 124.5h1M46 124.5h1M51 124.5h1M202 124.5h5M254 124.5h1M3 125.5h1M46 125.5h1M51 125.5h1M205 125.5h5M254 125.5h1M2 126.5h1M45 126.5h1M50 126.5h1M253 126.5h1M2 127.5h1M50 127.5h1M5 128.5h2M162 128.5h1M253 128.5h1M6 129.5h4M161 129.5h1M163 129.5h1M249 129.5h2M252 129.5h1M6 130.5h2M9 130.5h2M160 130.5h1M162 130.5h1M164 130.5h1M248 130.5h2M251 130.5h2M5 131.5h3M10 131.5h3M161 131.5h1M163 131.5h1M248 131.5h2M252 131.5h1M7 132.5h1M9 132.5h2M12 132.5h1M162 132.5h1M249 132.5h1M251 132.5h1M254 132.5h1M9 133.5h1M12 133.5h2M254 133.5h1M9 134.5h6M243 134.5h3M247 134.5h1M249 134.5h1M0 135.5h1M8 135.5h2M15 135.5h1M244 135.5h1M246 135.5h3M250 135.5h1M0 136.5h1M106 136.5h1M242 136.5h2M245 136.5h1M247 136.5h1M255 136.5h1M0 137.5h1M14 137.5h2M105 137.5h1M107 137.5h1M241 137.5h2M246 137.5h1M251 137.5h1M253 137.5h2M0 138.5h1M7 138.5h1M15 138.5h1M104 138.5h1M106 138.5h1M108 138.5h1M242 138.5h6M255 138.5h1M0 139.5h1M2 139.5h2M6 139.5h1M13 139.5h1M105 139.5h1M107 139.5h1M241 139.5h4M247 139.5h2M254 139.5h2M2 140.5h1M6 140.5h1M10 140.5h1M14 140.5h2M106 140.5h1M242 140.5h1M245 140.5h5M253 140.5h1M2 141.5h2M242 141.5h1M245 141.5h2M250 141.5h1M252 141.5h2M4 142.5h2M241 142.5h1M244 142.5h2M249 142.5h2M13 143.5h1M244 143.5h2M250 143.5h1M3 144.5h1M12 144.5h2M244 144.5h3M248 144.5h3M252 144.5h2M12 145.5h1M244 145.5h5M250 145.5h1M252 145.5h1M1 146.5h1M4 146.5h2M12 146.5h1M245 146.5h3M252 146.5h1M0 147.5h2M3 147.5h2M8 147.5h1M11 147.5h1M253 147.5h2M3 148.5h2M6 148.5h3M253 148.5h1M2 149.5h2M6 149.5h2M4 150.5h1M0 153.5h1M4 154.5h1M255 154.5h1M4 155.5h1M255 155.5h1M3 156.5h1M254 156.5h1M3 157.5h1M254 157.5h1M2 158.5h1M253 158.5h1M2 159.5h1M5 160.5h2M18 160.5h1M253 160.5h1M6 161.5h4M17 161.5h1M19 161.5h1M249 161.5h2M252 161.5h1M6 162.5h2M9 162.5h2M16 162.5h1M18 162.5h1M20 162.5h1M248 162.5h2M251 162.5h2M5 163.5h3M10 163.5h3M17 163.5h1M19 163.5h1M248 163.5h2M252 163.5h1M7 164.5h1M9 164.5h2M12 164.5h1M18 164.5h1M249 164.5h1M251 164.5h1M254 164.5h1M9 165.5h1M12 165.5h2M254 165.5h1M9 166.5h6M243 166.5h3M247 166.5h1M249 166.5h1M0 167.5h1M8 167.5h2M15 167.5h1M244 167.5h1M246 167.5h3M250 167.5h1M0 168.5h1M242 168.5h2M245 168.5h1M247 168.5h1M255 168.5h1M0 169.5h1M14 169.5h2M241 169.5h2M246 169.5h1M251 169.5h1M253 169.5h2M0 170.5h1M7 170.5h1M15 170.5h1M242 170.5h6M255 170.5h1M0 171.5h1M2 171.5h2M6 171.5h1M13 171.5h1M241 171.5h4M247 171.5h2M254 171.5h2M2 172.5h1M6 172.5h1M10 172.5h1M14 172.5h2M242 172.5h1M245 172.5h5M253 172.5h1M2 173.5h2M242 173.5h1M245 173.5h2M250 173.5h1M252 173.5h2M4 174.5h2M241 174.5h1M244 174.5h2M249 174.5h2M13 175.5h1M244 175.5h2M250 175.5h1M3 176.5h1M12 176.5h2M244 176.5h3M248 176.5h3M252 176.5h2M12 177.5h1M244 177.5h5M250 177.5h1M252 177.5h1M1 178.5h1M4 178.5h2M12 178.5h1M245 178.5h3M252 178.5h1M0 179.5h2M3 179.5h2M8 179.5h1M11 179.5h1M253 179.5h2M3 180.5h2M6 180.5h3M253 180.5h1M2 181.5h2M6 181.5h2M4 182.5h1M0 185.5h1M4 186.5h1M255 186.5h1M4 187.5h1M255 187.5h1M3 188.5h1M254 188.5h1M3 189.5h1M254 189.5h1M2 190.5h1M253 190.5h1M2 191.5h1M5 192.5h2M130 192.5h1M253 192.5h1M6 193.5h4M129 193.5h1M131 193.5h1M249 193.5h2M252 193.5h1M6 194.5h2M9 194.5h2M128 194.5h1M130 194.5h1M132 194.5h1M248 194.5h2M251 194.5h2M5 195.5h3M10 195.5h3M129 195.5h1M131 195.5h1M248 195.5h2M252 195.5h1M7 196.5h1M9 196.5h2M12 196.5h1M130 196.5h1M249 196.5h1M251 196.5h1M254 196.5h1M9 197.5h1M12 197.5h2M254 197.5h1M9 198.5h6M243 198.5h3M247 198.5h1M249 198.5h1M0 199.5h1M8 199.5h2M15 199.5h1M244 199.5h1M246 199.5h3M250 199.5h1M2 200.5h2M5 200.5h3M242 200.5h2M245 200.5h1M247 200.5h1M255 200.5h1M1 201.5h3M6 201.5h2M14 201.5h2M241 201.5h2M246 201.5h1M251 201.5h1M253 201.5h2M0 202.5h1M2 202.5h2M5 202.5h3M15 202.5h1M242 202.5h6M255 202.5h1M3 203.5h1M5 203.5h2M13 203.5h1M241 203.5h4M247 203.5h2M254 203.5h2M5 204.5h3M10 204.5h1M14 204.5h2M242 204.5h1M245 204.5h5M253 204.5h1M4 205.5h2M242 205.5h1M245 205.5h2M250 205.5h1M252 205.5h2M4 206.5h1M241 206.5h1M244 206.5h2M249 206.5h2M4 207.5h1M13 207.5h1M244 207.5h2M250 207.5h1M3 208.5h2M12 208.5h2M244 208.5h3M248 208.5h3M252 208.5h2M2 209.5h1M5 209.5h1M12 209.5h1M244 209.5h5M250 209.5h1M252 209.5h1M2 210.5h1M6 210.5h2M12 210.5h1M245 210.5h3M252 210.5h1M0 211.5h1M8 211.5h1M11 211.5h1M253 211.5h2M3 212.5h2M8 212.5h1M253 212.5h1M4 213.5h4M4 214.5h2M7 214.5h1M19 214.5h1M3 215.5h3M18 215.5h2M5 216.5h1M7 216.5h1M18 216.5h1M114 216.5h1M5 217.5h1M7 217.5h1M17 217.5h2M113 217.5h1M115 217.5h1M7 218.5h1M17 218.5h2M112 218.5h1M114 218.5h1M116 218.5h1M255 218.5h1M6 219.5h2M17 219.5h2M22 219.5h1M113 219.5h1M115 219.5h1M255 219.5h1M6 220.5h1M18 220.5h5M114 220.5h1M254 220.5h1M21 221.5h5M254 221.5h1M5 222.5h1M253 222.5h1M0 223.5h2M4 223.5h2M8 223.5h2M0 224.5h1M3 224.5h2M9 224.5h2M29 224.5h1M37 224.5h2M61 224.5h1M69 224.5h2M93 224.5h1M101 224.5h2M125 224.5h1M133 224.5h2M157 224.5h1M165 224.5h2M189 224.5h1M197 224.5h2M221 224.5h1M229 224.5h2M253 224.5h1M0 225.5h4M8 225.5h4M25 225.5h2M28 225.5h1M38 225.5h4M57 225.5h2M60 225.5h1M70 225.5h4M89 225.5h2M92 225.5h1M102 225.5h4M121 225.5h2M124 225.5h1M134 225.5h4M153 225.5h2M156 225.5h1M166 225.5h4M185 225.5h2M188 225.5h1M198 225.5h4M217 225.5h2M220 225.5h1M230 225.5h4M249 225.5h2M252 225.5h1M0 226.5h2M3 226.5h2M9 226.5h4M24 226.5h2M27 226.5h2M38 226.5h2M41 226.5h2M56 226.5h2M59 226.5h2M70 226.5h2M73 226.5h2M88 226.5h2M91 226.5h2M102 226.5h2M105 226.5h2M120 226.5h2M123 226.5h2M134 226.5h2M137 226.5h2M152 226.5h2M155 226.5h2M166 226.5h2M169 226.5h2M184 226.5h2M187 226.5h2M198 226.5h2M201 226.5h2M216 226.5h2M219 226.5h2M230 226.5h2M233 226.5h2M248 226.5h2M251 226.5h2M0 227.5h2M4 227.5h3M8 227.5h2M12 227.5h2M24 227.5h2M28 227.5h1M37 227.5h3M42 227.5h3M56 227.5h2M60 227.5h1M69 227.5h3M74 227.5h3M88 227.5h2M92 227.5h1M101 227.5h3M106 227.5h3M120 227.5h2M124 227.5h1M133 227.5h3M138 227.5h3M152 227.5h2M156 227.5h1M165 227.5h3M170 227.5h3M184 227.5h2M188 227.5h1M197 227.5h3M202 227.5h3M216 227.5h2M220 227.5h1M229 227.5h3M234 227.5h3M248 227.5h2M252 227.5h1M0 228.5h2M3 228.5h4M8 228.5h2M13 228.5h2M25 228.5h1M27 228.5h1M30 228.5h1M39 228.5h1M41 228.5h2M44 228.5h1M57 228.5h1M59 228.5h1M62 228.5h1M71 228.5h1M73 228.5h2M76 228.5h1M89 228.5h1M91 228.5h1M94 228.5h1M103 228.5h1M105 228.5h2M108 228.5h1M121 228.5h1M123 228.5h1M126 228.5h1M135 228.5h1M137 228.5h2M140 228.5h1M153 228.5h1M155 228.5h1M158 228.5h1M167 228.5h1M169 228.5h2M172 228.5h1M185 228.5h1M187 228.5h1M190 228.5h1M199 228.5h1M201 228.5h2M204 228.5h1M217 228.5h1M219 228.5h1M222 228.5h1M231 228.5h1M233 228.5h2M236 228.5h1M249 228.5h1M251 228.5h1M254 228.5h1M1 229.5h1M3 229.5h9M13 229.5h3M30 229.5h1M41 229.5h1M44 229.5h2M62 229.5h1M73 229.5h1M76 229.5h2M94 229.5h1M105 229.5h1M108 229.5h2M126 229.5h1M137 229.5h1M140 229.5h2M158 229.5h1M169 229.5h1M172 229.5h2M190 229.5h1M201 229.5h1M204 229.5h2M222 229.5h1M233 229.5h1M236 229.5h2M254 229.5h1M3 230.5h5M9 230.5h8M19 230.5h3M23 230.5h1M25 230.5h1M41 230.5h6M51 230.5h3M55 230.5h1M57 230.5h1M73 230.5h6M83 230.5h3M87 230.5h1M89 230.5h1M105 230.5h6M115 230.5h3M119 230.5h1M121 230.5h1M137 230.5h6M147 230.5h3M151 230.5h1M153 230.5h1M169 230.5h6M179 230.5h3M183 230.5h1M185 230.5h1M201 230.5h6M211 230.5h3M215 230.5h1M217 230.5h1M233 230.5h6M243 230.5h3M247 230.5h1M249 230.5h1M2 231.5h2M9 231.5h4M14 231.5h1M16 231.5h2M20 231.5h1M22 231.5h3M26 231.5h1M32 231.5h1M40 231.5h2M47 231.5h1M52 231.5h1M54 231.5h3M58 231.5h1M64 231.5h1M72 231.5h2M79 231.5h1M84 231.5h1M86 231.5h3M90 231.5h1M96 231.5h1M104 231.5h2M111 231.5h1M116 231.5h1M118 231.5h3M122 231.5h1M128 231.5h1M136 231.5h2M143 231.5h1M148 231.5h1M150 231.5h3M154 231.5h1M160 231.5h1M168 231.5h2M175 231.5h1M180 231.5h1M182 231.5h3M186 231.5h1M192 231.5h1M200 231.5h2M207 231.5h1M212 231.5h1M214 231.5h3M218 231.5h1M224 231.5h1M232 231.5h2M239 231.5h1M244 231.5h1M246 231.5h3M250 231.5h1M16 232.5h1M18 232.5h2M21 232.5h1M23 232.5h1M25 232.5h1M31 232.5h2M48 232.5h1M50 232.5h2M53 232.5h1M55 232.5h1M57 232.5h1M63 232.5h2M80 232.5h1M82 232.5h2M85 232.5h1M87 232.5h1M89 232.5h1M95 232.5h2M112 232.5h1M114 232.5h2M117 232.5h1M119 232.5h1M121 232.5h1M127 232.5h2M146 232.5h2M149 232.5h1M151 232.5h1M153 232.5h1M159 232.5h2M178 232.5h2M181 232.5h1M183 232.5h1M191 232.5h2M208 232.5h1M210 232.5h2M213 232.5h1M215 232.5h1M217 232.5h1M223 232.5h2M240 232.5h1M242 232.5h2M245 232.5h1M247 232.5h1M249 232.5h1M255 232.5h1M1 233.5h1M3 233.5h2M6 233.5h4M11 233.5h1M13 233.5h2M17 233.5h2M22 233.5h1M24 233.5h2M27 233.5h1M29 233.5h2M32 233.5h1M46 233.5h2M49 233.5h2M54 233.5h1M56 233.5h2M59 233.5h1M61 233.5h2M64 233.5h1M78 233.5h2M81 233.5h2M86 233.5h1M89 233.5h1M91 233.5h1M93 233.5h2M96 233.5h1M110 233.5h2M113 233.5h2M118 233.5h1M120 233.5h2M123 233.5h1M125 233.5h2M128 233.5h1M142 233.5h2M145 233.5h2M150 233.5h1M152 233.5h2M155 233.5h1M157 233.5h2M160 233.5h1M174 233.5h2M177 233.5h2M182 233.5h1M184 233.5h1M187 233.5h1M189 233.5h2M192 233.5h1M206 233.5h2M209 233.5h2M214 233.5h1M216 233.5h2M219 233.5h1M221 233.5h2M224 233.5h1M238 233.5h2M241 233.5h2M246 233.5h1M251 233.5h1M253 233.5h2M1 234.5h3M6 234.5h3M10 234.5h3M18 234.5h6M25 234.5h2M31 234.5h2M39 234.5h1M47 234.5h1M50 234.5h6M57 234.5h2M63 234.5h2M71 234.5h1M79 234.5h1M82 234.5h6M90 234.5h1M95 234.5h2M103 234.5h1M111 234.5h1M114 234.5h6M121 234.5h1M127 234.5h2M135 234.5h1M143 234.5h1M146 234.5h6M153 234.5h2M159 234.5h2M167 234.5h1M175 234.5h1M178 234.5h6M185 234.5h2M191 234.5h2M199 234.5h1M207 234.5h1M210 234.5h6M218 234.5h1M223 234.5h2M231 234.5h1M239 234.5h1M242 234.5h6M249 234.5h1M255 234.5h1M1 235.5h4M6 235.5h2M11 235.5h1M13 235.5h1M21 235.5h2M24 235.5h1M26 235.5h1M28 235.5h1M30 235.5h3M34 235.5h2M38 235.5h1M45 235.5h1M53 235.5h2M56 235.5h1M59 235.5h2M62 235.5h3M66 235.5h2M70 235.5h1M72 235.5h1M77 235.5h1M85 235.5h2M88 235.5h1M91 235.5h2M94 235.5h3M98 235.5h2M102 235.5h1M104 235.5h1M109 235.5h1M117 235.5h2M120 235.5h1M122 235.5h2M126 235.5h3M130 235.5h2M134 235.5h1M136 235.5h1M141 235.5h1M149 235.5h2M152 235.5h1M155 235.5h2M158 235.5h3M162 235.5h2M166 235.5h1M168 235.5h1M173 235.5h1M181 235.5h2M184 235.5h1M187 235.5h2M190 235.5h3M194 235.5h2M198 235.5h1M200 235.5h1M205 235.5h1M213 235.5h2M216 235.5h1M218 235.5h3M222 235.5h3M226 235.5h2M230 235.5h1M237 235.5h1M245 235.5h2M248 235.5h1M252 235.5h1M254 235.5h2M1 236.5h1M4 236.5h2M7 236.5h1M9 236.5h2M12 236.5h1M22 236.5h4M29 236.5h1M34 236.5h1M39 236.5h1M41 236.5h2M44 236.5h1M54 236.5h4M61 236.5h1M66 236.5h1M71 236.5h1M73 236.5h2M76 236.5h1M86 236.5h4M93 236.5h1M98 236.5h1M103 236.5h1M105 236.5h2M108 236.5h1M118 236.5h4M125 236.5h1M130 236.5h1M135 236.5h1M137 236.5h2M140 236.5h1M150 236.5h4M157 236.5h1M162 236.5h1M167 236.5h1M169 236.5h2M172 236.5h1M182 236.5h4M187 236.5h1M189 236.5h1M194 236.5h1M199 236.5h1M201 236.5h2M204 236.5h1M214 236.5h4M221 236.5h1M226 236.5h1M231 236.5h1M233 236.5h2M236 236.5h1M246 236.5h4M253 236.5h1M1 237.5h1M3 237.5h1M5 237.5h1M8 237.5h2M11 237.5h2M22 237.5h2M25 237.5h2M28 237.5h2M34 237.5h2M37 237.5h2M40 237.5h2M43 237.5h2M54 237.5h2M57 237.5h2M60 237.5h2M66 237.5h2M69 237.5h2M72 237.5h2M75 237.5h2M86 237.5h2M89 237.5h2M92 237.5h2M98 237.5h2M101 237.5h2M104 237.5h2M107 237.5h2M118 237.5h2M121 237.5h2M124 237.5h2M130 237.5h2M134 237.5h1M136 237.5h2M139 237.5h2M150 237.5h2M153 237.5h2M156 237.5h2M162 237.5h2M166 237.5h1M168 237.5h2M171 237.5h2M182 237.5h2M185 237.5h2M188 237.5h2M194 237.5h2M197 237.5h1M200 237.5h2M203 237.5h2M214 237.5h2M217 237.5h2M220 237.5h2M226 237.5h2M229 237.5h1M232 237.5h2M235 237.5h2M246 237.5h2M249 237.5h2M252 237.5h2M1 238.5h1M4 238.5h1M6 238.5h1M8 238.5h2M12 238.5h1M21 238.5h3M26 238.5h3M36 238.5h3M40 238.5h2M44 238.5h1M53 238.5h3M58 238.5h3M68 238.5h1M70 238.5h1M72 238.5h2M76 238.5h1M85 238.5h3M90 238.5h3M101 238.5h2M104 238.5h2M108 238.5h1M117 238.5h3M122 238.5h3M132 238.5h3M136 238.5h2M140 238.5h1M149 238.5h3M154 238.5h3M166 238.5h1M168 238.5h2M172 238.5h1M181 238.5h3M186 238.5h3M196 238.5h1M200 238.5h2M204 238.5h1M213 238.5h3M218 238.5h3M230 238.5h1M232 238.5h2M236 238.5h1M245 238.5h3M250 238.5h3M1 239.5h7M9 239.5h1M11 239.5h1M14 239.5h1M23 239.5h1M25 239.5h2M28 239.5h1M36 239.5h1M38 239.5h2M41 239.5h1M43 239.5h1M46 239.5h1M55 239.5h1M57 239.5h2M60 239.5h1M67 239.5h1M69 239.5h3M73 239.5h1M75 239.5h1M78 239.5h1M87 239.5h1M89 239.5h2M92 239.5h1M99 239.5h2M102 239.5h2M105 239.5h1M107 239.5h1M110 239.5h1M119 239.5h1M121 239.5h2M124 239.5h1M134 239.5h2M137 239.5h1M139 239.5h1M142 239.5h1M151 239.5h1M153 239.5h2M156 239.5h1M163 239.5h1M165 239.5h2M169 239.5h1M171 239.5h1M174 239.5h1M183 239.5h1M185 239.5h2M188 239.5h1M195 239.5h5M201 239.5h1M203 239.5h1M206 239.5h1M215 239.5h1M217 239.5h2M220 239.5h1M227 239.5h1M229 239.5h3M233 239.5h1M235 239.5h1M238 239.5h1M247 239.5h1M249 239.5h2M252 239.5h1M1 240.5h2M6 240.5h1M8 240.5h1M14 240.5h1M25 240.5h1M28 240.5h2M34 240.5h1M40 240.5h1M46 240.5h1M57 240.5h1M60 240.5h2M66 240.5h1M72 240.5h1M78 240.5h1M89 240.5h1M92 240.5h2M98 240.5h1M102 240.5h1M104 240.5h1M110 240.5h1M121 240.5h1M124 240.5h2M130 240.5h1M134 240.5h1M136 240.5h1M142 240.5h1M153 240.5h1M156 240.5h2M162 240.5h1M174 240.5h1M185 240.5h1M188 240.5h2M198 240.5h1M200 240.5h1M206 240.5h1M217 240.5h1M220 240.5h2M226 240.5h1M232 240.5h1M238 240.5h1M249 240.5h1M252 240.5h2M3 241.5h3M7 241.5h1M9 241.5h1M25 241.5h6M35 241.5h3M39 241.5h1M41 241.5h1M57 241.5h6M67 241.5h3M71 241.5h1M73 241.5h1M89 241.5h6M99 241.5h3M103 241.5h1M105 241.5h1M121 241.5h6M131 241.5h3M135 241.5h1M137 241.5h1M153 241.5h6M163 241.5h3M167 241.5h1M169 241.5h1M185 241.5h6M195 241.5h3M199 241.5h1M201 241.5h1M217 241.5h6M227 241.5h3M231 241.5h1M233 241.5h1M249 241.5h6M1 242.5h1M4 242.5h1M6 242.5h3M10 242.5h1M16 242.5h1M24 242.5h2M31 242.5h1M33 242.5h1M36 242.5h1M38 242.5h3M42 242.5h1M48 242.5h1M56 242.5h2M63 242.5h1M65 242.5h1M68 242.5h1M70 242.5h3M74 242.5h1M80 242.5h1M88 242.5h2M95 242.5h1M97 242.5h1M100 242.5h1M102 242.5h3M106 242.5h1M112 242.5h1M120 242.5h2M127 242.5h1M129 242.5h1M132 242.5h1M134 242.5h3M138 242.5h1M144 242.5h1M152 242.5h2M159 242.5h1M161 242.5h1M164 242.5h1M166 242.5h3M170 242.5h1M176 242.5h1M184 242.5h2M191 242.5h1M196 242.5h1M198 242.5h3M202 242.5h1M208 242.5h1M216 242.5h2M223 242.5h1M228 242.5h1M230 242.5h3M234 242.5h1M240 242.5h1M248 242.5h2M255 242.5h1M2 243.5h2M5 243.5h1M7 243.5h1M15 243.5h2M32 243.5h1M34 243.5h2M37 243.5h1M39 243.5h1M41 243.5h1M47 243.5h2M64 243.5h1M66 243.5h2M69 243.5h1M71 243.5h1M79 243.5h2M96 243.5h1M98 243.5h2M101 243.5h1M103 243.5h1M111 243.5h2M130 243.5h2M133 243.5h1M135 243.5h1M137 243.5h1M143 243.5h2M160 243.5h1M162 243.5h2M165 243.5h1M167 243.5h1M169 243.5h1M175 243.5h2M192 243.5h1M194 243.5h2M197 243.5h1M199 243.5h1M207 243.5h2M226 243.5h2M229 243.5h1M231 243.5h1M233 243.5h1M239 243.5h2M1 244.5h2M6 244.5h1M8 244.5h2M11 244.5h1M13 244.5h2M16 244.5h1M30 244.5h2M33 244.5h2M38 244.5h1M40 244.5h2M43 244.5h1M45 244.5h2M48 244.5h1M62 244.5h2M65 244.5h2M70 244.5h1M72 244.5h1M75 244.5h1M77 244.5h2M80 244.5h1M94 244.5h2M97 244.5h2M102 244.5h1M104 244.5h1M107 244.5h1M109 244.5h2M112 244.5h1M126 244.5h2M129 244.5h2M134 244.5h1M136 244.5h2M139 244.5h1M141 244.5h2M144 244.5h1M158 244.5h2M161 244.5h2M166 244.5h1M168 244.5h2M171 244.5h1M173 244.5h2M176 244.5h1M190 244.5h2M193 244.5h2M198 244.5h1M201 244.5h1M203 244.5h1M205 244.5h2M208 244.5h1M222 244.5h2M225 244.5h2M230 244.5h1M232 244.5h2M235 244.5h1M237 244.5h2M240 244.5h1M254 244.5h2M2 245.5h6M9 245.5h2M15 245.5h2M23 245.5h1M31 245.5h1M34 245.5h6M41 245.5h2M47 245.5h2M55 245.5h1M63 245.5h1M66 245.5h6M79 245.5h2M87 245.5h1M95 245.5h1M98 245.5h6M105 245.5h2M111 245.5h2M119 245.5h1M127 245.5h1M130 245.5h6M137 245.5h1M143 245.5h2M151 245.5h1M159 245.5h1M162 245.5h6M170 245.5h1M175 245.5h2M183 245.5h1M191 245.5h1M194 245.5h6M201 245.5h1M207 245.5h2M215 245.5h1M223 245.5h1M226 245.5h6M233 245.5h1M239 245.5h2M247 245.5h1M255 245.5h1M5 246.5h2M8 246.5h1M11 246.5h1M14 246.5h3M18 246.5h2M22 246.5h1M24 246.5h1M29 246.5h1M37 246.5h2M40 246.5h1M42 246.5h3M46 246.5h3M50 246.5h2M54 246.5h1M61 246.5h1M69 246.5h2M72 246.5h1M74 246.5h1M76 246.5h1M78 246.5h3M82 246.5h2M86 246.5h1M93 246.5h1M101 246.5h2M104 246.5h1M106 246.5h3M110 246.5h3M114 246.5h2M118 246.5h1M125 246.5h1M133 246.5h2M136 246.5h1M139 246.5h2M142 246.5h3M146 246.5h2M150 246.5h1M157 246.5h1M165 246.5h2M168 246.5h1M170 246.5h1M172 246.5h1M174 246.5h3M178 246.5h2M182 246.5h1M184 246.5h1M189 246.5h1M197 246.5h2M200 246.5h1M203 246.5h1M206 246.5h3M210 246.5h2M214 246.5h1M221 246.5h1M229 246.5h2M232 246.5h1M234 246.5h1M236 246.5h1M238 246.5h3M242 246.5h2M246 246.5h1M248 246.5h1M253 246.5h1M6 247.5h4M11 247.5h1M13 247.5h1M18 247.5h1M23 247.5h1M25 247.5h2M28 247.5h1M38 247.5h4M43 247.5h1M45 247.5h1M50 247.5h1M55 247.5h1M57 247.5h2M60 247.5h1M70 247.5h4M77 247.5h1M82 247.5h1M89 247.5h2M92 247.5h1M102 247.5h4M107 247.5h1M109 247.5h1M114 247.5h1M119 247.5h1M121 247.5h2M124 247.5h1M134 247.5h4M141 247.5h1M146 247.5h1M153 247.5h2M156 247.5h1M166 247.5h4M171 247.5h1M173 247.5h1M178 247.5h1M183 247.5h1M185 247.5h2M188 247.5h1M198 247.5h4M203 247.5h1M205 247.5h1M210 247.5h1M217 247.5h2M220 247.5h1M230 247.5h4M235 247.5h1M237 247.5h1M242 247.5h1M247 247.5h1M249 247.5h2M252 247.5h1M6 248.5h2M9 248.5h2M12 248.5h2M18 248.5h2M21 248.5h2M24 248.5h2M27 248.5h2M38 248.5h2M41 248.5h2M44 248.5h2M50 248.5h2M53 248.5h2M56 248.5h2M59 248.5h2M70 248.5h2M73 248.5h2M76 248.5h2M82 248.5h2M88 248.5h2M91 248.5h2M102 248.5h2M105 248.5h2M108 248.5h2M114 248.5h2M118 248.5h1M120 248.5h2M123 248.5h2M134 248.5h2M137 248.5h2M140 248.5h2M146 248.5h2M149 248.5h2M152 248.5h2M155 248.5h2M166 248.5h2M169 248.5h2M172 248.5h2M178 248.5h2M181 248.5h2M184 248.5h2M187 248.5h2M198 248.5h2M201 248.5h2M204 248.5h2M210 248.5h2M216 248.5h2M219 248.5h2M230 248.5h2M233 248.5h2M236 248.5h2M242 248.5h2M248 248.5h2M251 248.5h2M5 249.5h3M10 249.5h3M22 249.5h1M24 249.5h2M28 249.5h1M37 249.5h3M42 249.5h3M52 249.5h2M56 249.5h2M60 249.5h1M69 249.5h3M74 249.5h3M86 249.5h1M88 249.5h2M92 249.5h1M101 249.5h3M106 249.5h3M117 249.5h2M120 249.5h2M124 249.5h1M133 249.5h3M138 249.5h3M152 249.5h2M156 249.5h1M165 249.5h3M170 249.5h3M180 249.5h3M184 249.5h2M188 249.5h1M197 249.5h3M202 249.5h3M212 249.5h1M214 249.5h1M216 249.5h2M220 249.5h1M229 249.5h3M234 249.5h3M244 249.5h3M248 249.5h2M252 249.5h1M7 250.5h1M9 250.5h2M12 250.5h1M20 250.5h2M23 250.5h1M25 250.5h1M27 250.5h1M30 250.5h1M39 250.5h1M41 250.5h2M44 250.5h1M53 250.5h3M57 250.5h1M59 250.5h1M62 250.5h1M71 250.5h1M73 250.5h2M76 250.5h1M83 250.5h2M87 250.5h1M89 250.5h1M91 250.5h1M94 250.5h1M103 250.5h1M105 250.5h2M108 250.5h1M115 250.5h3M119 250.5h1M121 250.5h1M123 250.5h1M126 250.5h1M135 250.5h1M137 250.5h2M140 250.5h1M149 250.5h1M151 250.5h1M153 250.5h1M155 250.5h1M158 250.5h1M167 250.5h1M169 250.5h2M172 250.5h1M180 250.5h4M185 250.5h1M187 250.5h1M190 250.5h1M199 250.5h1M201 250.5h2M204 250.5h1M211 250.5h5M217 250.5h1M219 250.5h1M222 250.5h1M231 250.5h1M233 250.5h2M236 250.5h1M243 250.5h3M247 250.5h1M249 250.5h1M251 250.5h1M254 250.5h1M9 251.5h1M12 251.5h2M18 251.5h1M22 251.5h1M24 251.5h1M30 251.5h1M41 251.5h1M44 251.5h2M50 251.5h1M56 251.5h1M62 251.5h1M73 251.5h1M76 251.5h2M82 251.5h1M86 251.5h1M88 251.5h1M94 251.5h1M105 251.5h1M108 251.5h2M114 251.5h1M118 251.5h1M120 251.5h1M126 251.5h1M137 251.5h1M140 251.5h2M146 251.5h1M152 251.5h1M158 251.5h1M169 251.5h1M172 251.5h2M178 251.5h1M182 251.5h1M190 251.5h1M201 251.5h1M204 251.5h2M210 251.5h1M214 251.5h1M216 251.5h1M222 251.5h1M233 251.5h1M236 251.5h2M242 251.5h1M246 251.5h1M248 251.5h1M254 251.5h1M9 252.5h6M19 252.5h3M23 252.5h1M25 252.5h1M41 252.5h6M51 252.5h3M55 252.5h1M57 252.5h1M73 252.5h6M83 252.5h3M87 252.5h1M89 252.5h1M105 252.5h6M115 252.5h3M119 252.5h1M121 252.5h1M137 252.5h6M147 252.5h3M151 252.5h1M153 252.5h1M169 252.5h6M179 252.5h3M183 252.5h1M185 252.5h1M201 252.5h6M211 252.5h3M215 252.5h1M217 252.5h1M233 252.5h6M243 252.5h3M247 252.5h1M249 252.5h1M0 253.5h1M8 253.5h2M15 253.5h1M17 253.5h1M20 253.5h1M22 253.5h3M26 253.5h1M32 253.5h1M40 253.5h2M47 253.5h1M49 253.5h1M52 253.5h1M54 253.5h3M58 253.5h1M64 253.5h1M72 253.5h2M79 253.5h1M84 253.5h1M86 253.5h3M90 253.5h1M96 253.5h1M104 253.5h2M111 253.5h1M116 253.5h1M118 253.5h3M122 253.5h1M128 253.5h1M136 253.5h2M143 253.5h1M145 253.5h1M148 253.5h1M150 253.5h3M154 253.5h1M160 253.5h1M168 253.5h2M175 253.5h1M177 253.5h1M180 253.5h1M182 253.5h3M186 253.5h1M192 253.5h1M200 253.5h2M207 253.5h1M209 253.5h1M212 253.5h1M214 253.5h3M218 253.5h1M224 253.5h1M232 253.5h2M239 253.5h1M241 253.5h1M244 253.5h1M246 253.5h3M250 253.5h1M0 254.5h1M16 254.5h1M18 254.5h2M21 254.5h1M23 254.5h1M25 254.5h1M31 254.5h2M50 254.5h2M53 254.5h1M55 254.5h1M63 254.5h2M82 254.5h2M85 254.5h1M87 254.5h1M89 254.5h1M95 254.5h2M112 254.5h1M114 254.5h2M117 254.5h1M119 254.5h1M127 254.5h2M144 254.5h1M146 254.5h2M149 254.5h1M151 254.5h1M153 254.5h1M159 254.5h2M176 254.5h1M178 254.5h2M181 254.5h1M183 254.5h1M191 254.5h2M208 254.5h1M210 254.5h2M213 254.5h1M215 254.5h1M217 254.5h1M223 254.5h2M240 254.5h1M242 254.5h2M245 254.5h1M247 254.5h1M249 254.5h1M255 254.5h1M0 255.5h1M14 255.5h2M17 255.5h2M22 255.5h1M25 255.5h1M27 255.5h1M29 255.5h2M32 255.5h1M46 255.5h2M49 255.5h2M54 255.5h1M57 255.5h1M59 255.5h1M61 255.5h2M64 255.5h1M78 255.5h2M81 255.5h2M86 255.5h1M88 255.5h2M91 255.5h1M93 255.5h2M96 255.5h1M110 255.5h2M113 255.5h2M118 255.5h1M120 255.5h1M123 255.5h1M125 255.5h2M128 255.5h1M142 255.5h2M145 255.5h2M150 255.5h1M152 255.5h2M155 255.5h1M157 255.5h2M160 255.5h1M174 255.5h2M177 255.5h2M182 255.5h1M184 255.5h2M187 255.5h1M189 255.5h2M192 255.5h1M206 255.5h2M209 255.5h2M214 255.5h1M216 255.5h2M219 255.5h1M221 255.5h2M224 255.5h1M238 255.5h2M241 255.5h2M246 255.5h1M251 255.5h1M253 255.5h2"/><path stroke="#0a1820" d="M7 0.5h1M16 0.5h2M19 0.5h1M24 0.5h5M39 0.5h1M48 0.5h2M51 0.5h1M56 0.5h5M71 0.5h1M80 0.5h2M83 0.5h1M88 0.5h5M103 0.5h1M112 0.5h2M115 0.5h1M120 0.5h5M135 0.5h1M147 0.5h1M150 0.5h2M19 1.5h1M22 1.5h3M27 1.5h1M51 1.5h1M54 1.5h3M59 1.5h1M83 1.5h1M86 1.5h3M91 1.5h1M115 1.5h1M118 1.5h3M123 1.5h1M147 1.5h1M150 1.5h1M16 2.5h1M18 2.5h1M20 2.5h4M48 2.5h1M50 2.5h1M52 2.5h4M80 2.5h1M82 2.5h1M84 2.5h4M112 2.5h1M114 2.5h1M116 2.5h4M144 2.5h1M149 2.5h1M151 2.5h1M19 3.5h5M51 3.5h5M83 3.5h5M115 3.5h5M144 3.5h8M4 4.5h1M6 4.5h1M11 4.5h1M13 4.5h1M18 4.5h7M26 4.5h1M28 4.5h2M36 4.5h1M38 4.5h1M43 4.5h1M45 4.5h1M50 4.5h7M58 4.5h1M60 4.5h2M68 4.5h1M70 4.5h1M75 4.5h1M77 4.5h1M82 4.5h7M90 4.5h1M92 4.5h2M100 4.5h1M102 4.5h1M107 4.5h1M109 4.5h1M114 4.5h7M122 4.5h1M124 4.5h2M132 4.5h1M134 4.5h1M139 4.5h1M141 4.5h1M147 4.5h5M7 5.5h1M10 5.5h2M14 5.5h1M17 5.5h10M39 5.5h1M42 5.5h2M46 5.5h1M49 5.5h10M71 5.5h1M74 5.5h2M78 5.5h1M81 5.5h10M103 5.5h1M106 5.5h2M110 5.5h1M113 5.5h10M135 5.5h1M138 5.5h2M142 5.5h1M145 5.5h2M149 5.5h3M1 6.5h1M17 6.5h2M22 6.5h1M24 6.5h1M26 6.5h1M31 6.5h1M33 6.5h1M49 6.5h2M54 6.5h1M56 6.5h1M58 6.5h1M63 6.5h1M65 6.5h1M81 6.5h2M86 6.5h1M88 6.5h1M90 6.5h1M95 6.5h1M97 6.5h1M113 6.5h2M118 6.5h1M120 6.5h1M122 6.5h1M127 6.5h1M129 6.5h1M149 6.5h2M16 7.5h4M25 7.5h1M31 7.5h1M48 7.5h4M57 7.5h1M63 7.5h1M80 7.5h4M89 7.5h1M95 7.5h1M112 7.5h4M121 7.5h1M127 7.5h1M144 7.5h8M8 8.5h1M15 8.5h3M20 8.5h1M24 8.5h3M40 8.5h1M47 8.5h3M52 8.5h1M56 8.5h3M72 8.5h1M79 8.5h3M84 8.5h1M88 8.5h3M104 8.5h1M111 8.5h3M116 8.5h1M120 8.5h3M136 8.5h1M143 8.5h1M145 8.5h1M8 9.5h1M16 9.5h1M19 9.5h1M23 9.5h4M31 9.5h1M40 9.5h1M48 9.5h1M51 9.5h1M55 9.5h4M63 9.5h1M72 9.5h1M80 9.5h1M83 9.5h1M87 9.5h4M95 9.5h1M104 9.5h1M112 9.5h1M115 9.5h1M119 9.5h4M127 9.5h1M136 9.5h1M144 9.5h1M147 9.5h3M151 9.5h1M8 10.5h1M16 10.5h2M24 10.5h7M40 10.5h1M48 10.5h2M56 10.5h7M72 10.5h1M80 10.5h2M88 10.5h7M104 10.5h1M112 10.5h2M120 10.5h7M136 10.5h1M147 10.5h5M1 11.5h1M7 11.5h1M9 11.5h1M14 11.5h3M21 11.5h2M25 11.5h5M33 11.5h1M39 11.5h1M41 11.5h1M46 11.5h3M53 11.5h2M57 11.5h5M65 11.5h1M71 11.5h1M73 11.5h1M78 11.5h3M85 11.5h2M89 11.5h5M97 11.5h1M103 11.5h1M105 11.5h1M110 11.5h3M117 11.5h2M121 11.5h5M129 11.5h1M135 11.5h1M137 11.5h1M142 11.5h10M3 12.5h1M5 12.5h1M11 12.5h1M13 12.5h1M16 12.5h2M20 12.5h1M26 12.5h3M35 12.5h1M37 12.5h1M43 12.5h1M45 12.5h1M48 12.5h2M52 12.5h1M58 12.5h3M67 12.5h1M69 12.5h1M75 12.5h1M77 12.5h1M80 12.5h2M84 12.5h1M90 12.5h3M99 12.5h1M101 12.5h1M107 12.5h1M109 12.5h1M112 12.5h2M116 12.5h1M122 12.5h3M131 12.5h1M133 12.5h1M139 12.5h1M141 12.5h1M144 12.5h1M150 12.5h2M4 13.5h1M12 13.5h1M15 13.5h3M19 13.5h2M25 13.5h1M27 13.5h1M36 13.5h1M44 13.5h1M47 13.5h3M51 13.5h2M57 13.5h1M59 13.5h1M68 13.5h1M76 13.5h1M79 13.5h3M83 13.5h2M89 13.5h1M91 13.5h1M100 13.5h1M108 13.5h1M111 13.5h3M115 13.5h2M121 13.5h1M123 13.5h1M132 13.5h1M140 13.5h1M143 13.5h2M147 13.5h1M151 13.5h1M15 14.5h2M18 14.5h2M27 14.5h1M47 14.5h2M50 14.5h2M59 14.5h1M79 14.5h2M82 14.5h2M91 14.5h1M111 14.5h2M114 14.5h2M123 14.5h1M143 14.5h1M146 14.5h1M148 14.5h4M12 15.5h1M15 15.5h5M25 15.5h1M27 15.5h1M44 15.5h1M47 15.5h5M57 15.5h1M59 15.5h1M76 15.5h1M79 15.5h5M89 15.5h1M91 15.5h1M108 15.5h1M111 15.5h5M121 15.5h1M123 15.5h1M140 15.5h1M143 15.5h9M4 16.5h1M14 16.5h1M17 16.5h3M27 16.5h1M36 16.5h1M46 16.5h1M49 16.5h3M59 16.5h1M68 16.5h1M78 16.5h1M81 16.5h3M91 16.5h1M100 16.5h1M110 16.5h1M113 16.5h3M123 16.5h1M132 16.5h1M142 16.5h1M147 16.5h2M150 16.5h1M3 17.5h2M13 17.5h2M17 17.5h3M25 17.5h1M27 17.5h1M29 17.5h1M35 17.5h2M45 17.5h2M49 17.5h3M57 17.5h1M59 17.5h1M61 17.5h1M67 17.5h2M77 17.5h2M81 17.5h3M89 17.5h1M91 17.5h1M93 17.5h1M99 17.5h2M109 17.5h2M113 17.5h3M121 17.5h1M123 17.5h1M125 17.5h1M131 17.5h2M141 17.5h2M149 17.5h2M2 18.5h2M13 18.5h1M18 18.5h3M24 18.5h4M29 18.5h1M34 18.5h2M45 18.5h1M50 18.5h3M56 18.5h4M61 18.5h1M66 18.5h2M77 18.5h1M82 18.5h3M88 18.5h4M93 18.5h1M98 18.5h2M109 18.5h1M114 18.5h3M120 18.5h4M125 18.5h1M130 18.5h2M141 18.5h1M146 18.5h1M151 18.5h1M2 19.5h1M7 19.5h1M12 19.5h1M19 19.5h9M31 19.5h1M34 19.5h1M39 19.5h1M44 19.5h1M51 19.5h9M63 19.5h1M66 19.5h1M71 19.5h1M76 19.5h1M83 19.5h9M95 19.5h1M98 19.5h1M103 19.5h1M108 19.5h1M115 19.5h9M127 19.5h1M130 19.5h1M135 19.5h1M140 19.5h1M144 19.5h8M166 19.5h2M0 20.5h3M9 20.5h3M20 20.5h9M30 20.5h5M41 20.5h3M52 20.5h9M62 20.5h5M73 20.5h3M84 20.5h9M94 20.5h5M105 20.5h3M116 20.5h9M126 20.5h5M137 20.5h3M146 20.5h3M165 20.5h1M168 20.5h3M0 21.5h2M8 21.5h2M22 21.5h12M40 21.5h2M54 21.5h12M72 21.5h2M86 21.5h12M104 21.5h2M118 21.5h12M136 21.5h2M148 21.5h2M151 21.5h1M163 21.5h2M171 21.5h1M0 22.5h4M5 22.5h3M24 22.5h12M37 22.5h3M56 22.5h12M69 22.5h3M88 22.5h12M101 22.5h3M120 22.5h12M133 22.5h3M146 22.5h1M148 22.5h1M162 22.5h1M172 22.5h1M0 23.5h5M27 23.5h10M59 23.5h10M91 23.5h10M123 23.5h10M144 23.5h8M161 23.5h1M173 23.5h1M0 24.5h5M27 24.5h10M59 24.5h10M91 24.5h10M123 24.5h10M145 24.5h1M147 24.5h1M149 24.5h1M151 24.5h1M161 24.5h1M173 24.5h1M2 25.5h1M4 25.5h1M27 25.5h1M29 25.5h1M34 25.5h1M36 25.5h1M59 25.5h1M61 25.5h1M66 25.5h1M68 25.5h1M91 25.5h1M93 25.5h1M98 25.5h1M100 25.5h1M123 25.5h1M125 25.5h1M130 25.5h1M132 25.5h1M145 25.5h1M149 25.5h2M160 25.5h1M174 25.5h1M1 26.5h1M5 26.5h1M28 26.5h1M33 26.5h1M37 26.5h1M60 26.5h1M65 26.5h1M69 26.5h1M92 26.5h1M97 26.5h1M101 26.5h1M124 26.5h1M129 26.5h1M133 26.5h1M148 26.5h1M151 26.5h1M160 26.5h1M175 26.5h1M1 27.5h1M5 27.5h1M28 27.5h1M33 27.5h1M37 27.5h1M60 27.5h1M65 27.5h1M69 27.5h1M92 27.5h1M97 27.5h1M101 27.5h1M124 27.5h1M129 27.5h1M133 27.5h1M144 27.5h8M160 27.5h1M175 27.5h1M0 28.5h1M6 28.5h1M25 28.5h1M27 28.5h1M32 28.5h1M38 28.5h1M57 28.5h1M59 28.5h1M64 28.5h1M70 28.5h1M89 28.5h1M91 28.5h1M96 28.5h1M102 28.5h1M121 28.5h1M123 28.5h1M128 28.5h1M134 28.5h1M147 28.5h2M150 28.5h2M161 28.5h1M174 28.5h2M0 29.5h1M25 29.5h1M27 29.5h1M32 29.5h1M57 29.5h1M59 29.5h1M64 29.5h1M89 29.5h1M91 29.5h1M96 29.5h1M121 29.5h1M123 29.5h1M128 29.5h1M144 29.5h1M150 29.5h1M162 29.5h3M172 29.5h2M0 30.5h2M4 30.5h1M7 30.5h1M24 30.5h1M26 30.5h2M31 30.5h3M36 30.5h1M39 30.5h1M56 30.5h1M58 30.5h2M63 30.5h3M68 30.5h1M71 30.5h1M88 30.5h1M90 30.5h2M95 30.5h3M100 30.5h1M103 30.5h1M120 30.5h1M122 30.5h2M127 30.5h3M132 30.5h1M135 30.5h1M149 30.5h2M169 30.5h3M4 31.5h1M7 31.5h1M24 31.5h1M26 31.5h1M29 31.5h3M36 31.5h1M39 31.5h1M56 31.5h1M58 31.5h1M61 31.5h3M68 31.5h1M71 31.5h1M88 31.5h1M90 31.5h1M93 31.5h3M100 31.5h1M103 31.5h1M120 31.5h1M122 31.5h1M125 31.5h3M132 31.5h1M135 31.5h1M144 31.5h8M7 32.5h1M64 32.5h48M147 32.5h2M150 32.5h1M155 32.5h1M64 33.5h9M79 33.5h33M145 33.5h3M149 33.5h1M154 33.5h3M158 33.5h2M64 34.5h9M74 34.5h4M79 34.5h33M147 34.5h1M155 34.5h2M158 34.5h1M64 35.5h9M74 35.5h4M79 35.5h33M144 35.5h8M154 35.5h1M157 35.5h1M4 36.5h1M6 36.5h1M11 36.5h1M13 36.5h1M64 36.5h9M79 36.5h33M146 36.5h2M151 36.5h1M155 36.5h1M158 36.5h1M7 37.5h1M10 37.5h2M14 37.5h1M64 37.5h9M79 37.5h33M147 37.5h1M149 37.5h3M154 37.5h1M1 38.5h1M64 38.5h9M79 38.5h33M146 38.5h1M148 38.5h2M157 38.5h1M64 39.5h9M79 39.5h33M144 39.5h8M155 39.5h3M159 39.5h1M8 40.5h1M15 40.5h1M64 40.5h6M73 40.5h5M81 40.5h5M89 40.5h5M97 40.5h5M105 40.5h5M111 40.5h1M147 40.5h5M156 40.5h1M158 40.5h2M8 41.5h1M64 41.5h1M70 41.5h3M78 41.5h3M86 41.5h3M94 41.5h3M102 41.5h3M110 41.5h2M146 41.5h1M149 41.5h3M159 41.5h1M162 41.5h1M164 41.5h2M167 41.5h1M8 42.5h1M64 42.5h48M144 42.5h2M147 42.5h3M155 42.5h2M159 42.5h1M162 42.5h1M164 42.5h3M1 43.5h1M7 43.5h1M9 43.5h1M14 43.5h2M64 43.5h1M111 43.5h1M144 43.5h8M155 43.5h1M158 43.5h2M164 43.5h1M167 43.5h1M3 44.5h1M5 44.5h1M11 44.5h1M13 44.5h1M64 44.5h1M111 44.5h1M148 44.5h4M164 44.5h3M4 45.5h1M12 45.5h1M15 45.5h1M64 45.5h1M111 45.5h1M150 45.5h1M154 45.5h1M158 45.5h2M163 45.5h1M166 45.5h2M15 46.5h1M64 46.5h1M111 46.5h1M144 46.5h1M151 46.5h1M157 46.5h3M166 46.5h1M12 47.5h1M15 47.5h1M64 47.5h2M68 47.5h6M76 47.5h6M84 47.5h6M92 47.5h6M100 47.5h6M108 47.5h4M144 47.5h8M155 47.5h1M162 47.5h2M165 47.5h3M4 48.5h1M14 48.5h1M64 48.5h1M111 48.5h1M155 48.5h1M157 48.5h1M159 48.5h1M161 48.5h1M166 48.5h2M3 49.5h2M13 49.5h2M64 49.5h1M111 49.5h1M147 49.5h2M155 49.5h2M159 49.5h1M164 49.5h1M167 49.5h1M2 50.5h2M13 50.5h1M64 50.5h1M111 50.5h1M148 50.5h4M155 50.5h1M158 50.5h2M162 50.5h1M164 50.5h3M2 51.5h1M7 51.5h1M12 51.5h1M64 51.5h1M111 51.5h1M145 51.5h7M153 51.5h15M0 52.5h3M9 52.5h3M64 52.5h1M111 52.5h1M151 52.5h3M155 52.5h4M166 52.5h2M0 53.5h2M8 53.5h2M64 53.5h1M111 53.5h1M147 53.5h1M149 53.5h1M151 53.5h1M165 53.5h3M0 54.5h4M5 54.5h3M64 54.5h1M71 54.5h2M79 54.5h2M87 54.5h2M95 54.5h2M103 54.5h2M111 54.5h1M145 54.5h3M151 54.5h1M153 54.5h2M156 54.5h1M158 54.5h2M163 54.5h4M0 55.5h5M64 55.5h48M145 55.5h1M147 55.5h13M161 55.5h7M0 56.5h5M64 56.5h1M68 56.5h1M73 56.5h20M96 56.5h7M107 56.5h1M111 56.5h1M164 56.5h1M167 56.5h1M194 56.5h3M2 57.5h1M4 57.5h1M64 57.5h1M68 57.5h1M73 57.5h1M79 57.5h14M96 57.5h1M102 57.5h1M107 57.5h1M111 57.5h1M166 57.5h1M194 57.5h3M200 57.5h3M1 58.5h1M5 58.5h1M64 58.5h1M68 58.5h1M73 58.5h1M79 58.5h3M83 58.5h2M86 58.5h2M89 58.5h2M92 58.5h2M96 58.5h1M102 58.5h1M107 58.5h1M111 58.5h1M194 58.5h3M200 58.5h3M1 59.5h1M5 59.5h1M64 59.5h5M73 59.5h1M79 59.5h3M83 59.5h2M86 59.5h2M89 59.5h2M92 59.5h3M96 59.5h1M102 59.5h1M107 59.5h5M161 59.5h7M194 59.5h3M200 59.5h3M0 60.5h1M6 60.5h1M64 60.5h1M73 60.5h1M79 60.5h3M83 60.5h2M86 60.5h2M89 60.5h2M92 60.5h5M102 60.5h1M111 60.5h1M162 60.5h4M194 60.5h3M200 60.5h3M0 61.5h1M64 61.5h1M73 61.5h9M83 61.5h2M86 61.5h2M89 61.5h2M92 61.5h11M111 61.5h1M163 61.5h1M165 61.5h2M194 61.5h3M200 61.5h3M0 62.5h2M4 62.5h1M7 62.5h1M64 62.5h1M73 62.5h1M80 62.5h2M83 62.5h2M86 62.5h2M89 62.5h2M92 62.5h2M95 62.5h1M102 62.5h1M111 62.5h1M161 62.5h1M166 62.5h2M200 62.5h3M4 63.5h1M7 63.5h1M64 63.5h1M72 63.5h3M77 63.5h5M83 63.5h2M86 63.5h2M89 63.5h2M92 63.5h2M95 63.5h2M99 63.5h5M111 63.5h1M160 63.5h1M162 63.5h6M7 64.5h1M64 64.5h12M77 64.5h21M99 64.5h13M192 64.5h16M248 64.5h5M64 65.5h1M80 65.5h2M83 65.5h2M86 65.5h2M89 65.5h1M92 65.5h2M95 65.5h1M111 65.5h1M192 65.5h16M246 65.5h3M251 65.5h1M64 66.5h1M80 66.5h2M83 66.5h2M86 66.5h2M89 66.5h2M92 66.5h2M95 66.5h1M111 66.5h1M192 66.5h16M245 66.5h3M64 67.5h1M80 67.5h2M83 67.5h2M86 67.5h2M89 67.5h2M92 67.5h2M95 67.5h1M111 67.5h1M192 67.5h16M243 67.5h5M4 68.5h1M6 68.5h1M11 68.5h1M13 68.5h1M64 68.5h1M80 68.5h2M83 68.5h2M86 68.5h2M89 68.5h2M92 68.5h2M95 68.5h1M111 68.5h1M192 68.5h16M242 68.5h7M250 68.5h1M252 68.5h2M7 69.5h1M10 69.5h2M14 69.5h1M64 69.5h1M80 69.5h2M83 69.5h2M86 69.5h2M89 69.5h2M92 69.5h2M95 69.5h1M111 69.5h1M192 69.5h1M195 69.5h1M198 69.5h1M201 69.5h1M204 69.5h1M207 69.5h1M241 69.5h10M1 70.5h1M64 70.5h1M80 70.5h2M83 70.5h2M86 70.5h2M89 70.5h2M92 70.5h2M95 70.5h1M111 70.5h1M192 70.5h1M207 70.5h1M241 70.5h2M246 70.5h1M248 70.5h1M250 70.5h1M255 70.5h1M64 71.5h48M192 71.5h1M207 71.5h1M240 71.5h4M249 71.5h1M255 71.5h1M8 72.5h1M15 72.5h1M240 72.5h2M244 72.5h1M248 72.5h3M8 73.5h1M240 73.5h1M243 73.5h1M247 73.5h4M255 73.5h1M8 74.5h1M240 74.5h2M248 74.5h7M1 75.5h1M7 75.5h1M9 75.5h1M14 75.5h2M240 75.5h1M245 75.5h2M249 75.5h5M3 76.5h1M5 76.5h1M11 76.5h1M13 76.5h1M240 76.5h2M244 76.5h1M250 76.5h3M4 77.5h1M12 77.5h1M15 77.5h1M240 77.5h2M243 77.5h2M249 77.5h1M251 77.5h1M15 78.5h1M240 78.5h1M242 78.5h2M251 78.5h1M12 79.5h1M15 79.5h1M240 79.5h4M249 79.5h1M251 79.5h1M4 80.5h1M14 80.5h1M241 80.5h3M251 80.5h1M3 81.5h2M13 81.5h2M241 81.5h3M249 81.5h1M251 81.5h1M253 81.5h1M2 82.5h2M13 82.5h1M242 82.5h3M248 82.5h4M253 82.5h1M2 83.5h1M7 83.5h1M12 83.5h1M243 83.5h9M255 83.5h1M0 84.5h3M9 84.5h3M244 84.5h9M254 84.5h2M0 85.5h2M8 85.5h2M246 85.5h10M0 86.5h4M5 86.5h3M248 86.5h8M0 87.5h5M251 87.5h5M0 88.5h5M251 88.5h5M2 89.5h1M4 89.5h1M251 89.5h1M253 89.5h1M1 90.5h1M5 90.5h1M252 90.5h1M1 91.5h1M5 91.5h1M252 91.5h1M0 92.5h1M6 92.5h1M249 92.5h1M251 92.5h1M0 93.5h1M249 93.5h1M251 93.5h1M0 94.5h2M4 94.5h1M7 94.5h1M248 94.5h1M250 94.5h2M255 94.5h1M4 95.5h1M7 95.5h1M248 95.5h1M250 95.5h1M253 95.5h3M7 96.5h1M40 96.5h5M55 96.5h1M248 96.5h5M38 97.5h3M43 97.5h1M246 97.5h3M251 97.5h1M37 98.5h3M245 98.5h3M35 99.5h5M243 99.5h5M4 100.5h1M6 100.5h1M11 100.5h1M13 100.5h1M34 100.5h7M42 100.5h1M44 100.5h2M52 100.5h1M54 100.5h1M59 100.5h1M61 100.5h1M242 100.5h7M250 100.5h1M252 100.5h2M7 101.5h1M10 101.5h2M14 101.5h1M33 101.5h10M55 101.5h1M58 101.5h2M62 101.5h1M241 101.5h10M1 102.5h1M33 102.5h2M38 102.5h1M40 102.5h1M42 102.5h1M47 102.5h1M49 102.5h1M241 102.5h2M246 102.5h1M248 102.5h1M250 102.5h1M255 102.5h1M32 103.5h4M41 103.5h1M47 103.5h1M240 103.5h4M249 103.5h1M255 103.5h1M8 104.5h1M15 104.5h1M32 104.5h2M36 104.5h1M40 104.5h3M56 104.5h1M63 104.5h1M240 104.5h2M244 104.5h1M248 104.5h3M8 105.5h1M32 105.5h1M35 105.5h1M39 105.5h4M47 105.5h1M56 105.5h1M240 105.5h1M243 105.5h1M247 105.5h4M255 105.5h1M8 106.5h1M32 106.5h2M40 106.5h7M56 106.5h1M240 106.5h2M248 106.5h7M1 107.5h1M7 107.5h1M9 107.5h1M14 107.5h2M32 107.5h1M37 107.5h2M41 107.5h5M49 107.5h1M55 107.5h1M57 107.5h1M62 107.5h2M240 107.5h1M245 107.5h2M249 107.5h5M3 108.5h1M5 108.5h1M11 108.5h1M13 108.5h1M32 108.5h2M36 108.5h1M42 108.5h3M51 108.5h1M53 108.5h1M59 108.5h1M61 108.5h1M240 108.5h2M244 108.5h1M250 108.5h3M4 109.5h1M12 109.5h1M15 109.5h1M32 109.5h2M35 109.5h2M41 109.5h1M43 109.5h1M52 109.5h1M60 109.5h1M63 109.5h1M240 109.5h2M243 109.5h2M249 109.5h1M251 109.5h1M15 110.5h1M32 110.5h1M34 110.5h2M43 110.5h1M63 110.5h1M240 110.5h1M242 110.5h2M251 110.5h1M12 111.5h1M15 111.5h1M32 111.5h4M41 111.5h1M43 111.5h1M60 111.5h1M63 111.5h1M240 111.5h4M249 111.5h1M251 111.5h1M4 112.5h1M14 112.5h1M33 112.5h3M43 112.5h1M52 112.5h1M62 112.5h1M241 112.5h3M251 112.5h1M3 113.5h2M13 113.5h2M33 113.5h3M41 113.5h1M43 113.5h1M45 113.5h1M51 113.5h2M61 113.5h2M241 113.5h3M249 113.5h1M251 113.5h1M253 113.5h1M2 114.5h2M13 114.5h1M34 114.5h3M40 114.5h4M45 114.5h1M50 114.5h2M61 114.5h1M242 114.5h3M248 114.5h4M253 114.5h1M2 115.5h1M7 115.5h1M12 115.5h1M35 115.5h9M47 115.5h1M50 115.5h1M55 115.5h1M60 115.5h1M206 115.5h2M243 115.5h9M255 115.5h1M0 116.5h3M9 116.5h3M36 116.5h9M46 116.5h5M57 116.5h3M205 116.5h1M208 116.5h3M244 116.5h9M254 116.5h2M0 117.5h2M8 117.5h2M38 117.5h12M56 117.5h2M203 117.5h2M211 117.5h1M246 117.5h10M0 118.5h4M5 118.5h3M40 118.5h12M53 118.5h3M202 118.5h1M212 118.5h1M248 118.5h8M0 119.5h5M43 119.5h10M201 119.5h1M213 119.5h1M251 119.5h5M0 120.5h5M43 120.5h10M201 120.5h1M213 120.5h1M251 120.5h5M2 121.5h1M4 121.5h1M43 121.5h1M45 121.5h1M50 121.5h1M52 121.5h1M200 121.5h1M214 121.5h1M251 121.5h1M253 121.5h1M1 122.5h1M5 122.5h1M44 122.5h1M49 122.5h1M53 122.5h1M200 122.5h1M215 122.5h1M252 122.5h1M1 123.5h1M5 123.5h1M44 123.5h1M49 123.5h1M53 123.5h1M200 123.5h1M215 123.5h1M252 123.5h1M0 124.5h1M6 124.5h1M41 124.5h1M43 124.5h1M48 124.5h1M54 124.5h1M201 124.5h1M214 124.5h2M249 124.5h1M251 124.5h1M0 125.5h1M41 125.5h1M43 125.5h1M48 125.5h1M202 125.5h3M212 125.5h2M249 125.5h1M251 125.5h1M0 126.5h2M4 126.5h1M7 126.5h1M40 126.5h1M42 126.5h2M47 126.5h3M52 126.5h1M55 126.5h1M209 126.5h3M248 126.5h1M250 126.5h2M255 126.5h1M4 127.5h1M7 127.5h1M40 127.5h1M42 127.5h1M45 127.5h3M52 127.5h1M55 127.5h1M248 127.5h1M250 127.5h1M253 127.5h3M7 128.5h1M248 128.5h5M246 129.5h3M251 129.5h1M245 130.5h3M243 131.5h5M4 132.5h1M6 132.5h1M11 132.5h1M13 132.5h1M242 132.5h7M250 132.5h1M252 132.5h2M7 133.5h1M10 133.5h2M14 133.5h1M241 133.5h10M1 134.5h1M241 134.5h2M246 134.5h1M248 134.5h1M250 134.5h1M255 134.5h1M240 135.5h4M249 135.5h1M255 135.5h1M8 136.5h1M15 136.5h1M240 136.5h2M244 136.5h1M248 136.5h3M8 137.5h1M240 137.5h1M243 137.5h1M247 137.5h4M255 137.5h1M8 138.5h1M240 138.5h2M248 138.5h7M1 139.5h1M7 139.5h1M9 139.5h1M14 139.5h2M240 139.5h1M245 139.5h2M249 139.5h5M3 140.5h1M5 140.5h1M11 140.5h1M13 140.5h1M240 140.5h2M244 140.5h1M250 140.5h3M4 141.5h1M12 141.5h1M15 141.5h1M240 141.5h2M243 141.5h2M249 141.5h1M251 141.5h1M15 142.5h1M240 142.5h1M242 142.5h2M251 142.5h1M12 143.5h1M15 143.5h1M240 143.5h4M249 143.5h1M251 143.5h1M4 144.5h1M14 144.5h1M241 144.5h3M251 144.5h1M3 145.5h2M13 145.5h2M241 145.5h3M249 145.5h1M251 145.5h1M253 145.5h1M2 146.5h2M13 146.5h1M242 146.5h3M248 146.5h4M253 146.5h1M2 147.5h1M7 147.5h1M12 147.5h1M243 147.5h9M255 147.5h1M0 148.5h3M9 148.5h3M244 148.5h9M254 148.5h2M0 149.5h2M8 149.5h2M246 149.5h10M0 150.5h4M5 150.5h3M248 150.5h8M0 151.5h5M251 151.5h5M0 152.5h5M251 152.5h5M2 153.5h1M4 153.5h1M251 153.5h1M253 153.5h1M1 154.5h1M5 154.5h1M252 154.5h1M1 155.5h1M5 155.5h1M252 155.5h1M0 156.5h1M6 156.5h1M249 156.5h1M251 156.5h1M0 157.5h1M249 157.5h1M251 157.5h1M0 158.5h2M4 158.5h1M7 158.5h1M248 158.5h1M250 158.5h2M255 158.5h1M4 159.5h1M7 159.5h1M248 159.5h1M250 159.5h1M253 159.5h3M7 160.5h1M248 160.5h5M246 161.5h3M251 161.5h1M245 162.5h3M243 163.5h5M4 164.5h1M6 164.5h1M11 164.5h1M13 164.5h1M242 164.5h7M250 164.5h1M252 164.5h2M7 165.5h1M10 165.5h2M14 165.5h1M241 165.5h10M1 166.5h1M241 166.5h2M246 166.5h1M248 166.5h1M250 166.5h1M255 166.5h1M240 167.5h4M249 167.5h1M255 167.5h1M8 168.5h1M15 168.5h1M240 168.5h2M244 168.5h1M248 168.5h3M8 169.5h1M240 169.5h1M243 169.5h1M247 169.5h4M255 169.5h1M8 170.5h1M240 170.5h2M248 170.5h7M1 171.5h1M7 171.5h1M9 171.5h1M14 171.5h2M240 171.5h1M245 171.5h2M249 171.5h5M3 172.5h1M5 172.5h1M11 172.5h1M13 172.5h1M240 172.5h2M244 172.5h1M250 172.5h3M4 173.5h1M12 173.5h1M15 173.5h1M240 173.5h2M243 173.5h2M249 173.5h1M251 173.5h1M15 174.5h1M240 174.5h1M242 174.5h2M251 174.5h1M12 175.5h1M15 175.5h1M240 175.5h4M249 175.5h1M251 175.5h1M4 176.5h1M14 176.5h1M241 176.5h3M251 176.5h1M3 177.5h2M13 177.5h2M241 177.5h3M249 177.5h1M251 177.5h1M253 177.5h1M2 178.5h2M13 178.5h1M242 178.5h3M248 178.5h4M253 178.5h1M2 179.5h1M7 179.5h1M12 179.5h1M243 179.5h9M255 179.5h1M0 180.5h3M9 180.5h3M244 180.5h9M254 180.5h2M0 181.5h2M8 181.5h2M246 181.5h10M0 182.5h4M5 182.5h3M248 182.5h8M0 183.5h5M251 183.5h5M0 184.5h5M251 184.5h5M2 185.5h1M4 185.5h1M251 185.5h1M253 185.5h1M1 186.5h1M5 186.5h1M252 186.5h1M1 187.5h1M5 187.5h1M252 187.5h1M0 188.5h1M6 188.5h1M249 188.5h1M251 188.5h1M0 189.5h1M249 189.5h1M251 189.5h1M0 190.5h2M4 190.5h1M7 190.5h1M248 190.5h1M250 190.5h2M255 190.5h1M4 191.5h1M7 191.5h1M248 191.5h1M250 191.5h1M253 191.5h3M7 192.5h1M248 192.5h5M246 193.5h3M251 193.5h1M245 194.5h3M243 195.5h5M4 196.5h1M6 196.5h1M11 196.5h1M13 196.5h1M242 196.5h7M250 196.5h1M252 196.5h2M7 197.5h1M10 197.5h2M14 197.5h1M241 197.5h10M1 198.5h1M241 198.5h2M246 198.5h1M248 198.5h1M250 198.5h1M255 198.5h1M240 199.5h4M249 199.5h1M255 199.5h1M8 200.5h1M15 200.5h1M240 200.5h2M244 200.5h1M248 200.5h3M8 201.5h1M240 201.5h1M243 201.5h1M247 201.5h4M255 201.5h1M8 202.5h1M240 202.5h2M248 202.5h7M7 203.5h1M9 203.5h1M14 203.5h2M240 203.5h1M245 203.5h2M249 203.5h5M11 204.5h1M13 204.5h1M240 204.5h2M244 204.5h1M250 204.5h3M12 205.5h1M15 205.5h1M240 205.5h2M243 205.5h2M249 205.5h1M251 205.5h1M15 206.5h1M240 206.5h1M242 206.5h2M251 206.5h1M12 207.5h1M15 207.5h1M240 207.5h4M249 207.5h1M251 207.5h1M14 208.5h1M241 208.5h3M251 208.5h1M3 209.5h1M13 209.5h2M241 209.5h3M249 209.5h1M251 209.5h1M253 209.5h1M1 210.5h1M13 210.5h1M242 210.5h3M248 210.5h4M253 210.5h1M12 211.5h1M22 211.5h2M243 211.5h9M255 211.5h1M5 212.5h1M9 212.5h3M21 212.5h1M24 212.5h3M244 212.5h9M254 212.5h2M8 213.5h2M19 213.5h2M27 213.5h1M246 213.5h10M18 214.5h1M28 214.5h1M248 214.5h8M17 215.5h1M29 215.5h1M251 215.5h5M2 216.5h1M4 216.5h1M17 216.5h1M29 216.5h1M251 216.5h5M16 217.5h1M30 217.5h1M251 217.5h1M253 217.5h1M16 218.5h1M31 218.5h1M252 218.5h1M16 219.5h1M31 219.5h1M252 219.5h1M17 220.5h1M30 220.5h2M249 220.5h1M251 220.5h1M6 221.5h1M18 221.5h3M28 221.5h2M249 221.5h1M251 221.5h1M6 222.5h1M25 222.5h3M248 222.5h1M250 222.5h2M255 222.5h1M7 223.5h1M248 223.5h1M250 223.5h1M253 223.5h3M1 224.5h1M24 224.5h5M39 224.5h1M56 224.5h5M71 224.5h1M88 224.5h5M103 224.5h1M120 224.5h5M135 224.5h1M152 224.5h5M167 224.5h1M184 224.5h5M199 224.5h1M216 224.5h5M231 224.5h1M248 224.5h5M22 225.5h3M27 225.5h1M54 225.5h3M59 225.5h1M86 225.5h3M91 225.5h1M118 225.5h3M123 225.5h1M150 225.5h3M155 225.5h1M182 225.5h3M187 225.5h1M214 225.5h3M219 225.5h1M246 225.5h3M251 225.5h1M21 226.5h3M53 226.5h3M85 226.5h3M117 226.5h3M149 226.5h3M181 226.5h3M213 226.5h3M245 226.5h3M19 227.5h5M51 227.5h5M83 227.5h5M115 227.5h5M147 227.5h5M179 227.5h5M211 227.5h5M243 227.5h5M7 228.5h1M18 228.5h7M26 228.5h1M28 228.5h2M36 228.5h1M38 228.5h1M43 228.5h1M45 228.5h1M50 228.5h7M58 228.5h1M60 228.5h2M68 228.5h1M70 228.5h1M75 228.5h1M77 228.5h1M82 228.5h7M90 228.5h1M92 228.5h2M100 228.5h1M102 228.5h1M107 228.5h1M109 228.5h1M114 228.5h7M122 228.5h1M124 228.5h2M132 228.5h1M134 228.5h1M139 228.5h1M141 228.5h1M146 228.5h7M154 228.5h1M156 228.5h2M164 228.5h1M166 228.5h1M171 228.5h1M173 228.5h1M178 228.5h7M186 228.5h1M188 228.5h2M196 228.5h1M198 228.5h1M203 228.5h1M205 228.5h1M210 228.5h7M218 228.5h1M220 228.5h2M228 228.5h1M230 228.5h1M235 228.5h1M237 228.5h1M242 228.5h7M250 228.5h1M252 228.5h2M17 229.5h10M39 229.5h1M42 229.5h2M46 229.5h1M49 229.5h10M71 229.5h1M74 229.5h2M78 229.5h1M81 229.5h10M103 229.5h1M106 229.5h2M110 229.5h1M113 229.5h10M135 229.5h1M138 229.5h2M142 229.5h1M145 229.5h10M167 229.5h1M170 229.5h2M174 229.5h1M177 229.5h10M199 229.5h1M202 229.5h2M206 229.5h1M209 229.5h10M231 229.5h1M234 229.5h2M238 229.5h1M241 229.5h10M17 230.5h2M22 230.5h1M24 230.5h1M26 230.5h1M31 230.5h1M33 230.5h1M49 230.5h2M54 230.5h1M56 230.5h1M58 230.5h1M63 230.5h1M65 230.5h1M81 230.5h2M86 230.5h1M88 230.5h1M90 230.5h1M95 230.5h1M97 230.5h1M113 230.5h2M118 230.5h1M120 230.5h1M122 230.5h1M127 230.5h1M129 230.5h1M145 230.5h2M150 230.5h1M152 230.5h1M154 230.5h1M159 230.5h1M161 230.5h1M177 230.5h2M182 230.5h1M184 230.5h1M186 230.5h1M191 230.5h1M193 230.5h1M209 230.5h2M214 230.5h1M216 230.5h1M218 230.5h1M223 230.5h1M225 230.5h1M241 230.5h2M246 230.5h1M248 230.5h1M250 230.5h1M255 230.5h1M18 231.5h2M25 231.5h1M31 231.5h1M48 231.5h4M57 231.5h1M63 231.5h1M80 231.5h4M89 231.5h1M95 231.5h1M112 231.5h4M121 231.5h1M127 231.5h1M144 231.5h4M153 231.5h1M159 231.5h1M176 231.5h4M185 231.5h1M191 231.5h1M208 231.5h4M217 231.5h1M223 231.5h1M240 231.5h4M249 231.5h1M255 231.5h1M0 232.5h16M17 232.5h1M20 232.5h1M24 232.5h1M26 232.5h1M40 232.5h1M47 232.5h1M49 232.5h1M52 232.5h1M56 232.5h1M58 232.5h1M72 232.5h1M79 232.5h1M81 232.5h1M84 232.5h1M88 232.5h1M90 232.5h1M104 232.5h1M111 232.5h1M113 232.5h1M116 232.5h1M120 232.5h1M122 232.5h1M136 232.5h1M143 232.5h3M148 232.5h1M152 232.5h1M154 232.5h1M168 232.5h1M175 232.5h3M180 232.5h1M184 232.5h3M200 232.5h1M207 232.5h1M209 232.5h1M212 232.5h1M216 232.5h1M218 232.5h1M232 232.5h1M239 232.5h1M241 232.5h1M244 232.5h1M248 232.5h1M250 232.5h1M0 233.5h1M2 233.5h1M5 233.5h1M10 233.5h1M12 233.5h1M15 233.5h2M19 233.5h1M23 233.5h1M26 233.5h1M31 233.5h1M40 233.5h1M48 233.5h1M51 233.5h1M55 233.5h1M58 233.5h1M63 233.5h1M72 233.5h1M80 233.5h1M83 233.5h1M87 233.5h2M90 233.5h1M95 233.5h1M104 233.5h1M112 233.5h1M115 233.5h1M119 233.5h1M122 233.5h1M127 233.5h1M136 233.5h1M144 233.5h1M147 233.5h1M151 233.5h1M154 233.5h1M159 233.5h1M168 233.5h1M176 233.5h1M179 233.5h1M183 233.5h1M185 233.5h2M191 233.5h1M200 233.5h1M208 233.5h1M211 233.5h1M215 233.5h1M218 233.5h1M223 233.5h1M232 233.5h1M240 233.5h1M243 233.5h1M247 233.5h4M255 233.5h1M0 234.5h1M4 234.5h2M9 234.5h1M13 234.5h5M24 234.5h1M27 234.5h4M40 234.5h1M48 234.5h2M56 234.5h1M59 234.5h4M72 234.5h1M80 234.5h2M88 234.5h2M91 234.5h4M104 234.5h1M112 234.5h2M120 234.5h1M122 234.5h5M136 234.5h1M144 234.5h2M152 234.5h1M155 234.5h4M168 234.5h1M176 234.5h2M184 234.5h1M187 234.5h4M200 234.5h1M208 234.5h2M216 234.5h2M219 234.5h4M232 234.5h1M240 234.5h2M248 234.5h1M250 234.5h5M0 235.5h1M5 235.5h1M8 235.5h3M12 235.5h1M23 235.5h1M25 235.5h1M27 235.5h1M29 235.5h1M33 235.5h1M39 235.5h6M55 235.5h1M57 235.5h2M61 235.5h1M65 235.5h1M71 235.5h1M73 235.5h4M87 235.5h1M89 235.5h2M93 235.5h1M97 235.5h1M103 235.5h1M105 235.5h4M119 235.5h1M121 235.5h1M124 235.5h2M129 235.5h1M135 235.5h1M137 235.5h4M151 235.5h1M153 235.5h2M157 235.5h1M161 235.5h1M167 235.5h1M169 235.5h4M183 235.5h1M185 235.5h2M189 235.5h1M193 235.5h1M199 235.5h1M201 235.5h4M215 235.5h1M217 235.5h1M221 235.5h1M225 235.5h1M231 235.5h6M247 235.5h1M249 235.5h3M253 235.5h1M0 236.5h1M2 236.5h2M6 236.5h1M8 236.5h1M11 236.5h1M26 236.5h3M35 236.5h1M37 236.5h2M40 236.5h1M43 236.5h1M58 236.5h3M67 236.5h1M69 236.5h2M72 236.5h1M75 236.5h1M90 236.5h3M99 236.5h1M101 236.5h2M104 236.5h1M107 236.5h1M122 236.5h3M131 236.5h1M133 236.5h2M136 236.5h1M139 236.5h1M154 236.5h3M163 236.5h1M165 236.5h2M168 236.5h1M171 236.5h1M186 236.5h1M188 236.5h1M195 236.5h1M197 236.5h2M200 236.5h1M203 236.5h1M218 236.5h3M227 236.5h1M229 236.5h2M232 236.5h1M235 236.5h1M250 236.5h3M0 237.5h1M2 237.5h1M4 237.5h1M6 237.5h2M27 237.5h1M36 237.5h1M39 237.5h1M59 237.5h1M68 237.5h1M71 237.5h1M91 237.5h1M100 237.5h1M103 237.5h1M123 237.5h1M132 237.5h2M135 237.5h1M155 237.5h1M164 237.5h2M167 237.5h1M187 237.5h1M196 237.5h1M198 237.5h2M219 237.5h1M228 237.5h1M230 237.5h2M251 237.5h1M0 238.5h1M2 238.5h2M5 238.5h1M7 238.5h1M35 238.5h1M39 238.5h1M67 238.5h1M69 238.5h1M71 238.5h1M99 238.5h2M103 238.5h1M131 238.5h1M135 238.5h1M163 238.5h3M167 238.5h1M195 238.5h1M197 238.5h3M227 238.5h3M231 238.5h1M0 239.5h1M8 239.5h1M10 239.5h1M12 239.5h2M20 239.5h1M22 239.5h1M27 239.5h1M29 239.5h1M34 239.5h2M37 239.5h1M40 239.5h1M42 239.5h1M44 239.5h2M52 239.5h1M54 239.5h1M59 239.5h1M61 239.5h1M66 239.5h1M68 239.5h1M72 239.5h1M74 239.5h1M76 239.5h2M84 239.5h1M86 239.5h1M91 239.5h1M93 239.5h1M98 239.5h1M101 239.5h1M104 239.5h1M106 239.5h1M108 239.5h2M116 239.5h1M118 239.5h1M123 239.5h1M125 239.5h1M130 239.5h4M136 239.5h1M138 239.5h1M140 239.5h2M148 239.5h1M150 239.5h1M155 239.5h1M157 239.5h1M162 239.5h1M164 239.5h1M167 239.5h2M170 239.5h1M172 239.5h2M180 239.5h1M182 239.5h1M187 239.5h1M189 239.5h1M194 239.5h1M200 239.5h1M202 239.5h1M204 239.5h2M212 239.5h1M214 239.5h1M219 239.5h1M221 239.5h1M226 239.5h1M228 239.5h1M232 239.5h1M234 239.5h1M236 239.5h2M244 239.5h1M246 239.5h1M251 239.5h1M253 239.5h1M0 240.5h1M3 240.5h3M7 240.5h1M9 240.5h2M23 240.5h1M26 240.5h2M30 240.5h1M33 240.5h1M35 240.5h5M41 240.5h2M55 240.5h1M58 240.5h2M62 240.5h1M65 240.5h1M67 240.5h5M73 240.5h2M87 240.5h1M90 240.5h2M94 240.5h1M97 240.5h1M99 240.5h3M103 240.5h1M105 240.5h2M119 240.5h1M122 240.5h2M126 240.5h1M129 240.5h1M131 240.5h3M135 240.5h1M137 240.5h2M151 240.5h1M154 240.5h2M158 240.5h1M161 240.5h1M163 240.5h8M183 240.5h1M186 240.5h2M190 240.5h1M193 240.5h5M199 240.5h1M201 240.5h2M215 240.5h1M218 240.5h2M222 240.5h1M225 240.5h1M227 240.5h5M233 240.5h2M247 240.5h1M250 240.5h2M254 240.5h1M0 241.5h3M6 241.5h1M8 241.5h1M10 241.5h1M15 241.5h1M17 241.5h1M33 241.5h2M38 241.5h1M40 241.5h1M42 241.5h1M47 241.5h1M49 241.5h1M65 241.5h2M70 241.5h1M72 241.5h1M74 241.5h1M79 241.5h1M81 241.5h1M97 241.5h2M102 241.5h1M104 241.5h1M106 241.5h1M111 241.5h1M113 241.5h1M129 241.5h2M134 241.5h1M136 241.5h1M138 241.5h1M143 241.5h1M145 241.5h1M161 241.5h2M166 241.5h1M168 241.5h1M170 241.5h1M175 241.5h1M177 241.5h1M193 241.5h2M198 241.5h1M200 241.5h1M202 241.5h1M207 241.5h1M209 241.5h1M225 241.5h2M230 241.5h1M232 241.5h1M234 241.5h1M239 241.5h1M241 241.5h1M0 242.5h1M2 242.5h2M9 242.5h1M15 242.5h1M32 242.5h1M34 242.5h2M41 242.5h1M47 242.5h1M64 242.5h1M66 242.5h2M73 242.5h1M79 242.5h1M96 242.5h1M98 242.5h2M105 242.5h1M111 242.5h1M128 242.5h1M130 242.5h2M137 242.5h1M143 242.5h1M160 242.5h1M162 242.5h2M169 242.5h1M175 242.5h1M192 242.5h4M201 242.5h1M207 242.5h1M224 242.5h4M233 242.5h1M239 242.5h1M0 243.5h2M4 243.5h1M8 243.5h3M24 243.5h1M31 243.5h1M33 243.5h1M36 243.5h1M40 243.5h1M42 243.5h1M56 243.5h1M63 243.5h1M65 243.5h1M68 243.5h1M72 243.5h3M88 243.5h1M95 243.5h1M97 243.5h1M100 243.5h1M104 243.5h3M120 243.5h1M127 243.5h3M132 243.5h1M136 243.5h1M138 243.5h1M152 243.5h1M159 243.5h1M161 243.5h1M164 243.5h1M168 243.5h1M170 243.5h1M184 243.5h1M191 243.5h1M193 243.5h1M196 243.5h1M200 243.5h3M216 243.5h1M223 243.5h3M228 243.5h1M232 243.5h1M234 243.5h1M248 243.5h1M255 243.5h1M0 244.5h1M3 244.5h1M7 244.5h1M10 244.5h1M15 244.5h1M24 244.5h1M32 244.5h1M35 244.5h1M39 244.5h1M42 244.5h1M47 244.5h1M56 244.5h1M64 244.5h1M67 244.5h1M71 244.5h1M73 244.5h2M79 244.5h1M88 244.5h1M96 244.5h1M99 244.5h1M103 244.5h1M105 244.5h2M111 244.5h1M120 244.5h1M128 244.5h1M131 244.5h1M135 244.5h1M138 244.5h1M143 244.5h1M152 244.5h1M160 244.5h1M163 244.5h1M167 244.5h1M170 244.5h1M175 244.5h1M184 244.5h1M192 244.5h1M195 244.5h1M199 244.5h2M202 244.5h1M207 244.5h1M216 244.5h1M224 244.5h1M227 244.5h1M231 244.5h1M234 244.5h1M239 244.5h1M248 244.5h1M0 245.5h2M8 245.5h1M11 245.5h4M24 245.5h1M32 245.5h2M40 245.5h1M43 245.5h4M56 245.5h1M64 245.5h2M72 245.5h7M88 245.5h1M96 245.5h2M104 245.5h1M107 245.5h4M120 245.5h1M128 245.5h2M136 245.5h1M138 245.5h5M152 245.5h1M160 245.5h2M168 245.5h2M171 245.5h4M184 245.5h1M192 245.5h2M200 245.5h1M202 245.5h5M216 245.5h1M224 245.5h2M232 245.5h1M234 245.5h5M248 245.5h1M7 246.5h1M9 246.5h2M12 246.5h2M17 246.5h1M23 246.5h1M25 246.5h4M39 246.5h1M41 246.5h1M45 246.5h1M49 246.5h1M55 246.5h6M71 246.5h1M73 246.5h1M75 246.5h1M77 246.5h1M81 246.5h1M87 246.5h6M103 246.5h1M105 246.5h1M109 246.5h1M113 246.5h1M119 246.5h6M135 246.5h1M137 246.5h2M141 246.5h1M145 246.5h1M151 246.5h6M167 246.5h1M169 246.5h1M171 246.5h1M173 246.5h1M177 246.5h1M183 246.5h1M185 246.5h4M199 246.5h1M201 246.5h2M204 246.5h2M209 246.5h1M215 246.5h6M231 246.5h1M233 246.5h1M235 246.5h1M237 246.5h1M241 246.5h1M247 246.5h1M249 246.5h4M10 247.5h1M12 247.5h1M19 247.5h1M21 247.5h2M24 247.5h1M27 247.5h1M42 247.5h1M44 247.5h1M51 247.5h1M53 247.5h2M56 247.5h1M59 247.5h1M74 247.5h3M83 247.5h1M85 247.5h4M91 247.5h1M106 247.5h1M108 247.5h1M115 247.5h1M117 247.5h2M120 247.5h1M123 247.5h1M138 247.5h3M147 247.5h1M149 247.5h4M155 247.5h1M170 247.5h1M172 247.5h1M179 247.5h1M181 247.5h2M184 247.5h1M187 247.5h1M202 247.5h1M204 247.5h1M211 247.5h1M213 247.5h4M219 247.5h1M234 247.5h1M236 247.5h1M243 247.5h1M245 247.5h2M248 247.5h1M251 247.5h1M11 248.5h1M20 248.5h1M23 248.5h1M43 248.5h1M52 248.5h1M55 248.5h1M75 248.5h1M84 248.5h4M107 248.5h1M116 248.5h2M119 248.5h1M139 248.5h1M148 248.5h1M151 248.5h1M171 248.5h1M180 248.5h1M183 248.5h1M203 248.5h1M212 248.5h4M235 248.5h1M244 248.5h4M19 249.5h3M23 249.5h1M51 249.5h1M54 249.5h2M83 249.5h3M87 249.5h1M115 249.5h2M119 249.5h1M147 249.5h5M179 249.5h1M183 249.5h1M211 249.5h1M213 249.5h1M215 249.5h1M243 249.5h1M247 249.5h1M4 250.5h1M6 250.5h1M11 250.5h1M13 250.5h1M18 250.5h2M22 250.5h1M24 250.5h1M26 250.5h1M28 250.5h2M36 250.5h1M38 250.5h1M43 250.5h1M45 250.5h1M50 250.5h3M56 250.5h1M58 250.5h1M60 250.5h2M68 250.5h1M70 250.5h1M75 250.5h1M77 250.5h1M82 250.5h1M85 250.5h2M88 250.5h1M90 250.5h1M92 250.5h2M100 250.5h1M102 250.5h1M107 250.5h1M109 250.5h1M114 250.5h1M118 250.5h1M120 250.5h1M122 250.5h1M124 250.5h2M132 250.5h1M134 250.5h1M139 250.5h1M141 250.5h1M146 250.5h3M150 250.5h1M152 250.5h1M154 250.5h1M156 250.5h2M164 250.5h1M166 250.5h1M171 250.5h1M173 250.5h1M178 250.5h2M184 250.5h1M186 250.5h1M188 250.5h2M196 250.5h1M198 250.5h1M203 250.5h1M205 250.5h1M210 250.5h1M216 250.5h1M218 250.5h1M220 250.5h2M228 250.5h1M230 250.5h1M235 250.5h1M237 250.5h1M242 250.5h1M246 250.5h1M248 250.5h1M250 250.5h1M252 250.5h2M7 251.5h1M10 251.5h2M14 251.5h1M17 251.5h1M19 251.5h3M23 251.5h1M25 251.5h2M39 251.5h1M42 251.5h2M46 251.5h1M49 251.5h1M51 251.5h5M57 251.5h2M71 251.5h1M74 251.5h2M78 251.5h1M81 251.5h1M83 251.5h3M87 251.5h1M89 251.5h2M103 251.5h1M106 251.5h2M110 251.5h1M113 251.5h1M115 251.5h3M119 251.5h1M121 251.5h2M135 251.5h1M138 251.5h2M142 251.5h1M145 251.5h1M147 251.5h5M153 251.5h2M167 251.5h1M170 251.5h2M174 251.5h1M177 251.5h1M179 251.5h3M183 251.5h4M199 251.5h1M202 251.5h2M206 251.5h1M209 251.5h1M211 251.5h3M215 251.5h1M217 251.5h2M231 251.5h1M234 251.5h2M238 251.5h1M241 251.5h1M243 251.5h3M247 251.5h1M249 251.5h2M1 252.5h1M17 252.5h2M22 252.5h1M24 252.5h1M26 252.5h1M31 252.5h1M33 252.5h1M49 252.5h2M54 252.5h1M56 252.5h1M58 252.5h1M63 252.5h1M65 252.5h1M81 252.5h2M86 252.5h1M88 252.5h1M90 252.5h1M95 252.5h1M97 252.5h1M113 252.5h2M118 252.5h1M120 252.5h1M122 252.5h1M127 252.5h1M129 252.5h1M145 252.5h2M150 252.5h1M152 252.5h1M154 252.5h1M159 252.5h1M161 252.5h1M177 252.5h2M182 252.5h1M184 252.5h1M186 252.5h1M191 252.5h1M193 252.5h1M209 252.5h2M214 252.5h1M216 252.5h1M218 252.5h1M223 252.5h1M225 252.5h1M241 252.5h2M246 252.5h1M248 252.5h1M250 252.5h1M255 252.5h1M16 253.5h1M18 253.5h2M25 253.5h1M31 253.5h1M48 253.5h1M50 253.5h2M57 253.5h1M63 253.5h1M80 253.5h4M89 253.5h1M95 253.5h1M112 253.5h4M121 253.5h1M127 253.5h1M144 253.5h1M146 253.5h2M153 253.5h1M159 253.5h1M176 253.5h1M178 253.5h2M185 253.5h1M191 253.5h1M208 253.5h1M210 253.5h2M217 253.5h1M223 253.5h1M240 253.5h1M242 253.5h2M249 253.5h1M255 253.5h1M8 254.5h1M15 254.5h1M17 254.5h1M20 254.5h1M24 254.5h1M26 254.5h1M40 254.5h1M47 254.5h3M52 254.5h1M56 254.5h3M72 254.5h1M79 254.5h3M84 254.5h1M88 254.5h1M90 254.5h1M104 254.5h1M111 254.5h1M113 254.5h1M116 254.5h1M120 254.5h3M136 254.5h1M143 254.5h1M145 254.5h1M148 254.5h1M152 254.5h1M154 254.5h1M168 254.5h1M175 254.5h1M177 254.5h1M180 254.5h1M184 254.5h3M200 254.5h1M207 254.5h1M209 254.5h1M212 254.5h1M216 254.5h1M218 254.5h1M232 254.5h1M239 254.5h1M241 254.5h1M244 254.5h1M248 254.5h1M250 254.5h1M8 255.5h1M16 255.5h1M19 255.5h1M23 255.5h2M26 255.5h1M31 255.5h1M40 255.5h1M48 255.5h1M51 255.5h1M55 255.5h2M58 255.5h1M63 255.5h1M72 255.5h1M80 255.5h1M83 255.5h1M87 255.5h1M90 255.5h1M95 255.5h1M104 255.5h1M112 255.5h1M115 255.5h1M119 255.5h1M121 255.5h2M127 255.5h1M136 255.5h1M144 255.5h1M147 255.5h1M151 255.5h1M154 255.5h1M159 255.5h1M168 255.5h1M176 255.5h1M179 255.5h1M183 255.5h1M186 255.5h1M191 255.5h1M200 255.5h1M208 255.5h1M211 255.5h1M215 255.5h1M218 255.5h1M223 255.5h1M232 255.5h1M240 255.5h1M243 255.5h1M247 255.5h4M255 255.5h1"/><path d="M0 0h152v8h-152zM0 8h152v8h-152zM0 16h152v8h-152zM0 24h8v8h-8zM24 24h16v8h-16zM56 24h16v8h-16zM88 24h16v8h-16zM120 24h16v8h-16zM144 24h8v8h-8zM0 32h16v8h-16zM64 32h48v8h-48zM144 32h8v8h-8zM0 40h16v8h-16zM64 40h48v8h-48zM144 40h8v8h-8zM0 48h16v8h-16zM64 48h48v8h-48zM144 48h24v8h-24zM0 56h8v8h-8zM64 56h48v8h-48zM160 56h8v8h-8zM184 56h32v8h-32zM0 64h16v8h-16zM64 64h16v8h-16zM96 64h16v8h-16zM160 64h32v8h-32zM208 64h48v8h-48zM0 72h16v8h-16zM240 72h16v8h-16zM0 80h16v8h-16zM240 80h16v8h-16zM0 88h8v8h-8zM248 88h8v8h-8zM0 96h16v8h-16zM40 96h16v8h-16zM240 96h16v8h-16zM0 104h16v8h-16zM32 104h32v8h-32zM240 104h16v8h-16zM0 112h16v8h-16zM32 112h32v8h-32zM200 112h16v8h-16zM240 112h16v8h-16zM0 120h8v8h-8zM40 120h16v8h-16zM200 120h16v8h-16zM248 120h8v8h-8zM0 128h16v8h-16zM240 128h16v8h-16zM0 136h16v8h-16zM120 136h104v8h-104zM240 136h16v8h-16zM0 144h16v8h-16zM88 144h40v8h-40zM216 144h16v8h-16zM240 144h16v8h-16zM0 152h8v8h-8zM72 152h24v8h-24zM224 152h8v8h-8zM248 152h8v8h-8zM0 160h16v8h-16zM72 160h8v8h-8zM224 160h8v8h-8zM240 160h16v8h-16zM0 168h16v8h-16zM72 168h32v8h-32zM224 168h8v8h-8zM240 168h16v8h-16zM0 176h16v8h-16zM96 176h24v8h-24zM208 176h24v8h-24zM240 176h16v8h-16zM0 184h8v8h-8zM112 184h104v8h-104zM248 184h8v8h-8zM0 192h16v8h-16zM240 192h16v8h-16zM8 200h8v8h-8zM240 200h16v8h-16zM8 208h24v8h-24zM240 208h16v8h-16zM16 216h16v8h-16zM248 216h8v8h-8zM16 224h240v8h-240z" fill="rgba(238,44,34,.5)"/><rect x="79.5" y="63.5" width="17" height="9" fill="rgba(240,122,48,.5)" stroke="#f5862f" stroke-width="1"/><rect x="191.5" y="63.5" width="17" height="9" fill="rgba(240,122,48,.5)" stroke="#f5862f" stroke-width="1"/><rect x="31.5" y="47.5" width="17" height="9" fill="rgba(110,255,60,.36)" stroke="#74ef45" stroke-width="1"/><rect x="119.5" y="63.5" width="17" height="9" fill="rgba(110,255,60,.36)" stroke="#74ef45" stroke-width="1"/><rect x="167.5" y="127.5" width="17" height="9" fill="rgba(110,255,60,.36)" stroke="#74ef45" stroke-width="1"/><rect x="167.5" y="143.5" width="17" height="9" fill="rgba(110,255,60,.36)" stroke="#74ef45" stroke-width="1"/><rect x="167.5" y="191.5" width="17" height="9" fill="rgba(110,255,60,.36)" stroke="#74ef45" stroke-width="1"/><rect x="215.5" y="183.5" width="17" height="9" fill="rgba(110,255,60,.36)" stroke="#74ef45" stroke-width="1"/><rect x="23.5" y="191.5" width="17" height="9" fill="rgba(110,255,60,.36)" stroke="#74ef45" stroke-width="1"/><path stroke="#e2f6d3" d="M35 45.5h1M39 45.5h1M35 46.5h1M39 46.5h1M123 60.5h10M123 61.5h1M127 61.5h1M130 61.5h1M132 61.5h1M123 62.5h1M125 62.5h1M127 62.5h1M129 62.5h1M132 62.5h1M123 63.5h1M126 63.5h1M128 63.5h1M130 63.5h1M132 63.5h1M123 64.5h10M128 68.5h1M128 69.5h1M128 70.5h1M175 130.5h2M176 132.5h2M173 134.5h1M177 143.5h4M177 144.5h2M180 144.5h1M177 145.5h3M176 146.5h3M171 147.5h1M173 147.5h7M171 148.5h10M171 149.5h10M219 180.5h10M219 181.5h1M223 181.5h1M226 181.5h1M228 181.5h1M219 182.5h1M221 182.5h1M223 182.5h1M225 182.5h1M228 182.5h1M219 183.5h1M222 183.5h1M224 183.5h1M226 183.5h1M228 183.5h1M219 184.5h10M27 186.5h1M34 186.5h2M26 187.5h1M28 187.5h2M33 187.5h1M35 187.5h1M172 187.5h1M27 188.5h1M33 188.5h2M36 188.5h1M173 188.5h1M224 188.5h1M31 189.5h1M224 189.5h1M30 190.5h3M224 190.5h1M28 191.5h1M31 191.5h2M35 191.5h1M28 192.5h2M31 192.5h2M34 192.5h2M26 193.5h1M29 193.5h6M38 193.5h1M25 194.5h1M30 194.5h4M35 196.5h2M35 197.5h2M29 198.5h1M173 198.5h1"/><path stroke="#93bd7b" d="M33 40.5h1M41 40.5h1M32 41.5h1M34 41.5h1M40 41.5h1M42 41.5h1M32 42.5h1M35 42.5h2M38 42.5h2M42 42.5h1M32 43.5h1M34 43.5h1M37 43.5h1M40 43.5h1M42 43.5h1M32 44.5h1M42 44.5h1M32 45.5h2M41 45.5h2M45 45.5h2M32 46.5h1M42 46.5h1M44 46.5h1M47 46.5h1M32 47.5h1M37 47.5h1M42 47.5h2M33 48.5h1M41 48.5h2M45 48.5h2M34 49.5h2M39 49.5h2M42 49.5h1M44 49.5h1M47 49.5h1M34 50.5h1M40 50.5h1M42 50.5h1M45 50.5h1M34 51.5h1M41 51.5h3M46 51.5h1M34 52.5h1M42 52.5h1M44 52.5h1M46 52.5h1M33 53.5h1M43 53.5h1M46 53.5h1M33 54.5h1M45 54.5h1M33 55.5h1M36 55.5h1M44 55.5h1M122 59.5h12M122 60.5h1M133 60.5h1M122 61.5h1M133 61.5h1M122 62.5h1M133 62.5h1M122 63.5h1M133 63.5h1M122 64.5h1M133 64.5h1M122 65.5h12M127 67.5h2M127 68.5h1M127 69.5h1M127 70.5h1M179 123.5h1M172 124.5h1M174 124.5h3M178 124.5h1M173 125.5h5M172 126.5h7M171 127.5h3M175 127.5h2M178 127.5h1M180 127.5h1M171 128.5h3M175 128.5h2M178 128.5h3M172 129.5h8M173 130.5h2M177 130.5h2M179 132.5h2M173 133.5h2M179 133.5h2M174 134.5h1M218 179.5h12M218 180.5h1M229 180.5h1M218 181.5h1M229 181.5h1M218 182.5h1M229 182.5h1M218 183.5h1M229 183.5h1M218 184.5h1M229 184.5h1M29 185.5h6M218 185.5h12M28 186.5h6M36 186.5h1M27 187.5h1M30 187.5h1M32 187.5h1M34 187.5h1M36 187.5h2M223 187.5h2M26 188.5h1M28 188.5h2M31 188.5h1M35 188.5h1M37 188.5h1M179 188.5h1M223 188.5h1M26 189.5h2M30 189.5h1M32 189.5h1M34 189.5h3M223 189.5h1M26 190.5h1M28 190.5h2M33 190.5h1M37 190.5h1M223 190.5h1M26 191.5h1M29 191.5h1M34 191.5h1M37 191.5h1M26 192.5h1M37 192.5h1M171 192.5h1M180 192.5h1M37 193.5h1M172 193.5h2M178 193.5h2M26 194.5h2M36 194.5h3M25 195.5h2M32 196.5h2M176 196.5h2M179 196.5h2M29 197.5h2M173 197.5h2M179 197.5h2M30 198.5h1M174 198.5h1"/><path stroke="#0a1820" d="M33 41.5h1M41 41.5h1M33 42.5h2M40 42.5h2M33 43.5h1M35 43.5h2M38 43.5h2M41 43.5h1M33 44.5h9M34 45.5h1M36 45.5h3M40 45.5h1M33 46.5h2M36 46.5h3M40 46.5h2M45 46.5h2M33 47.5h4M38 47.5h4M44 47.5h4M34 48.5h7M43 48.5h2M47 48.5h1M36 49.5h3M43 49.5h1M35 50.5h5M43 50.5h2M35 51.5h6M44 51.5h2M35 52.5h7M45 52.5h1M34 53.5h9M44 53.5h2M34 54.5h11M34 55.5h2M37 55.5h7M122 58.5h12M121 59.5h1M134 59.5h1M121 60.5h1M134 60.5h1M121 61.5h1M124 61.5h3M128 61.5h2M131 61.5h1M134 61.5h1M121 62.5h1M124 62.5h1M126 62.5h1M128 62.5h1M130 62.5h2M134 62.5h1M121 63.5h1M124 63.5h2M127 63.5h1M129 63.5h1M131 63.5h1M134 63.5h1M121 64.5h1M134 64.5h1M121 65.5h1M134 65.5h1M122 66.5h12M126 67.5h1M129 67.5h1M126 68.5h1M129 68.5h1M126 69.5h1M129 69.5h1M125 70.5h2M129 70.5h2M126 71.5h4M173 120.5h6M172 121.5h8M171 122.5h10M170 123.5h9M180 123.5h2M170 124.5h2M173 124.5h1M177 124.5h1M179 124.5h3M170 125.5h3M178 125.5h4M170 126.5h2M179 126.5h3M170 127.5h1M174 127.5h1M177 127.5h1M179 127.5h1M181 127.5h1M170 128.5h1M174 128.5h1M177 128.5h1M181 128.5h1M171 129.5h1M180 129.5h1M172 130.5h1M179 130.5h1M171 131.5h10M171 132.5h5M178 132.5h1M181 132.5h1M171 133.5h2M175 133.5h4M181 133.5h1M172 134.5h1M175 134.5h6M172 135.5h3M177 135.5h3M177 142.5h4M176 143.5h1M181 143.5h1M176 144.5h1M179 144.5h1M181 144.5h1M170 145.5h1M176 145.5h1M180 145.5h4M170 146.5h2M173 146.5h3M179 146.5h4M170 147.5h1M172 147.5h1M180 147.5h1M170 148.5h1M181 148.5h1M170 149.5h1M181 149.5h1M171 150.5h10M218 178.5h12M217 179.5h1M230 179.5h1M217 180.5h1M230 180.5h1M217 181.5h1M220 181.5h3M224 181.5h2M227 181.5h1M230 181.5h1M217 182.5h1M220 182.5h1M222 182.5h1M224 182.5h1M226 182.5h2M230 182.5h1M217 183.5h1M220 183.5h2M223 183.5h1M225 183.5h1M227 183.5h1M230 183.5h1M29 184.5h6M173 184.5h6M217 184.5h1M230 184.5h1M27 185.5h2M35 185.5h2M172 185.5h8M217 185.5h1M230 185.5h1M26 186.5h1M37 186.5h1M171 186.5h10M218 186.5h12M25 187.5h1M31 187.5h1M38 187.5h2M170 187.5h2M173 187.5h9M222 187.5h1M225 187.5h1M25 188.5h1M30 188.5h1M32 188.5h1M39 188.5h1M170 188.5h3M174 188.5h5M180 188.5h2M222 188.5h1M225 188.5h1M25 189.5h1M28 189.5h2M33 189.5h1M37 189.5h2M170 189.5h12M222 189.5h1M225 189.5h1M25 190.5h1M27 190.5h1M34 190.5h3M38 190.5h1M170 190.5h12M221 190.5h2M225 190.5h2M25 191.5h1M27 191.5h1M30 191.5h1M33 191.5h1M36 191.5h1M38 191.5h1M170 191.5h12M222 191.5h4M25 192.5h1M27 192.5h1M30 192.5h1M33 192.5h1M36 192.5h1M38 192.5h1M170 192.5h1M172 192.5h8M181 192.5h1M25 193.5h1M27 193.5h2M35 193.5h2M39 193.5h1M171 193.5h1M174 193.5h4M180 193.5h1M24 194.5h1M28 194.5h2M34 194.5h2M39 194.5h1M172 194.5h8M24 195.5h1M27 195.5h12M171 195.5h10M25 196.5h7M34 196.5h1M37 196.5h1M171 196.5h5M178 196.5h1M181 196.5h1M26 197.5h3M31 197.5h4M37 197.5h1M171 197.5h2M175 197.5h4M181 197.5h1M27 198.5h2M31 198.5h6M172 198.5h1M175 198.5h6M28 199.5h3M33 199.5h3M172 199.5h3M177 199.5h3"/></svg></svg><svg class="b" style="left:0;top:0" width="2434" height="1660" viewBox="0 0 2434 1660" fill="none"><rect x="622" y="540" width="32" height="16" rx="8" fill="#53b9d6"/><path d="M638 542.6L646.2 552.2H629.8z" fill="#265d68"/><rect x="1296" y="668" width="32" height="16" rx="8" fill="#53b9d6"/><path d="M1312 670.6L1320.2 680.2H1303.8z" fill="#265d68"/><rect x="668" y="984" width="32" height="16" rx="8" fill="#53b9d6"/><path d="M684 997.4L692.2 987.8H675.8z" fill="#265d68"/><rect x="892" y="984" width="32" height="16" rx="8" fill="#53b9d6"/><path d="M908 997.4L916.2 987.8H899.8z" fill="#265d68"/><rect x="924" y="1256" width="32" height="16" rx="8" fill="#e9623a"/><path d="M932.5 1264L944 1258.6V1269.4z" fill="#f8dfdc"/><path d="M637 581Q627 770 679 994" stroke="#53b9d6" stroke-width="4.4" stroke-linecap="butt"/><path d="M683 975Q682 790 632 556" stroke="#53b9d6" stroke-width="4.4" stroke-linecap="butt"/><path d="M907 974Q1102 825 1299 681" stroke="#53b9d6" stroke-width="4.4" stroke-linecap="butt"/><path d="M1311 707Q1110 844 911 987" stroke="#53b9d6" stroke-width="4.4" stroke-linecap="butt"/></svg>
<span id="l_house" class="t" style="left:591.90px;top:283.38px;font-size:22px;line-height:22px;color:#d8d8d8;font-weight:400;letter-spacing:3.300px;-webkit-text-stroke:.7px #d8d8d8;transform:scaleX(.955);transform-origin:0 0;">HOUSE</span><span id="l_cave" class="t" style="left:1277.90px;top:395.68px;font-size:22px;line-height:22px;color:#d8d8d8;font-weight:400;letter-spacing:3.233px;-webkit-text-stroke:.7px #d8d8d8;transform:scaleX(.955);transform-origin:0 0;">CAVE</span><span id="l_out" class="t" style="left:706.20px;top:807.38px;font-size:22px;line-height:22px;color:#d8d8d8;font-weight:400;letter-spacing:3.400px;-webkit-text-stroke:.7px #d8d8d8;transform:scaleX(.955);transform-origin:0 0;">OUTSIDE</span><span id="l_stars" class="t" style="left:1576.60px;top:869.08px;font-size:22px;line-height:22px;color:#d8d8d8;font-weight:400;letter-spacing:3.200px;-webkit-text-stroke:.7px #d8d8d8;transform:scaleX(.955);transform-origin:0 0;">STARS</span>
<div class="b" style="left:122px;top:146px;width:76px;height:308px;background:#2a2d2e;border:2px solid #000;border-radius:9px"></div>
<div class="b" style="left:124px;top:156px;width:72px;height:72px;background:#3a3d3e"></div>
<svg class="b" style="left:124px;top:156px" width="72" height="72" viewBox="-36 -36 72 72"><path d="M-13.3 -20L13.5 .4L2.4 2.8L9.2 16.7L2.8 19.7L-4.3 6L-13.3 12.9z" fill="#b8b9bb"/></svg>
<div class="b" style="left:140px;top:259px;width:40px;height:10px;background:#b8b9bb"></div>
<div class="b" style="left:155px;top:244px;width:10px;height:40px;background:#b8b9bb"></div>
<svg class="b" style="left:124px;top:300px" width="72" height="72" viewBox="124 300 72 72"><path fill-rule="evenodd" fill="#b8b9bb" d="M166.1 317.9a1 1 0 0 1 1.4 0L180 329.9a1 1 0 0 1 0 1.4L159.6 351H170v3.2H149.6L140.2 345a1.2 1.2 0 0 1 0-1.7zM156.6 332.3l9 8.8l-7.2 7.1l-9.2-8.9z M146 342.2l9 8.6h-4.6l-6.4-6.4z"/></svg>
<svg class="b" style="left:124px;top:372px" width="72" height="72" viewBox="124 372 72 72"><path fill="#b8b9bb" d="M139.9 399.3L158.5 408.4V428L139.9 418.6z M178.4 399.3L159.9 408.4V428L178.4 418.6z"/><path fill="none" stroke="#b8b9bb" stroke-width="1.8" stroke-linejoin="round" d="M159.2 389.2L177 397.9L159.2 406.6L141.4 397.9z"/><ellipse cx="159.2" cy="393.9" rx="3.2" ry="2.2" fill="#b8b9bb"/><ellipse cx="159.2" cy="393.4" rx="1.7" ry="0.9" fill="#4c4f50"/><ellipse cx="151.4" cy="398.2" rx="3.2" ry="2.2" fill="#b8b9bb"/><ellipse cx="151.4" cy="397.7" rx="1.7" ry="0.9" fill="#4c4f50"/><ellipse cx="167" cy="397.9" rx="3.2" ry="2.2" fill="#b8b9bb"/><ellipse cx="167" cy="397.4" rx="1.7" ry="0.9" fill="#4c4f50"/><ellipse cx="159.2" cy="402.2" rx="3.2" ry="2.2" fill="#b8b9bb"/><ellipse cx="159.2" cy="401.7" rx="1.7" ry="0.9" fill="#4c4f50"/></svg>
<div class="b" style="left:112px;top:1450px;width:234px;height:50px;background:#2a2d2e;border-top:2px solid #000;border-right:2px solid #000;border-top-right-radius:9px"></div>
<span id="t_status" class="t" style="left:131.30px;top:1463.99px;font-size:26px;line-height:26px;color:#b8b9bb;font-weight:400;letter-spacing:0.138px;-webkit-text-stroke:.45px currentColor;">House: X=4 Y=1</span>
<div class="b" style="left:1722px;top:134px;width:600px;height:1366px;background:#2b2e2f;border-left:2px solid #000"></div>
<span id="t_actor" class="t" style="left:1743.70px;top:158.30px;font-size:28px;line-height:28px;color:#bfc0c2;font-weight:700;letter-spacing:0.700px;">Actor</span>
<svg class="b" style="left:2280px;top:160px" width="24" height="24" viewBox="0 0 24 24"><path d="M3.6 3.6L20.4 20.4M20.4 3.6L3.6 20.4" stroke="#d2d3d5" stroke-width="4.2" fill="none"/></svg>
<div class="b" style="left:1724px;top:208px;width:598px;height:2px;background:#1f2122"></div>
<span id="t_aname" class="t" style="left:1744.70px;top:233.49px;font-size:26px;line-height:26px;color:#b9babc;font-weight:400;letter-spacing:0.533px;-webkit-text-stroke:.45px currentColor;">Actor name</span>
<div class="b inp" style="left:1744px;top:272px;width:558px;height:50px;"></div>
<span id="t_a3" class="t" style="left:1756.50px;top:285.68px;font-size:24px;line-height:24px;color:#8b8c8e;font-weight:400;letter-spacing:0.067px;-webkit-text-stroke:.45px currentColor;">Actor 3</span>
<span id="t_x" class="t" style="left:1745.50px;top:345.99px;font-size:26px;line-height:26px;color:#b9babc;font-weight:400;letter-spacing:0.000px;-webkit-text-stroke:.45px currentColor;">X</span>
<span id="t_y" class="t" style="left:2044.80px;top:345.99px;font-size:26px;line-height:26px;color:#b9babc;font-weight:400;letter-spacing:0.000px;-webkit-text-stroke:.45px currentColor;">Y</span>
<div class="b inp" style="left:1744px;top:384px;width:260px;height:50px;"></div>
<div class="b inp" style="left:2044px;top:384px;width:258px;height:50px;"></div>
<span id="t_3" class="t" style="left:1756.40px;top:397.08px;font-size:24px;line-height:24px;color:#e4e4e4;font-weight:400;letter-spacing:0.000px;-webkit-text-stroke:.45px currentColor;">3</span>
<span id="t_24" class="t" style="left:2054.40px;top:397.08px;font-size:24px;line-height:24px;color:#e4e4e4;font-weight:400;letter-spacing:0.400px;-webkit-text-stroke:.45px currentColor;">24</span>
<span id="t_ss" class="t" style="left:1743.70px;top:457.99px;font-size:26px;line-height:26px;color:#b9babc;font-weight:400;letter-spacing:0.655px;-webkit-text-stroke:.45px currentColor;">Sprite sheet</span>
<div class="b inp" style="left:1744px;top:496px;width:558px;height:50px;"></div>
<span id="t_npc" class="t" style="left:1761.50px;top:509.68px;font-size:24px;line-height:24px;color:#d6d6d6;font-weight:400;letter-spacing:-0.091px;-webkit-text-stroke:.45px currentColor;">npc003 (actor_animated)</span>
<svg class="b" style="left:2280.6px;top:510.29999999999995px" width="12" height="22" viewBox="0 0 12 22"><path d="M6 0.9L11 9.6H1z M6 21.1L11 12.4H1z" fill="#c8c8c8"/></svg>
<span id="t_mt" class="t" style="left:1742.70px;top:569.49px;font-size:26px;line-height:26px;color:#b9babc;font-weight:400;letter-spacing:0.833px;-webkit-text-stroke:.45px currentColor;">Movement Type</span>
<span id="t_dir" class="t" style="left:2041.90px;top:571.69px;font-size:26px;line-height:26px;color:#b9babc;font-weight:400;letter-spacing:0.975px;-webkit-text-stroke:.45px currentColor;">Direction</span>
<div class="b inp" style="left:1744px;top:608px;width:260px;height:50px;"></div>
<span id="t_rw" class="t" style="left:1761.50px;top:622.43px;font-size:23px;line-height:23px;color:#d6d6d6;font-weight:400;letter-spacing:-0.120px;-webkit-text-stroke:.45px currentColor;">Random Walk</span>
<svg class="b" style="left:1982.6px;top:622.3px" width="12" height="22" viewBox="0 0 12 22"><path d="M6 0.9L11 9.6H1z M6 21.1L11 12.4H1z" fill="#c8c8c8"/></svg>
<div class="b inp" style="left:2044px;top:610px;width:258px;height:50px;overflow:hidden"></div>
<div class="b" style="left:2173px;top:612px;width:64px;height:46px;background:#3c3e3f"></div>
<div class="b" style="left:2108px;top:612px;width:2px;height:46px;background:#1d1e1f"></div>
<div class="b" style="left:2172px;top:612px;width:2px;height:46px;background:#1d1e1f"></div>
<div class="b" style="left:2236px;top:612px;width:2px;height:46px;background:#1d1e1f"></div>
<svg class="b" style="left:2067px;top:625px" width="20" height="20" viewBox="-10 -10 20 20"><path d="M-8 0L6.5 -7V7z" fill="#c4c4c4"/></svg>
<svg class="b" style="left:2130.5px;top:625px" width="20" height="20" viewBox="-10 -10 20 20"><path d="M0 -7.5L7 6.5H-7z" fill="#c4c4c4"/></svg>
<svg class="b" style="left:2194.5px;top:625.5px" width="20" height="20" viewBox="-10 -10 20 20"><path d="M0 7.5L7 -6.5H-7z" fill="#b0b0b0"/></svg>
<svg class="b" style="left:2258.5px;top:625px" width="20" height="20" viewBox="-10 -10 20 20"><path d="M8 0L-6.5 -7V7z" fill="#c4c4c4"/></svg>
<div class="b" style="left:1724px;top:680px;width:598px;height:2px;background:#1f2122"></div>
<span id="t_as" class="t" style="left:1743.70px;top:704.10px;font-size:28px;line-height:28px;color:#bfc0c2;font-weight:700;letter-spacing:0.545px;">Actor Script</span>
<div class="b" style="left:1724px;top:754px;width:598px;height:58px;background:#202020"></div>
<span id="t_dt1" class="t" style="left:1743.70px;top:771.48px;font-size:24px;line-height:24px;color:#fff;font-weight:700;letter-spacing:0.564px;">Display Text</span>
<div class="b" style="left:1724px;top:812px;width:598px;height:122px;background:#3f464b"></div>
<div class="b inp" style="left:1744px;top:832px;width:558px;height:76px;"></div>
<span id="t_hy1" class="t" style="left:1755.50px;top:847.28px;font-size:22px;line-height:22px;color:#c6c6c6;font-weight:400;letter-spacing:0.480px;-webkit-text-stroke:.45px currentColor;">Have you seen my</span>
<span id="t_hy2" class="t" style="left:1756.20px;top:872.88px;font-size:22px;line-height:22px;color:#c6c6c6;font-weight:400;letter-spacing:0.583px;-webkit-text-stroke:.45px currentColor;">cat anywhere?</span>
<div class="b" style="left:1724px;top:934px;width:598px;height:2px;background:#1d1f20"></div>
<div class="b" style="left:1724px;top:936px;width:598px;height:56px;background:#235697"></div>
<span id="t_if" class="t" style="left:1748.10px;top:952.38px;font-size:24px;line-height:24px;color:#fff;font-weight:700;letter-spacing:0.967px;">If Flag</span>
<div class="b" style="left:1724px;top:992px;width:598px;height:402px;background:#3f464b;border-left:4px solid #235697"></div>
<div class="b inp" style="left:1748px;top:1012px;width:444px;height:50px;"></div>
<span id="t_sc" class="t" style="left:1766.00px;top:1024.33px;font-size:23px;line-height:23px;color:#d6d6d6;font-weight:400;letter-spacing:-0.343px;-webkit-text-stroke:.45px currentColor;">Seen Cat</span>
<svg class="b" style="left:2170px;top:1026.4px" width="12" height="22" viewBox="0 0 12 22"><path d="M6 0.9L11 9.6H1z M6 21.1L11 12.4H1z" fill="#c8c8c8"/></svg>
<span id="t_ren" class="t" style="left:2211.20px;top:1023.48px;font-size:24px;line-height:24px;color:#a9adb1;font-weight:400;letter-spacing:-0.040px;text-decoration:underline;text-decoration-thickness:2px;text-underline-offset:3px;-webkit-text-stroke:.45px currentColor;">Rename</span>
<div class="b" style="left:1738px;top:1092px;width:584px;height:292px;border-left:2px solid #1d1f20;border-bottom:2px solid #1d1f20"></div>
<div class="b" style="left:1738px;top:1092px;width:584px;height:58px;background:#202020"></div>
<span id="t_dt2" class="t" style="left:1759.80px;top:1109.88px;font-size:24px;line-height:24px;color:#fff;font-weight:700;letter-spacing:0.636px;">Display Text</span>
<div class="b inp" style="left:1760px;top:1170px;width:542px;height:76px;"></div>
<span id="t_hb1" class="t" style="left:1771.20px;top:1184.58px;font-size:22px;line-height:22px;color:#c6c6c6;font-weight:400;letter-spacing:0.753px;-webkit-text-stroke:.45px currentColor;">He's by the house?</span>
<span id="t_hb2" class="t" style="left:1772.20px;top:1210.78px;font-size:22px;line-height:22px;color:#c6c6c6;font-weight:400;letter-spacing:0.867px;-webkit-text-stroke:.45px currentColor;">Thank you!</span>
<div class="b" style="left:1740px;top:1272px;width:582px;height:2px;background:#1d1f20"></div>
<div class="b tb" style="left:1760px;top:1294px;width:542px;height:67px;"></div>
<span id="t_add" class="t" style="left:1943.20px;top:1315.99px;font-size:26px;line-height:26px;color:#fff;font-weight:400;letter-spacing:0.420px;-webkit-text-stroke:.75px currentColor;">Add Command</span>
<div class="b" style="left:1724px;top:1394px;width:598px;height:56px;background:#235697"></div>
<span id="t_else" class="t" style="left:1748.10px;top:1409.88px;font-size:24px;line-height:24px;color:#fff;font-weight:700;letter-spacing:0.400px;">Else</span>
<div class="b" style="left:1724px;top:1450px;width:598px;height:50px;background:#3f464b;border-left:4px solid #235697"></div>
<div class="b" style="left:1738px;top:1460px;width:584px;height:60px;border-left:2px solid #1d1f20;border-top:2px solid #1d1f20"></div>
<div class="b tb" style="left:1760px;top:1482px;width:542px;height:67px;"></div>
<div class="b" style="left:112px;top:64px;width:2210px;height:70px;background:linear-gradient(#3e3f41,#2b2c2e 96%);border-bottom:2px solid #000"></div>
<div class="b" style="left:138px;top:90px;width:24px;height:24px;background:#ee6a5e;border-radius:50%"></div>
<div class="b" style="left:178px;top:90px;width:24px;height:24px;background:#f5bd4f;border-radius:50%"></div>
<div class="b" style="left:218px;top:90px;width:24px;height:24px;background:#61c454;border-radius:50%"></div>
<div class="b" style="left:146px;top:98px;width:8px;height:8px;background:#5a0d08;border-radius:50%"></div>
<div class="b tb" style="left:272px;top:72px;width:260px;height:52px;"></div>
<span id="t_gw" class="t" style="left:289.60px;top:86.49px;font-size:26px;line-height:26px;color:#fff;font-weight:400;letter-spacing:0.444px;-webkit-text-stroke:.75px currentColor;">Game World</span>
<svg class="b" style="left:494px;top:90px" width="20" height="19"><path d="M0.6 1h18.1l-9.05 16.7z" fill="#fff"/></svg>
<div class="b tb" style="left:542px;top:72px;width:216px;height:52px;"></div>
<div class="b" style="left:560px;top:82px;width:36px;height:32px;background:#434344;border-radius:50%"></div>
<div class="b" style="left:704px;top:82px;width:36px;height:32px;background:#434344;border-radius:50%"></div>
<div class="b" style="left:569.5px;top:96.3px;width:17.0px;height:3.4000000000000057px;background:#fff"></div>
<div class="b" style="left:713.5px;top:96.3px;width:17.0px;height:3.4000000000000057px;background:#fff"></div>
<div class="b" style="left:720.3px;top:89.5px;width:3.400000000000091px;height:17.0px;background:#fff"></div>
<span id="t_zoom" class="t" style="left:614.30px;top:86.49px;font-size:26px;line-height:26px;color:#fff;font-weight:400;letter-spacing:0.200px;-webkit-text-stroke:.75px currentColor;">100%</span>
<span id="t_title" class="t" style="left:1169.60px;top:85.99px;font-size:26px;line-height:26px;color:#b4b5b7;font-weight:400;letter-spacing:0.500px;-webkit-text-stroke:.45px currentColor;">GB Studio</span>
<div class="b tb" style="left:2094px;top:72px;width:84px;height:52px;"></div>
<div class="b tb" style="left:2218px;top:72px;width:84px;height:52px;"></div>
<svg class="b" style="left:2116px;top:80px" width="44" height="38" viewBox="0 0 44 38"><path d="M5.7 15.2V6.2h7l6 4.7h17.7v4.3" fill="none" stroke="#fff" stroke-width="2.6" stroke-linejoin="miter"/><path d="M4.6 20.3h33.2l-2.9 11.4H7.5z" fill="none" stroke="#fff" stroke-width="2.6" stroke-linejoin="miter"/></svg>
<svg class="b" style="left:2246px;top:82px" width="30" height="34" viewBox="0 0 30 34"><path d="M2 2.8L27.6 17 2 31.3z" fill="#fcfdfd"/></svg>
</div></div>
</body></html>
